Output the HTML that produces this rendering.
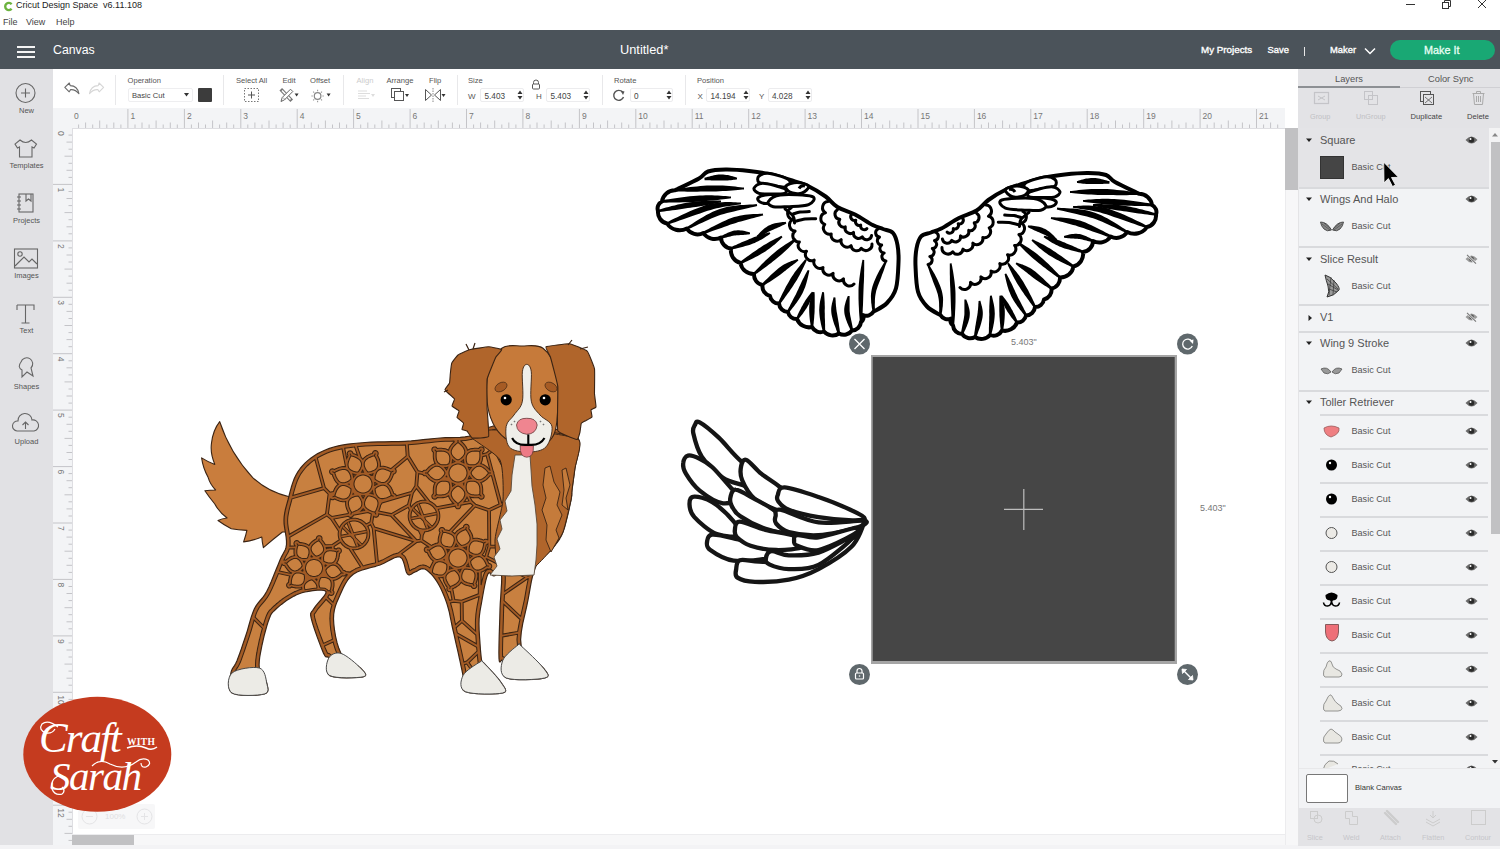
<!DOCTYPE html><html><head><meta charset="utf-8"><style>
*{margin:0;padding:0;box-sizing:border-box}
html,body{width:1500px;height:849px;overflow:hidden;background:#fff;font-family:"Liberation Sans",sans-serif;color:#333}
.a{position:absolute}
.t{position:absolute;white-space:nowrap;line-height:1}
svg{position:absolute;overflow:visible}
</style></head><body>
<div class="a" style="left:0;top:0;width:1500px;height:30px;background:#fff"></div>
<svg style="left:3px;top:1px" width="11" height="11" viewBox="0 0 11 11"><path d="M8.6 3.2 A3.6 3.6 0 1 0 8.6 7.8" fill="none" stroke="#6cb33f" stroke-width="2.4"/></svg>
<div class="t" style="left:16px;top:1px;font-size:9px;color:#222">Cricut Design Space&nbsp; v6.11.108</div>
<div class="t" style="left:3px;top:18px;font-size:9px;color:#444">File</div>
<div class="t" style="left:26px;top:18px;font-size:9px;color:#444">View</div>
<div class="t" style="left:56px;top:18px;font-size:9px;color:#444">Help</div>
<div class="a" style="left:1406px;top:4px;width:9px;height:1px;background:#333"></div>
<svg style="left:1441px;top:0px" width="10" height="9" viewBox="0 0 10 9"><rect x="1.5" y="2.5" width="6" height="6" fill="none" stroke="#333"/><path d="M3.5 2.5V0.5H9.5V6.5H7.5" fill="none" stroke="#333"/></svg>
<svg style="left:1477px;top:0px" width="10" height="9" viewBox="0 0 10 9"><path d="M1 0L9 8M9 0L1 8" stroke="#333" stroke-width="1"/></svg>
<div class="a" style="left:0;top:30px;width:1500px;height:39px;background:#4b535a"></div>
<div class="a" style="left:16.5px;top:45.8px;width:18.5px;height:2px;background:#f4f4f4;box-shadow:0 5px 0 #f4f4f4,0 10px 0 #f4f4f4"></div>
<div class="t" style="left:53px;top:44px;font-size:12.3px;color:#fff">Canvas</div>
<div class="t" style="left:620px;top:44px;font-size:12.8px;color:#fff">Untitled*</div>
<div class="t" style="left:1201px;top:45px;font-size:9.8px;color:#fff;-webkit-text-stroke:0.35px #fff">My Projects</div>
<div class="t" style="left:1267.5px;top:45px;font-size:9.4px;color:#fff;-webkit-text-stroke:0.35px #fff">Save</div>
<div class="a" style="left:1304px;top:46.5px;width:1.3px;height:9.5px;background:#e8e8e8"></div>
<div class="t" style="left:1330px;top:45px;font-size:9.4px;color:#fff;-webkit-text-stroke:0.35px #fff">Maker</div>
<svg style="left:1364px;top:47px" width="12" height="8" viewBox="0 0 12 8"><path d="M1 1.5L6 6.5L11 1.5" fill="none" stroke="#fff" stroke-width="1.5"/></svg>
<div class="a" style="left:1390px;top:40px;width:105px;height:20px;border-radius:10px;background:#19a874"></div>
<div class="t" style="left:1424px;top:44.5px;font-size:10.8px;color:#e8fff5;-webkit-text-stroke:0.3px #e8fff5">Make It</div>
<div class="a" style="left:0;top:69px;width:53px;height:780px;background:#e1e1e4"></div>
<div class="t" style="left:0;width:53px;text-align:center;top:107px;font-size:7.5px;color:#555">New</div>
<div class="t" style="left:0;width:53px;text-align:center;top:162px;font-size:7.5px;color:#555">Templates</div>
<div class="t" style="left:0;width:53px;text-align:center;top:217px;font-size:7.5px;color:#555">Projects</div>
<div class="t" style="left:0;width:53px;text-align:center;top:272px;font-size:7.5px;color:#555">Images</div>
<div class="t" style="left:0;width:53px;text-align:center;top:327px;font-size:7.5px;color:#555">Text</div>
<div class="t" style="left:0;width:53px;text-align:center;top:383px;font-size:7.5px;color:#555">Shapes</div>
<div class="t" style="left:0;width:53px;text-align:center;top:438px;font-size:7.5px;color:#555">Upload</div>
<svg style="left:0;top:0" width="53" height="849"><circle cx="25.5" cy="93" r="9.5" fill="none" stroke="#666" stroke-width="1.1"/><path d="M25.5 88.5V97.5M21 93H30" fill="none" stroke="#666" stroke-width="1.1" stroke-width="1.4"/><path d="M20 140 L15 144 L17.5 148 L19.5 147 V157 H32 V147 L34 148 L36.5 144 L31.5 140 Q25.7 145 20 140Z" fill="none" stroke="#666" stroke-width="1.1"/><rect x="19" y="194" width="14" height="18" fill="none" stroke="#666" stroke-width="1.1"/><path d="M17 197H21M17 201H21M17 205H21M17 209H21M26 194V201L28.5 199L31 201V194" fill="none" stroke="#666" stroke-width="1.1"/><rect x="14.5" y="249" width="23" height="19" fill="none" stroke="#666" stroke-width="1.1"/><circle cx="20" cy="254" r="2.2" fill="none" stroke="#666" stroke-width="1.1"/><path d="M15 266L24 257L29 262L32 259L37 264" fill="none" stroke="#666" stroke-width="1.1"/><path d="M17 305H34V310M17 305V310M25.5 305V323M21.5 323H29.5" fill="none" stroke="#666" stroke-width="1.1" stroke-width="2"/><path d="M21 362 A6 6 0 1 1 31 368 L33 376 L27 372 L22 377 L22 370 Q17 367 21 362Z" fill="none" stroke="#666" stroke-width="1.1"/><path d="M17 431 A5 5 0 0 1 18 421 A7 7 0 0 1 32 420 A5.5 5.5 0 0 1 34 431Z M25.5 429V422M22.5 425L25.5 422L28.5 425" fill="none" stroke="#666" stroke-width="1.1"/></svg>
<div class="a" style="left:53px;top:69px;width:1245px;height:39px;background:#fff"></div>
<div class="a" style="left:115px;top:75px;width:1px;height:30px;background:#e8e8ea"></div>
<div class="a" style="left:223px;top:75px;width:1px;height:30px;background:#e8e8ea"></div>
<div class="a" style="left:343px;top:75px;width:1px;height:30px;background:#e8e8ea"></div>
<div class="a" style="left:456.5px;top:75px;width:1px;height:30px;background:#e8e8ea"></div>
<div class="a" style="left:601.5px;top:75px;width:1px;height:30px;background:#e8e8ea"></div>
<div class="a" style="left:684.5px;top:75px;width:1px;height:30px;background:#e8e8ea"></div>
<svg style="left:0;top:0" width="1300" height="110"><path d="M64.8 87.3L69.3 83L70.2 85.6Q77.5 85.8 78.9 93.6Q75.5 89.3 70.6 89.6L69.2 91.8Z" fill="none" stroke="#6a6a6a" stroke-width="1.1" stroke-linejoin="round"/><path d="M103.6 87.3L99.1 83L98.2 85.6Q90.9 85.8 89.5 93.6Q92.9 89.3 97.8 89.6L99.2 91.8Z" fill="none" stroke="#d6d6d6" stroke-width="1.1" stroke-linejoin="round"/></svg>
<div class="t" style="left:127.5px;top:76.5px;font-size:7.6px;color:#555">Operation</div>
<div class="t" style="left:236px;top:76.5px;font-size:7.6px;color:#555">Select All</div>
<div class="t" style="left:282.5px;top:76.5px;font-size:7.6px;color:#555">Edit</div>
<div class="t" style="left:310px;top:76.5px;font-size:7.6px;color:#555">Offset</div>
<div class="t" style="left:356.5px;top:76.5px;font-size:7.6px;color:#ccc">Align</div>
<div class="t" style="left:386.5px;top:76.5px;font-size:7.6px;color:#555">Arrange</div>
<div class="t" style="left:429px;top:76.5px;font-size:7.6px;color:#555">Flip</div>
<div class="t" style="left:468px;top:76.5px;font-size:7.6px;color:#555">Size</div>
<div class="t" style="left:614px;top:76.5px;font-size:7.6px;color:#555">Rotate</div>
<div class="t" style="left:697px;top:76.5px;font-size:7.6px;color:#555">Position</div>
<div class="a" style="left:127.5px;top:88px;width:65px;height:14px;border:1px solid #eeeef0;border-radius:2px"></div>
<div class="t" style="left:132px;top:92px;font-size:7.6px;color:#444">Basic Cut</div>
<svg style="left:184px;top:93px" width="5" height="4"><path d="M0 0H5L2.5 3.5Z" fill="#333"/></svg>
<div class="a" style="left:198px;top:88px;width:14px;height:14px;background:#3c3c3c;border-radius:1px"></div>
<svg style="left:0;top:0" width="1300" height="110"><rect x="244.5" y="88.5" width="14" height="13" fill="none" stroke="#777" stroke-dasharray="1.5 1.5"/><path d="M251.5 91.5V98.5M248 95H255" stroke="#555" stroke-width="1"/><path d="M282 90.5L290.5 99.5" stroke="#777" stroke-width="3.6" stroke-linecap="square"/><path d="M282 90.5L290.5 99.5" stroke="#fff" stroke-width="1.6"/><path d="M281 101.5L282.2 97.5L290.5 89.2L292.8 91.5L284.5 99.8Z" fill="#fff" stroke="#666" stroke-width="1"/><path d="M283 97.5L285.5 100" stroke="#888" stroke-width="0.8"/><path d="M294.6 93.6H298.6L296.6 96.4Z" fill="#333"/><circle cx="317.6" cy="96" r="3.3" fill="none" stroke="#888" stroke-width="1.2"/><path d="M317.6 89.8V91.2M317.6 100.8V102.2M311.4 96H312.8M322.4 96H323.8M313.2 91.6L314.2 92.6M321 99.4L322 100.4M313.2 100.4L314.2 99.4M321 92.6L322 91.6" stroke="#999" stroke-width="1.1"/><path d="M326.6 93.6H330.6L328.6 96.4Z" fill="#333"/><path d="M358 91H367M358 93.5H370M358 96H366M358 98.5H369" stroke="#ddd" stroke-width="1"/><path d="M371 94H375L373 97Z" fill="#ddd"/><rect x="391.5" y="88.5" width="9" height="9" fill="#fff" stroke="#555"/><rect x="394.5" y="91.5" width="9" height="9" fill="#fff" stroke="#555"/><path d="M405 94H409L407 97Z" fill="#333"/><path d="M425.5 89.5V100.5L431.5 95Z M440.5 89.5V100.5L434.5 95Z" fill="none" stroke="#555"/><path d="M433 88V102" stroke="#888" stroke-dasharray="1.5 1"/><path d="M441.5 94H445.5L443.5 97Z" fill="#333"/><path d="M533.5 84V82.5A2.5 2.5 0 0 1 538.5 82.5V84" fill="none" stroke="#555"/><rect x="532.5" y="84" width="7" height="5" rx="1" fill="none" stroke="#555"/><path d="M622.5 92 A5 5 0 1 0 623.5 97" fill="none" stroke="#555" stroke-width="1.4"/><path d="M620.5 90.5L624.5 91.5L623 95Z" fill="#555"/></svg>
<div class="a" style="left:480px;top:88px;width:44px;height:14px;border:1px solid #ececee;border-radius:2px"></div>
<div class="t" style="left:484.5px;top:92.5px;font-size:8.2px;color:#444">5.403</div>
<svg style="left:517px;top:90px" width="6" height="10"><path d="M0.5 4H5.5L3 0.5Z M0.5 6H5.5L3 9.5Z" fill="#333"/></svg>
<div class="t" style="left:468px;top:92.5px;font-size:8px;color:#555">W</div>
<div class="a" style="left:546px;top:88px;width:44px;height:14px;border:1px solid #ececee;border-radius:2px"></div>
<div class="t" style="left:550.5px;top:92.5px;font-size:8.2px;color:#444">5.403</div>
<svg style="left:583px;top:90px" width="6" height="10"><path d="M0.5 4H5.5L3 0.5Z M0.5 6H5.5L3 9.5Z" fill="#333"/></svg>
<div class="t" style="left:536px;top:92.5px;font-size:8px;color:#555">H</div>
<div class="a" style="left:629.5px;top:88px;width:43px;height:14px;border:1px solid #ececee;border-radius:2px"></div>
<div class="t" style="left:634.0px;top:92.5px;font-size:8.2px;color:#444">0</div>
<svg style="left:665.5px;top:90px" width="6" height="10"><path d="M0.5 4H5.5L3 0.5Z M0.5 6H5.5L3 9.5Z" fill="#333"/></svg>
<div class="a" style="left:706px;top:88px;width:44px;height:14px;border:1px solid #ececee;border-radius:2px"></div>
<div class="t" style="left:710.5px;top:92.5px;font-size:8.2px;color:#444">14.194</div>
<svg style="left:743px;top:90px" width="6" height="10"><path d="M0.5 4H5.5L3 0.5Z M0.5 6H5.5L3 9.5Z" fill="#333"/></svg>
<div class="t" style="left:697.5px;top:92.5px;font-size:8px;color:#555">X</div>
<div class="a" style="left:767.5px;top:88px;width:44px;height:14px;border:1px solid #ececee;border-radius:2px"></div>
<div class="t" style="left:772.0px;top:92.5px;font-size:8.2px;color:#444">4.028</div>
<svg style="left:804.5px;top:90px" width="6" height="10"><path d="M0.5 4H5.5L3 0.5Z M0.5 6H5.5L3 9.5Z" fill="#333"/></svg>
<div class="t" style="left:759px;top:92.5px;font-size:8px;color:#555">Y</div>
<div class="a" style="left:53px;top:108px;width:1232px;height:20px;background:#f3f4f6"></div>
<div class="a" style="left:53px;top:128px;width:19px;height:717px;background:#f3f4f6"></div>
<svg style="left:0;top:0" width="1500" height="849"><path d="M78.6 124.5V128M85.6 122.5V128M92.7 124.5V128M99.7 120.5V128M106.8 124.5V128M113.8 122.5V128M120.9 124.5V128M127.9 109V128M135.0 124.5V128M142.0 122.5V128M149.1 124.5V128M156.1 120.5V128M163.2 124.5V128M170.3 122.5V128M177.3 124.5V128M184.4 109V128M191.4 124.5V128M198.5 122.5V128M205.5 124.5V128M212.6 120.5V128M219.6 124.5V128M226.7 122.5V128M233.7 124.5V128M240.8 109V128M247.8 124.5V128M254.9 122.5V128M262.0 124.5V128M269.0 120.5V128M276.1 124.5V128M283.1 122.5V128M290.2 124.5V128M297.2 109V128M304.3 124.5V128M311.3 122.5V128M318.4 124.5V128M325.4 120.5V128M332.5 124.5V128M339.5 122.5V128M346.6 124.5V128M353.6 109V128M360.7 124.5V128M367.8 122.5V128M374.8 124.5V128M381.9 120.5V128M388.9 124.5V128M396.0 122.5V128M403.0 124.5V128M410.1 109V128M417.1 124.5V128M424.2 122.5V128M431.2 124.5V128M438.3 120.5V128M445.3 124.5V128M452.4 122.5V128M459.5 124.5V128M466.5 109V128M473.6 124.5V128M480.6 122.5V128M487.7 124.5V128M494.7 120.5V128M501.8 124.5V128M508.8 122.5V128M515.9 124.5V128M522.9 109V128M530.0 124.5V128M537.0 122.5V128M544.1 124.5V128M551.2 120.5V128M558.2 124.5V128M565.3 122.5V128M572.3 124.5V128M579.4 109V128M586.4 124.5V128M593.5 122.5V128M600.5 124.5V128M607.6 120.5V128M614.6 124.5V128M621.7 122.5V128M628.7 124.5V128M635.8 109V128M642.9 124.5V128M649.9 122.5V128M657.0 124.5V128M664.0 120.5V128M671.1 124.5V128M678.1 122.5V128M685.2 124.5V128M692.2 109V128M699.3 124.5V128M706.3 122.5V128M713.4 124.5V128M720.4 120.5V128M727.5 124.5V128M734.6 122.5V128M741.6 124.5V128M748.7 109V128M755.7 124.5V128M762.8 122.5V128M769.8 124.5V128M776.9 120.5V128M783.9 124.5V128M791.0 122.5V128M798.0 124.5V128M805.1 109V128M812.1 124.5V128M819.2 122.5V128M826.3 124.5V128M833.3 120.5V128M840.4 124.5V128M847.4 122.5V128M854.5 124.5V128M861.5 109V128M868.6 124.5V128M875.6 122.5V128M882.7 124.5V128M889.7 120.5V128M896.8 124.5V128M903.8 122.5V128M910.9 124.5V128M918.0 109V128M925.0 124.5V128M932.1 122.5V128M939.1 124.5V128M946.2 120.5V128M953.2 124.5V128M960.3 122.5V128M967.3 124.5V128M974.4 109V128M981.4 124.5V128M988.5 122.5V128M995.5 124.5V128M1002.6 120.5V128M1009.6 124.5V128M1016.7 122.5V128M1023.8 124.5V128M1030.8 109V128M1037.9 124.5V128M1044.9 122.5V128M1052.0 124.5V128M1059.0 120.5V128M1066.1 124.5V128M1073.1 122.5V128M1080.2 124.5V128M1087.2 109V128M1094.3 124.5V128M1101.3 122.5V128M1108.4 124.5V128M1115.5 120.5V128M1122.5 124.5V128M1129.6 122.5V128M1136.6 124.5V128M1143.7 109V128M1150.7 124.5V128M1157.8 122.5V128M1164.8 124.5V128M1171.9 120.5V128M1178.9 124.5V128M1186.0 122.5V128M1193.0 124.5V128M1200.1 109V128M1207.2 124.5V128M1214.2 122.5V128M1221.3 124.5V128M1228.3 120.5V128M1235.4 124.5V128M1242.4 122.5V128M1249.5 124.5V128M1256.5 109V128M1263.6 124.5V128M1270.6 122.5V128M1277.7 124.5V128M68.5 135.1H72M66.5 142.1H72M68.5 149.2H72M64.5 156.2H72M68.5 163.3H72M66.5 170.3H72M68.5 177.4H72M53 184.4H72M68.5 191.5H72M66.5 198.5H72M68.5 205.6H72M64.5 212.6H72M68.5 219.7H72M66.5 226.8H72M68.5 233.8H72M53 240.9H72M68.5 247.9H72M66.5 255.0H72M68.5 262.0H72M64.5 269.1H72M68.5 276.1H72M66.5 283.2H72M68.5 290.2H72M53 297.3H72M68.5 304.3H72M66.5 311.4H72M68.5 318.5H72M64.5 325.5H72M68.5 332.6H72M66.5 339.6H72M68.5 346.7H72M53 353.7H72M68.5 360.8H72M66.5 367.8H72M68.5 374.9H72M64.5 381.9H72M68.5 389.0H72M66.5 396.0H72M68.5 403.1H72M53 410.1H72M68.5 417.2H72M66.5 424.3H72M68.5 431.3H72M64.5 438.4H72M68.5 445.4H72M66.5 452.5H72M68.5 459.5H72M53 466.6H72M68.5 473.6H72M66.5 480.7H72M68.5 487.7H72M64.5 494.8H72M68.5 501.8H72M66.5 508.9H72M68.5 516.0H72M53 523.0H72M68.5 530.1H72M66.5 537.1H72M68.5 544.2H72M64.5 551.2H72M68.5 558.3H72M66.5 565.3H72M68.5 572.4H72M53 579.4H72M68.5 586.5H72M66.5 593.5H72M68.5 600.6H72M64.5 607.7H72M68.5 614.7H72M66.5 621.8H72M68.5 628.8H72M53 635.9H72M68.5 642.9H72M66.5 650.0H72M68.5 657.0H72M64.5 664.1H72M68.5 671.1H72M66.5 678.2H72M68.5 685.2H72M53 692.3H72M68.5 699.4H72M66.5 706.4H72M68.5 713.5H72M64.5 720.5H72M68.5 727.6H72M66.5 734.6H72M68.5 741.7H72M53 748.7H72M68.5 755.8H72M66.5 762.8H72M68.5 769.9H72M64.5 776.9H72M68.5 784.0H72M66.5 791.1H72M68.5 798.1H72M53 805.2H72M68.5 812.2H72M66.5 819.3H72M68.5 826.3H72M64.5 833.4H72M68.5 840.4H72" stroke="#c4c4c8" stroke-width="1" fill="none"/><text x="74.0" y="119" font-size="8.5" fill="#777" font-family="Liberation Sans">0</text><text x="130.4" y="119" font-size="8.5" fill="#777" font-family="Liberation Sans">1</text><text x="186.9" y="119" font-size="8.5" fill="#777" font-family="Liberation Sans">2</text><text x="243.3" y="119" font-size="8.5" fill="#777" font-family="Liberation Sans">3</text><text x="299.7" y="119" font-size="8.5" fill="#777" font-family="Liberation Sans">4</text><text x="356.1" y="119" font-size="8.5" fill="#777" font-family="Liberation Sans">5</text><text x="412.6" y="119" font-size="8.5" fill="#777" font-family="Liberation Sans">6</text><text x="469.0" y="119" font-size="8.5" fill="#777" font-family="Liberation Sans">7</text><text x="525.4" y="119" font-size="8.5" fill="#777" font-family="Liberation Sans">8</text><text x="581.9" y="119" font-size="8.5" fill="#777" font-family="Liberation Sans">9</text><text x="638.3" y="119" font-size="8.5" fill="#777" font-family="Liberation Sans">10</text><text x="694.7" y="119" font-size="8.5" fill="#777" font-family="Liberation Sans">11</text><text x="751.2" y="119" font-size="8.5" fill="#777" font-family="Liberation Sans">12</text><text x="807.6" y="119" font-size="8.5" fill="#777" font-family="Liberation Sans">13</text><text x="864.0" y="119" font-size="8.5" fill="#777" font-family="Liberation Sans">14</text><text x="920.5" y="119" font-size="8.5" fill="#777" font-family="Liberation Sans">15</text><text x="976.9" y="119" font-size="8.5" fill="#777" font-family="Liberation Sans">16</text><text x="1033.3" y="119" font-size="8.5" fill="#777" font-family="Liberation Sans">17</text><text x="1089.7" y="119" font-size="8.5" fill="#777" font-family="Liberation Sans">18</text><text x="1146.2" y="119" font-size="8.5" fill="#777" font-family="Liberation Sans">19</text><text x="1202.6" y="119" font-size="8.5" fill="#777" font-family="Liberation Sans">20</text><text x="1259.0" y="119" font-size="8.5" fill="#777" font-family="Liberation Sans">21</text><text transform="translate(58,131.0) rotate(90)" font-size="8.5" fill="#777" font-family="Liberation Sans">0</text><text transform="translate(58,187.4) rotate(90)" font-size="8.5" fill="#777" font-family="Liberation Sans">1</text><text transform="translate(58,243.9) rotate(90)" font-size="8.5" fill="#777" font-family="Liberation Sans">2</text><text transform="translate(58,300.3) rotate(90)" font-size="8.5" fill="#777" font-family="Liberation Sans">3</text><text transform="translate(58,356.7) rotate(90)" font-size="8.5" fill="#777" font-family="Liberation Sans">4</text><text transform="translate(58,413.1) rotate(90)" font-size="8.5" fill="#777" font-family="Liberation Sans">5</text><text transform="translate(58,469.6) rotate(90)" font-size="8.5" fill="#777" font-family="Liberation Sans">6</text><text transform="translate(58,526.0) rotate(90)" font-size="8.5" fill="#777" font-family="Liberation Sans">7</text><text transform="translate(58,582.4) rotate(90)" font-size="8.5" fill="#777" font-family="Liberation Sans">8</text><text transform="translate(58,638.9) rotate(90)" font-size="8.5" fill="#777" font-family="Liberation Sans">9</text><text transform="translate(58,695.3) rotate(90)" font-size="8.5" fill="#777" font-family="Liberation Sans">10</text><text transform="translate(58,751.7) rotate(90)" font-size="8.5" fill="#777" font-family="Liberation Sans">11</text><text transform="translate(58,808.2) rotate(90)" font-size="8.5" fill="#777" font-family="Liberation Sans">12</text></svg>
<div class="a" style="left:72px;top:127.5px;width:1213px;height:1px;background:#dedee2"></div>
<div class="a" style="left:71.5px;top:128px;width:1px;height:717px;background:#dedee2"></div>
<div class="a" style="left:1285px;top:128px;width:13px;height:717px;background:#f7f7f8;border-left:1px solid #ececee"></div>
<div class="a" style="left:1285px;top:128px;width:12.5px;height:62px;background:#c1c1c3"></div>
<div class="a" style="left:72px;top:834px;width:1213px;height:11px;background:#f7f7f8;border-top:1px solid #ececee"></div>
<div class="a" style="left:72px;top:835px;width:62px;height:10px;background:#c1c1c3"></div>
<div class="a" style="left:0;top:845px;width:1500px;height:4px;background:#f3f3f5"></div>
<div class="a" style="left:78px;top:804px;width:77px;height:25px;background:#f7f7f8;border-radius:2px"></div>
<svg style="left:0;top:0" width="200" height="849"><circle cx="89.5" cy="816.5" r="7.5" fill="none" stroke="#e4e4e6"/><path d="M86 816.5H93" stroke="#e4e4e6"/><circle cx="144.5" cy="816.5" r="7.5" fill="none" stroke="#e4e4e6"/><path d="M141 816.5H148M144.5 813V820" stroke="#e4e4e6"/></svg>
<div class="t" style="left:105px;top:813px;font-size:8px;color:#e0e0e2">100%</div>
<svg style="left:0;top:0" width="1500" height="849" viewBox="0 0 1500 849">
<rect x="871" y="355" width="306" height="309" fill="#a5a5a5"/>
<rect x="872.7" y="357" width="302" height="304" fill="#464646"/>
<path d="M1023.8 489V530M1004 509.3H1043" stroke="#bdbdbd" stroke-width="1.2"/>
<text x="1011" y="344.5" font-size="9" fill="#777" font-family="Liberation Sans">5.403"</text>
<text x="1200" y="511" font-size="9" fill="#777" font-family="Liberation Sans">5.403"</text>
<circle cx="859.5" cy="344" r="10.5" fill="#5f686c"/><path d="M854.5 339L864.5 349M864.5 339L854.5 349" stroke="#fff" stroke-width="1.3"/>
<circle cx="1187.5" cy="344" r="10.5" fill="#5f686c"/><path d="M1192 341.5A5 5 0 1 0 1192.3 346" fill="none" stroke="#fff" stroke-width="1.3"/><path d="M1189.5 340.5L1193.5 339.5L1193 344Z" fill="#fff"/>
<circle cx="859.5" cy="674.5" r="10.5" fill="#5f686c"/><rect x="855.5" y="673" width="8" height="6" rx="1" fill="none" stroke="#fff" stroke-width="1.2"/><path d="M857 673V671A2.5 2.5 0 0 1 862 671V673" fill="none" stroke="#fff" stroke-width="1.2"/><circle cx="859.5" cy="676" r="0.8" fill="#fff"/>
<circle cx="1187.5" cy="674.5" r="10.5" fill="#5f686c"/><path d="M1182.5 669.5L1192.5 679.5" stroke="#fff" stroke-width="1.4"/><path d="M1182 669L1186.5 669.5L1182.5 673.5Z M1193 680L1188.5 679.5L1192.5 675.5Z" fill="#fff" stroke="#fff" stroke-width="0.8"/>
<g><path d="M675.0 190.3C679.0 188.3 693.5 181.6 699.0 178.5C704.5 175.4 703.5 173.0 708.0 171.5C712.5 170.0 718.8 169.6 725.7 169.5C732.6 169.4 742.0 170.2 749.2 171.0C756.4 171.8 762.1 172.5 769.0 174.0C775.9 175.5 783.8 178.0 790.3 180.0C796.8 182.0 802.1 183.2 808.0 186.0C813.9 188.8 820.7 193.0 825.6 196.5C830.5 200.0 832.5 204.0 837.4 207.0C842.3 210.0 849.1 211.5 855.0 214.5C860.9 217.5 868.0 222.6 872.7 225.0C877.4 227.4 879.6 227.7 883.0 229.0C886.4 230.3 890.6 230.3 893.0 233.0C895.4 235.7 896.6 240.1 897.5 245.0C898.4 249.9 898.8 255.2 898.5 262.4C898.2 269.6 897.9 281.5 896.0 288.3C894.1 295.1 890.7 299.1 887.0 303.0C883.3 306.9 875.8 310.2 873.6 311.6A8.3 8.3 0 0 1 863.0 315.0A5.5 5.5 0 0 1 861.0 322.0A9.3 9.3 0 0 1 852.0 330.5A10.0 10.0 0 0 1 839.0 333.5A11.3 11.3 0 0 1 824.0 331.5A9.6 9.6 0 0 1 812.0 327.0A12.8 12.8 0 0 1 797.0 319.0A8.6 8.6 0 0 1 788.0 312.0A9.3 9.3 0 0 1 779.0 303.5A8.8 8.8 0 0 1 770.0 296.0A10.0 10.0 0 0 1 762.5 285.0A10.4 10.4 0 0 1 754.0 274.0A13.1 13.1 0 0 1 740.5 263.0A13.0 13.0 0 0 1 731.0 248.5A11.1 11.1 0 0 1 721.0 237.5A13.7 13.7 0 0 1 703.3 233.0A12.8 12.8 0 0 1 686.8 228.5A15.3 15.3 0 0 1 667.0 223.5A11.6 11.6 0 0 1 658.0 211.0A7.7 7.7 0 0 1 662.0 201.5A12.9 12.9 0 0 1 675.0 190.3Z" fill="#fff" stroke="#000" stroke-width="4" stroke-linejoin="round"/>
<path d="M704.6 180.2L705.4 180.2L706.3 180.3L707.5 180.3L708.7 180.3L710.0 180.3L711.4 180.4L712.9 180.4L714.4 180.4L715.9 180.4L717.3 180.4L718.7 180.4L720.0 180.5L721.4 180.5L722.8 180.5L724.4 180.5L726.0 180.5L727.7 180.4L729.3 180.3L730.9 180.2L732.4 180.0L733.8 179.8L735.0 179.7L736.1 179.5L736.9 179.4L737.1 177.6L736.3 177.4L735.2 177.0L734.0 176.7L732.7 176.3L731.2 175.9L729.6 175.5L728.0 175.1L726.3 174.9L724.7 174.7L723.0 174.5L721.5 174.5L720.0 174.5L718.5 174.6L717.0 174.8L715.4 175.0L713.9 175.3L712.4 175.7L710.9 176.0L709.5 176.4L708.2 176.7L707.0 177.1L706.0 177.4L705.1 177.6L704.4 177.8Z" fill="#000"/>
<path d="M675.1 191.5L676.8 191.5L678.9 191.6L681.4 191.6L684.2 191.6L687.3 191.7L690.5 191.7L693.8 191.7L697.2 191.7L700.6 191.6L703.9 191.6L707.1 191.5L710.1 191.5L713.0 191.4L716.1 191.4L719.4 191.3L722.7 191.1L726.0 190.9L729.2 190.7L732.3 190.5L735.2 190.2L737.9 190.0L740.3 189.8L742.4 189.6L744.0 189.4L744.0 187.6L742.4 187.4L740.3 187.2L737.9 186.9L735.2 186.6L732.3 186.3L729.2 186.1L726.0 185.8L722.7 185.6L719.4 185.5L716.1 185.4L712.9 185.4L709.9 185.5L706.9 185.6L703.7 185.8L700.4 186.1L697.0 186.4L693.6 186.8L690.2 187.1L687.0 187.5L684.0 187.9L681.2 188.3L678.7 188.6L676.6 188.9L674.9 189.1Z" fill="#000"/>
<path d="M662.1 202.7L664.0 202.7L666.3 202.7L669.1 202.6L672.3 202.6L675.7 202.5L679.3 202.4L682.9 202.3L686.7 202.2L690.3 202.0L693.8 201.9L697.2 201.7L700.2 201.5L703.1 201.3L706.1 201.1L709.1 200.8L712.1 200.6L715.1 200.3L717.9 200.0L720.7 199.6L723.3 199.3L725.6 199.0L727.7 198.7L729.6 198.5L731.0 198.3L731.0 196.5L729.5 196.4L727.7 196.3L725.6 196.1L723.2 195.9L720.6 195.7L717.8 195.6L714.9 195.4L711.9 195.3L708.9 195.3L705.8 195.3L702.8 195.4L699.8 195.5L696.8 195.7L693.4 196.0L689.9 196.3L686.2 196.8L682.5 197.2L678.9 197.7L675.3 198.2L671.9 198.7L668.8 199.2L666.1 199.6L663.7 200.0L661.9 200.3Z" fill="#000"/>
<path d="M658.2 212.2L659.8 212.0L661.8 211.7L664.1 211.4L666.7 211.1L669.5 210.7L672.5 210.3L675.5 209.9L678.7 209.4L681.8 209.0L684.8 208.5L687.7 208.1L690.4 207.7L693.1 207.3L695.9 206.9L698.9 206.5L701.8 206.0L704.8 205.5L707.7 205.0L710.5 204.5L713.2 204.0L715.6 203.5L717.8 203.1L719.6 202.7L721.1 202.4L720.9 200.6L719.4 200.6L717.5 200.6L715.3 200.6L712.8 200.6L710.1 200.7L707.3 200.7L704.3 200.8L701.3 201.0L698.2 201.2L695.2 201.5L692.3 201.9L689.6 202.3L686.8 202.8L683.9 203.3L680.9 204.0L677.8 204.6L674.7 205.4L671.7 206.1L668.7 206.9L666.0 207.6L663.5 208.3L661.2 208.9L659.3 209.4L657.8 209.8Z" fill="#000"/>
<path d="M667.4 224.6L669.6 223.9L672.4 223.0L675.7 221.9L679.4 220.6L683.3 219.2L687.5 217.8L691.7 216.3L696.0 214.8L700.1 213.4L704.0 212.0L707.6 210.8L710.8 209.9L713.7 209.1L716.7 208.3L719.7 207.7L722.7 207.1L725.6 206.6L728.3 206.2L731.0 205.8L733.5 205.4L735.8 205.1L737.8 204.8L739.6 204.5L741.1 204.2L740.9 202.4L739.5 202.4L737.7 202.4L735.6 202.3L733.3 202.2L730.8 202.1L728.0 202.1L725.1 202.1L722.1 202.2L718.9 202.5L715.7 202.9L712.5 203.4L709.2 204.1L705.8 205.1L702.1 206.4L698.1 207.9L694.0 209.5L689.8 211.3L685.6 213.2L681.6 215.1L677.8 216.9L674.3 218.6L671.2 220.1L668.6 221.4L666.6 222.4Z" fill="#000"/>
<path d="M687.4 229.6L689.0 228.8L691.1 227.9L693.5 226.8L696.2 225.5L699.1 224.1L702.1 222.7L705.3 221.2L708.6 219.7L711.8 218.3L715.0 217.0L718.1 215.8L720.9 214.8L723.9 213.9L727.1 213.1L730.5 212.3L733.9 211.4L737.5 210.6L740.9 209.8L744.3 209.0L747.5 208.3L750.5 207.6L753.1 206.9L755.4 206.4L757.2 205.9L756.8 204.1L755.0 204.2L752.7 204.4L750.0 204.5L747.0 204.7L743.7 204.9L740.2 205.1L736.6 205.5L732.9 206.0L729.2 206.6L725.7 207.3L722.3 208.2L719.1 209.2L715.9 210.4L712.7 211.8L709.5 213.4L706.3 215.1L703.1 216.9L700.0 218.7L697.1 220.5L694.4 222.3L691.9 223.9L689.7 225.3L687.8 226.5L686.2 227.4Z" fill="#000"/>
<path d="M703.8 234.1L705.4 233.6L707.4 232.9L709.8 232.1L712.4 231.1L715.3 230.1L718.3 229.0L721.4 227.9L724.6 226.8L727.6 225.7L730.6 224.6L733.4 223.7L735.9 222.9L738.3 222.1L740.9 221.4L743.5 220.7L746.2 220.0L748.8 219.3L751.4 218.6L753.8 218.0L756.1 217.3L758.3 216.8L760.2 216.2L761.8 215.8L763.2 215.4L762.8 213.6L761.5 213.7L759.8 213.8L757.8 213.9L755.6 213.9L753.2 214.1L750.6 214.3L747.9 214.5L745.1 214.8L742.3 215.2L739.5 215.8L736.8 216.4L734.1 217.1L731.4 218.0L728.5 219.1L725.5 220.4L722.5 221.7L719.5 223.2L716.5 224.7L713.6 226.2L710.9 227.6L708.4 228.9L706.2 230.1L704.3 231.1L702.8 231.9Z" fill="#000"/>
<path d="M721.4 238.6L722.1 238.5L723.0 238.3L724.0 238.0L725.2 237.7L726.4 237.4L727.7 237.1L729.1 236.7L730.4 236.4L731.7 236.1L733.0 235.8L734.2 235.6L735.4 235.5L736.5 235.3L737.7 235.3L739.0 235.2L740.4 235.1L741.9 235.0L743.3 234.9L744.6 234.8L746.0 234.7L747.2 234.5L748.3 234.4L749.2 234.3L750.0 234.2L750.0 232.4L749.3 232.2L748.4 232.0L747.4 231.7L746.2 231.4L744.9 231.1L743.5 230.8L742.0 230.6L740.5 230.4L739.0 230.3L737.5 230.3L736.0 230.4L734.6 230.5L733.3 230.8L731.9 231.2L730.5 231.7L729.1 232.2L727.7 232.8L726.4 233.4L725.2 234.0L724.0 234.6L722.9 235.2L722.0 235.6L721.2 236.1L720.6 236.4Z" fill="#000"/>
<path d="M758.1 237.8L758.8 237.4L759.6 236.9L760.6 236.4L761.6 235.8L762.7 235.1L763.9 234.4L765.2 233.7L766.4 232.9L767.7 232.2L768.9 231.6L770.1 231.0L771.2 230.4L772.4 229.9L773.6 229.4L775.0 228.8L776.5 228.2L778.0 227.6L779.4 226.9L780.9 226.3L782.2 225.6L783.5 225.0L784.6 224.5L785.5 224.0L786.3 223.6L785.7 221.8L784.9 221.9L783.9 222.0L782.6 222.1L781.2 222.3L779.7 222.4L778.1 222.7L776.5 222.9L774.9 223.3L773.2 223.8L771.7 224.3L770.2 224.9L768.8 225.6L767.5 226.3L766.2 227.2L764.9 228.1L763.7 229.1L762.6 230.1L761.5 231.1L760.4 232.1L759.5 233.0L758.6 233.9L757.9 234.7L757.2 235.3L756.7 235.8Z" fill="#000"/>
<path d="M731.4 249.6L732.5 249.4L733.8 249.1L735.4 248.7L737.1 248.3L739.1 247.8L741.1 247.3L743.2 246.7L745.3 246.1L747.4 245.5L749.4 244.9L751.3 244.2L753.0 243.6L754.7 242.9L756.4 242.1L758.2 241.2L759.9 240.3L761.6 239.4L763.2 238.4L764.7 237.5L766.1 236.6L767.4 235.7L768.6 235.0L769.6 234.3L770.4 233.8L769.6 232.2L768.7 232.4L767.6 232.8L766.2 233.2L764.8 233.6L763.1 234.1L761.4 234.6L759.7 235.2L757.9 235.8L756.1 236.5L754.3 237.1L752.6 237.8L751.0 238.4L749.3 239.1L747.5 239.9L745.6 240.7L743.6 241.5L741.6 242.3L739.7 243.2L737.8 244.1L736.0 244.9L734.3 245.6L732.8 246.3L731.6 246.9L730.6 247.4Z" fill="#000"/>
<path d="M741.1 264.0L742.2 263.5L743.6 262.9L745.3 262.1L747.1 261.3L749.1 260.3L751.2 259.3L753.3 258.2L755.5 257.1L757.7 256.0L759.8 254.8L761.8 253.6L763.6 252.5L765.4 251.4L767.3 250.1L769.2 248.7L771.1 247.3L772.9 245.8L774.7 244.4L776.3 242.9L777.9 241.5L779.3 240.2L780.6 239.0L781.6 238.0L782.5 237.2L781.5 235.8L780.4 236.3L779.1 236.9L777.6 237.7L775.9 238.5L774.0 239.5L772.0 240.5L770.0 241.6L768.0 242.8L766.0 243.9L764.0 245.1L762.1 246.3L760.4 247.5L758.6 248.6L756.7 249.9L754.8 251.2L752.8 252.6L750.8 254.0L748.8 255.4L746.9 256.7L745.2 258.0L743.5 259.2L742.1 260.3L740.9 261.2L739.9 262.0Z" fill="#000"/>
<path d="M754.8 274.9L755.9 274.1L757.3 273.2L758.9 272.0L760.7 270.7L762.6 269.3L764.7 267.8L766.8 266.2L768.9 264.6L771.1 263.0L773.1 261.3L775.1 259.8L776.9 258.3L778.7 256.8L780.6 255.2L782.6 253.5L784.5 251.8L786.4 250.0L788.3 248.2L790.0 246.4L791.7 244.8L793.2 243.2L794.5 241.8L795.7 240.7L796.6 239.7L795.4 238.3L794.3 239.0L792.9 239.8L791.3 240.8L789.4 242.0L787.4 243.2L785.3 244.6L783.2 246.0L781.0 247.5L778.9 249.0L776.9 250.6L774.9 252.2L773.1 253.7L771.3 255.3L769.4 257.0L767.5 258.7L765.5 260.6L763.6 262.5L761.7 264.3L759.9 266.2L758.2 267.9L756.7 269.5L755.3 270.9L754.1 272.1L753.2 273.1Z" fill="#000"/>
<path d="M763.2 285.9L764.4 285.2L765.9 284.3L767.7 283.1L769.6 281.9L771.8 280.5L774.0 279.0L776.2 277.4L778.4 275.9L780.5 274.4L782.4 272.9L784.2 271.6L785.7 270.4L787.0 269.3L788.4 268.3L789.7 267.3L790.9 266.3L792.1 265.4L793.3 264.5L794.4 263.7L795.4 263.0L796.3 262.3L797.1 261.6L797.8 261.1L798.4 260.6L797.6 259.0L796.9 259.3L796.0 259.6L795.0 259.9L793.9 260.2L792.7 260.7L791.4 261.1L790.0 261.7L788.6 262.3L787.0 263.0L785.5 263.8L783.9 264.6L782.3 265.6L780.6 266.8L778.8 268.1L776.8 269.7L774.8 271.4L772.8 273.2L770.8 275.0L768.9 276.9L767.1 278.7L765.4 280.3L763.9 281.8L762.7 283.1L761.8 284.1Z" fill="#000"/>
<path d="M780.0 304.1L780.8 303.1L781.7 301.9L782.7 300.5L783.9 298.9L785.2 297.1L786.5 295.3L787.9 293.3L789.3 291.4L790.7 289.3L792.0 287.4L793.3 285.4L794.5 283.6L795.7 281.7L797.0 279.7L798.2 277.5L799.5 275.3L800.7 273.1L801.8 270.8L802.9 268.6L803.9 266.6L804.8 264.6L805.6 262.9L806.2 261.5L806.8 260.3L805.2 259.3L804.4 260.3L803.4 261.5L802.1 263.0L800.8 264.6L799.3 266.4L797.8 268.3L796.3 270.3L794.7 272.3L793.3 274.4L791.9 276.5L790.6 278.5L789.5 280.4L788.4 282.4L787.2 284.4L786.0 286.5L784.9 288.7L783.8 290.9L782.7 293.0L781.7 295.1L780.8 297.0L779.9 298.8L779.1 300.4L778.5 301.8L778.0 302.9Z" fill="#000"/>
<path d="M789.0 312.6L789.7 311.7L790.6 310.6L791.6 309.3L792.7 307.8L794.0 306.2L795.2 304.5L796.6 302.7L797.9 300.8L799.1 298.9L800.4 297.0L801.5 295.1L802.5 293.2L803.4 291.3L804.2 289.3L805.1 287.2L805.8 285.0L806.5 282.8L807.1 280.6L807.6 278.5L808.1 276.5L808.5 274.7L808.9 273.0L809.2 271.6L809.4 270.5L807.8 269.9L807.2 270.9L806.5 272.2L805.7 273.7L804.9 275.3L804.0 277.2L803.0 279.1L802.0 281.1L801.1 283.1L800.1 285.2L799.2 287.1L798.4 289.0L797.5 290.8L796.7 292.5L795.8 294.4L794.8 296.3L793.7 298.3L792.7 300.3L791.7 302.2L790.7 304.1L789.8 305.9L788.9 307.6L788.1 309.1L787.5 310.3L787.0 311.4Z" fill="#000"/>
<path d="M798.0 319.6L798.5 319.1L799.1 318.3L799.7 317.5L800.5 316.5L801.3 315.5L802.2 314.4L803.1 313.2L803.9 312.0L804.8 310.8L805.6 309.6L806.4 308.4L807.1 307.3L807.8 306.1L808.6 304.8L809.3 303.5L809.9 302.1L810.5 300.7L811.1 299.3L811.7 297.9L812.1 296.6L812.6 295.4L812.9 294.3L813.2 293.4L813.5 292.6L811.9 291.8L811.4 292.4L810.8 293.1L810.1 294.0L809.3 295.0L808.5 296.1L807.6 297.3L806.7 298.5L805.8 299.8L805.0 301.1L804.2 302.4L803.5 303.6L802.9 304.7L802.2 305.9L801.5 307.1L800.9 308.4L800.2 309.7L799.5 311.0L798.9 312.3L798.3 313.6L797.7 314.8L797.2 315.9L796.7 316.9L796.3 317.7L796.0 318.4Z" fill="#000"/>
<path d="M813.2 327.0L813.3 326.0L813.5 324.6L813.7 323.0L813.8 321.3L814.0 319.4L814.2 317.3L814.3 315.3L814.5 313.2L814.6 311.3L814.6 309.4L814.7 307.6L814.7 306.1L814.7 304.7L814.7 303.4L814.7 302.0L814.7 300.6L814.7 299.3L814.7 298.1L814.7 296.9L814.7 295.7L814.7 294.7L814.6 293.8L814.6 293.0L814.6 292.3L812.8 292.1L812.6 292.7L812.3 293.4L812.0 294.3L811.7 295.3L811.3 296.4L811.0 297.5L810.6 298.8L810.3 300.1L809.9 301.5L809.7 302.9L809.4 304.4L809.3 305.9L809.2 307.5L809.2 309.3L809.2 311.2L809.3 313.2L809.4 315.3L809.6 317.4L809.8 319.4L810.0 321.3L810.3 323.1L810.5 324.6L810.7 326.0L810.8 327.0Z" fill="#000"/>
<path d="M825.2 331.4L825.2 330.4L825.2 329.2L825.1 327.8L825.1 326.2L825.1 324.5L825.0 322.7L825.0 320.9L824.9 319.0L824.8 317.1L824.8 315.3L824.8 313.6L824.7 311.9L824.7 310.3L824.8 308.6L824.8 306.7L824.7 304.8L824.7 302.9L824.6 301.0L824.5 299.2L824.4 297.5L824.3 295.9L824.2 294.5L824.1 293.2L824.0 292.3L822.2 292.1L822.0 293.1L821.7 294.3L821.4 295.6L821.0 297.2L820.6 298.9L820.2 300.7L819.9 302.6L819.6 304.5L819.4 306.5L819.3 308.4L819.2 310.3L819.3 312.1L819.4 313.8L819.6 315.7L819.8 317.6L820.1 319.5L820.5 321.4L820.8 323.2L821.2 325.0L821.6 326.7L822.0 328.2L822.3 329.6L822.6 330.7L822.8 331.6Z" fill="#000"/>
<path d="M840.2 333.2L840.0 332.1L839.8 330.7L839.6 329.0L839.3 327.2L839.0 325.2L838.7 323.1L838.3 321.0L838.0 318.9L837.6 316.8L837.3 314.9L837.0 313.2L836.7 311.7L836.5 310.3L836.3 308.9L836.2 307.5L836.0 306.2L835.9 304.8L835.8 303.5L835.7 302.3L835.7 301.1L835.6 300.0L835.5 299.0L835.5 298.2L835.4 297.5L833.6 297.3L833.4 298.0L833.2 298.8L833.0 299.7L832.7 300.8L832.4 301.9L832.0 303.2L831.8 304.6L831.5 306.0L831.3 307.5L831.2 309.1L831.2 310.7L831.3 312.3L831.5 314.1L831.9 316.0L832.4 318.0L832.9 320.0L833.5 322.1L834.2 324.2L835.0 326.2L835.7 328.1L836.3 329.9L836.9 331.5L837.4 332.8L837.8 333.8Z" fill="#000"/>
<path d="M853.2 330.2L853.0 329.2L852.8 328.0L852.5 326.6L852.2 325.1L851.9 323.4L851.5 321.6L851.1 319.8L850.8 318.0L850.4 316.3L850.1 314.6L849.9 313.1L849.7 311.7L849.6 310.5L849.6 309.1L849.6 307.6L849.6 306.1L849.6 304.6L849.6 303.2L849.6 301.7L849.6 300.3L849.6 299.1L849.6 297.9L849.6 296.9L849.6 296.1L847.8 295.9L847.6 296.6L847.2 297.5L846.8 298.6L846.4 299.8L845.9 301.1L845.5 302.5L845.1 304.0L844.7 305.6L844.4 307.3L844.2 308.9L844.2 310.6L844.3 312.3L844.5 313.9L844.9 315.7L845.4 317.5L845.9 319.3L846.6 321.1L847.3 322.9L848.0 324.6L848.7 326.2L849.4 327.6L850.0 328.9L850.5 330.0L850.8 330.8Z" fill="#000"/>
<path d="M862.2 322.0L862.3 320.4L862.4 318.5L862.5 316.2L862.6 313.6L862.7 310.8L862.8 307.9L863.0 304.8L863.1 301.7L863.2 298.6L863.3 295.6L863.4 292.8L863.5 290.1L863.6 287.5L863.7 284.7L863.9 281.8L864.0 278.9L864.1 275.9L864.1 273.1L864.2 270.3L864.2 267.7L864.2 265.3L864.2 263.2L864.2 261.3L864.2 259.9L862.4 259.7L862.2 261.2L861.8 263.0L861.5 265.1L861.0 267.4L860.6 270.0L860.2 272.7L859.8 275.6L859.4 278.5L859.1 281.4L858.8 284.4L858.6 287.2L858.5 289.9L858.5 292.6L858.5 295.6L858.5 298.6L858.6 301.7L858.7 304.8L858.9 307.9L859.0 310.9L859.2 313.7L859.4 316.2L859.6 318.5L859.7 320.5L859.8 322.0Z" fill="#000"/>
<path d="M874.8 311.6L874.9 310.5L874.9 309.2L874.9 307.8L874.8 306.2L874.8 304.4L874.9 302.5L874.9 300.6L875.0 298.6L875.2 296.6L875.5 294.5L875.9 292.5L876.3 290.6L877.0 288.5L877.8 286.1L878.8 283.5L879.9 280.7L881.0 277.9L882.0 275.0L883.1 272.2L884.1 269.5L884.9 267.0L885.7 264.8L886.4 262.9L886.8 261.4L885.2 260.6L884.4 262.0L883.4 263.7L882.2 265.8L880.9 268.1L879.4 270.6L878.0 273.3L876.6 276.0L875.3 278.9L874.1 281.7L873.1 284.4L872.3 287.0L871.7 289.4L871.3 291.7L871.0 294.0L870.9 296.3L871.0 298.5L871.1 300.6L871.2 302.7L871.5 304.6L871.7 306.4L871.9 308.0L872.2 309.4L872.3 310.6L872.4 311.6Z" fill="#000"/>
<path d="M759.0 176.0C760.8 174.5 765.0 172.8 770.0 173.5C775.0 174.2 786.3 177.8 789.0 180.0C791.7 182.2 789.2 186.2 786.0 187.0C782.8 187.8 774.5 185.8 770.0 185.0C765.5 184.2 760.8 184.0 759.0 182.5C757.2 181.0 757.2 177.5 759.0 176.0Z" fill="#fff" stroke="#000" stroke-width="3" stroke-linejoin="round"/>
<path d="M754.0 188.3C754.6 186.6 757.7 183.2 762.7 183.2C767.7 183.2 780.4 186.8 784.0 188.5C787.6 190.2 786.9 192.4 784.6 193.3C782.3 194.2 774.3 194.0 770.0 194.0C765.7 194.0 761.7 194.2 759.0 193.3C756.3 192.4 753.4 190.0 754.0 188.3Z" fill="#fff" stroke="#000" stroke-width="3" stroke-linejoin="round"/>
<path d="M786.0 186.0C787.2 184.4 793.2 182.5 797.0 182.5C800.8 182.5 807.9 184.4 808.6 186.2C809.4 188.0 804.6 192.3 801.5 193.3C798.4 194.3 792.6 193.2 790.0 192.0C787.4 190.8 784.8 187.6 786.0 186.0Z" fill="#fff" stroke="#000" stroke-width="3" stroke-linejoin="round"/>
<path d="M758.4 197.5C760.1 196.2 766.1 194.8 770.0 194.5C773.9 194.2 782.3 194.6 782.0 196.0C781.7 197.4 771.7 202.2 768.0 203.2C764.3 204.2 761.6 202.9 760.0 202.0C758.4 201.1 756.7 198.8 758.4 197.5Z" fill="#fff" stroke="#000" stroke-width="3" stroke-linejoin="round"/>
<path d="M768.3 201.7C769.5 199.8 773.0 195.9 780.3 195.0C787.6 194.1 807.4 194.9 812.1 196.5C816.8 198.1 812.7 202.9 808.6 204.6C804.5 206.3 793.3 206.3 787.4 206.7C781.5 207.0 776.5 207.5 773.3 206.7C770.1 205.9 767.1 203.6 768.3 201.7Z" fill="#fff" stroke="#000" stroke-width="3" stroke-linejoin="round"/>
<path d="M799 188.5Q801 185 805 186" fill="none" stroke="#000" stroke-width="3"/>
<path d="M785.0 208.8C786.3 210.0 791.4 213.5 793.0 215.9C794.6 218.3 794.2 221.8 794.5 223.0" fill="none" stroke="#000" stroke-width="3" stroke-linecap="round"/>
<path d="M793.0 214.0C794.2 213.7 797.3 212.4 800.0 212.0C802.7 211.6 807.8 211.7 809.3 211.6" fill="none" stroke="#000" stroke-width="3" stroke-linecap="round"/>
<path d="M794.5 221.5C796.2 221.1 801.5 219.5 805.0 219.0C808.5 218.5 813.9 218.8 815.7 218.7" fill="none" stroke="#000" stroke-width="3" stroke-linecap="round"/>
<path d="M791.0 208.0A6.1 6.1 0 0 0 793.0 219.5A6.1 6.1 0 0 0 795.1 231.1A6.1 6.1 0 0 0 799.4 241.9A6.1 6.1 0 0 0 806.5 251.2A6.1 6.1 0 0 0 814.2 260.1A6.1 6.1 0 0 0 823.0 267.5A6.1 6.1 0 0 0 833.1 273.4A6.1 6.1 0 0 0 843.5 278.9A6.1 6.1 0 0 0 854.0 284.0" fill="none" stroke="#000" stroke-width="3" stroke-linecap="round" stroke-linejoin="round"/>
<path d="M828.0 201.5A6.1 6.1 0 0 0 825.5 212.8A6.0 6.0 0 0 0 824.8 224.3A6.1 6.1 0 0 0 831.2 234.0A6.1 6.1 0 0 0 841.2 239.7A6.1 6.1 0 0 0 851.1 245.7A5.5 5.5 0 0 0 861.2 248.3A6.1 6.1 0 0 0 872.0 244.0" fill="none" stroke="#000" stroke-width="3" stroke-linecap="round" stroke-linejoin="round"/>
<path d="M837.4 209.7A5.2 5.2 0 0 0 839.8 219.3A4.9 4.9 0 0 0 845.3 226.9A5.2 5.2 0 0 0 853.5 232.4A5.2 5.2 0 0 0 862.3 236.9A4.9 4.9 0 0 0 871.6 235.6" fill="none" stroke="#000" stroke-width="3" stroke-linecap="round" stroke-linejoin="round"/>
<path d="M851.5 214.5A3.7 3.7 0 0 0 855.8 220.2A3.7 3.7 0 0 0 860.7 225.1A3.7 3.7 0 0 0 866.9 228.6" fill="none" stroke="#000" stroke-width="3" stroke-linecap="round" stroke-linejoin="round"/>
<path d="M878.0 229.0A4.3 4.3 0 0 0 879.5 237.1A4.3 4.3 0 0 0 881.7 245.1A4.3 4.3 0 0 0 884.2 252.9A4.3 4.3 0 0 0 886.0 261.0" fill="none" stroke="#000" stroke-width="3" stroke-linecap="round" stroke-linejoin="round"/></g>
<g transform="translate(1814,3.5) scale(-1,1)"><path d="M675.0 190.3C679.0 188.3 693.5 181.6 699.0 178.5C704.5 175.4 703.5 173.0 708.0 171.5C712.5 170.0 718.8 169.6 725.7 169.5C732.6 169.4 742.0 170.2 749.2 171.0C756.4 171.8 762.1 172.5 769.0 174.0C775.9 175.5 783.8 178.0 790.3 180.0C796.8 182.0 802.1 183.2 808.0 186.0C813.9 188.8 820.7 193.0 825.6 196.5C830.5 200.0 832.5 204.0 837.4 207.0C842.3 210.0 849.1 211.5 855.0 214.5C860.9 217.5 868.0 222.6 872.7 225.0C877.4 227.4 879.6 227.7 883.0 229.0C886.4 230.3 890.6 230.3 893.0 233.0C895.4 235.7 896.6 240.1 897.5 245.0C898.4 249.9 898.8 255.2 898.5 262.4C898.2 269.6 897.9 281.5 896.0 288.3C894.1 295.1 890.7 299.1 887.0 303.0C883.3 306.9 875.8 310.2 873.6 311.6A8.3 8.3 0 0 1 863.0 315.0A5.5 5.5 0 0 1 861.0 322.0A9.3 9.3 0 0 1 852.0 330.5A10.0 10.0 0 0 1 839.0 333.5A11.3 11.3 0 0 1 824.0 331.5A9.6 9.6 0 0 1 812.0 327.0A12.8 12.8 0 0 1 797.0 319.0A8.6 8.6 0 0 1 788.0 312.0A9.3 9.3 0 0 1 779.0 303.5A8.8 8.8 0 0 1 770.0 296.0A10.0 10.0 0 0 1 762.5 285.0A10.4 10.4 0 0 1 754.0 274.0A13.1 13.1 0 0 1 740.5 263.0A13.0 13.0 0 0 1 731.0 248.5A11.1 11.1 0 0 1 721.0 237.5A13.7 13.7 0 0 1 703.3 233.0A12.8 12.8 0 0 1 686.8 228.5A15.3 15.3 0 0 1 667.0 223.5A11.6 11.6 0 0 1 658.0 211.0A7.7 7.7 0 0 1 662.0 201.5A12.9 12.9 0 0 1 675.0 190.3Z" fill="#fff" stroke="#000" stroke-width="4" stroke-linejoin="round"/>
<path d="M704.6 180.2L705.4 180.2L706.3 180.3L707.5 180.3L708.7 180.3L710.0 180.3L711.4 180.4L712.9 180.4L714.4 180.4L715.9 180.4L717.3 180.4L718.7 180.4L720.0 180.5L721.4 180.5L722.8 180.5L724.4 180.5L726.0 180.5L727.7 180.4L729.3 180.3L730.9 180.2L732.4 180.0L733.8 179.8L735.0 179.7L736.1 179.5L736.9 179.4L737.1 177.6L736.3 177.4L735.2 177.0L734.0 176.7L732.7 176.3L731.2 175.9L729.6 175.5L728.0 175.1L726.3 174.9L724.7 174.7L723.0 174.5L721.5 174.5L720.0 174.5L718.5 174.6L717.0 174.8L715.4 175.0L713.9 175.3L712.4 175.7L710.9 176.0L709.5 176.4L708.2 176.7L707.0 177.1L706.0 177.4L705.1 177.6L704.4 177.8Z" fill="#000"/>
<path d="M675.1 191.5L676.8 191.5L678.9 191.6L681.4 191.6L684.2 191.6L687.3 191.7L690.5 191.7L693.8 191.7L697.2 191.7L700.6 191.6L703.9 191.6L707.1 191.5L710.1 191.5L713.0 191.4L716.1 191.4L719.4 191.3L722.7 191.1L726.0 190.9L729.2 190.7L732.3 190.5L735.2 190.2L737.9 190.0L740.3 189.8L742.4 189.6L744.0 189.4L744.0 187.6L742.4 187.4L740.3 187.2L737.9 186.9L735.2 186.6L732.3 186.3L729.2 186.1L726.0 185.8L722.7 185.6L719.4 185.5L716.1 185.4L712.9 185.4L709.9 185.5L706.9 185.6L703.7 185.8L700.4 186.1L697.0 186.4L693.6 186.8L690.2 187.1L687.0 187.5L684.0 187.9L681.2 188.3L678.7 188.6L676.6 188.9L674.9 189.1Z" fill="#000"/>
<path d="M662.1 202.7L664.0 202.7L666.3 202.7L669.1 202.6L672.3 202.6L675.7 202.5L679.3 202.4L682.9 202.3L686.7 202.2L690.3 202.0L693.8 201.9L697.2 201.7L700.2 201.5L703.1 201.3L706.1 201.1L709.1 200.8L712.1 200.6L715.1 200.3L717.9 200.0L720.7 199.6L723.3 199.3L725.6 199.0L727.7 198.7L729.6 198.5L731.0 198.3L731.0 196.5L729.5 196.4L727.7 196.3L725.6 196.1L723.2 195.9L720.6 195.7L717.8 195.6L714.9 195.4L711.9 195.3L708.9 195.3L705.8 195.3L702.8 195.4L699.8 195.5L696.8 195.7L693.4 196.0L689.9 196.3L686.2 196.8L682.5 197.2L678.9 197.7L675.3 198.2L671.9 198.7L668.8 199.2L666.1 199.6L663.7 200.0L661.9 200.3Z" fill="#000"/>
<path d="M658.2 212.2L659.8 212.0L661.8 211.7L664.1 211.4L666.7 211.1L669.5 210.7L672.5 210.3L675.5 209.9L678.7 209.4L681.8 209.0L684.8 208.5L687.7 208.1L690.4 207.7L693.1 207.3L695.9 206.9L698.9 206.5L701.8 206.0L704.8 205.5L707.7 205.0L710.5 204.5L713.2 204.0L715.6 203.5L717.8 203.1L719.6 202.7L721.1 202.4L720.9 200.6L719.4 200.6L717.5 200.6L715.3 200.6L712.8 200.6L710.1 200.7L707.3 200.7L704.3 200.8L701.3 201.0L698.2 201.2L695.2 201.5L692.3 201.9L689.6 202.3L686.8 202.8L683.9 203.3L680.9 204.0L677.8 204.6L674.7 205.4L671.7 206.1L668.7 206.9L666.0 207.6L663.5 208.3L661.2 208.9L659.3 209.4L657.8 209.8Z" fill="#000"/>
<path d="M667.4 224.6L669.6 223.9L672.4 223.0L675.7 221.9L679.4 220.6L683.3 219.2L687.5 217.8L691.7 216.3L696.0 214.8L700.1 213.4L704.0 212.0L707.6 210.8L710.8 209.9L713.7 209.1L716.7 208.3L719.7 207.7L722.7 207.1L725.6 206.6L728.3 206.2L731.0 205.8L733.5 205.4L735.8 205.1L737.8 204.8L739.6 204.5L741.1 204.2L740.9 202.4L739.5 202.4L737.7 202.4L735.6 202.3L733.3 202.2L730.8 202.1L728.0 202.1L725.1 202.1L722.1 202.2L718.9 202.5L715.7 202.9L712.5 203.4L709.2 204.1L705.8 205.1L702.1 206.4L698.1 207.9L694.0 209.5L689.8 211.3L685.6 213.2L681.6 215.1L677.8 216.9L674.3 218.6L671.2 220.1L668.6 221.4L666.6 222.4Z" fill="#000"/>
<path d="M687.4 229.6L689.0 228.8L691.1 227.9L693.5 226.8L696.2 225.5L699.1 224.1L702.1 222.7L705.3 221.2L708.6 219.7L711.8 218.3L715.0 217.0L718.1 215.8L720.9 214.8L723.9 213.9L727.1 213.1L730.5 212.3L733.9 211.4L737.5 210.6L740.9 209.8L744.3 209.0L747.5 208.3L750.5 207.6L753.1 206.9L755.4 206.4L757.2 205.9L756.8 204.1L755.0 204.2L752.7 204.4L750.0 204.5L747.0 204.7L743.7 204.9L740.2 205.1L736.6 205.5L732.9 206.0L729.2 206.6L725.7 207.3L722.3 208.2L719.1 209.2L715.9 210.4L712.7 211.8L709.5 213.4L706.3 215.1L703.1 216.9L700.0 218.7L697.1 220.5L694.4 222.3L691.9 223.9L689.7 225.3L687.8 226.5L686.2 227.4Z" fill="#000"/>
<path d="M703.8 234.1L705.4 233.6L707.4 232.9L709.8 232.1L712.4 231.1L715.3 230.1L718.3 229.0L721.4 227.9L724.6 226.8L727.6 225.7L730.6 224.6L733.4 223.7L735.9 222.9L738.3 222.1L740.9 221.4L743.5 220.7L746.2 220.0L748.8 219.3L751.4 218.6L753.8 218.0L756.1 217.3L758.3 216.8L760.2 216.2L761.8 215.8L763.2 215.4L762.8 213.6L761.5 213.7L759.8 213.8L757.8 213.9L755.6 213.9L753.2 214.1L750.6 214.3L747.9 214.5L745.1 214.8L742.3 215.2L739.5 215.8L736.8 216.4L734.1 217.1L731.4 218.0L728.5 219.1L725.5 220.4L722.5 221.7L719.5 223.2L716.5 224.7L713.6 226.2L710.9 227.6L708.4 228.9L706.2 230.1L704.3 231.1L702.8 231.9Z" fill="#000"/>
<path d="M721.4 238.6L722.1 238.5L723.0 238.3L724.0 238.0L725.2 237.7L726.4 237.4L727.7 237.1L729.1 236.7L730.4 236.4L731.7 236.1L733.0 235.8L734.2 235.6L735.4 235.5L736.5 235.3L737.7 235.3L739.0 235.2L740.4 235.1L741.9 235.0L743.3 234.9L744.6 234.8L746.0 234.7L747.2 234.5L748.3 234.4L749.2 234.3L750.0 234.2L750.0 232.4L749.3 232.2L748.4 232.0L747.4 231.7L746.2 231.4L744.9 231.1L743.5 230.8L742.0 230.6L740.5 230.4L739.0 230.3L737.5 230.3L736.0 230.4L734.6 230.5L733.3 230.8L731.9 231.2L730.5 231.7L729.1 232.2L727.7 232.8L726.4 233.4L725.2 234.0L724.0 234.6L722.9 235.2L722.0 235.6L721.2 236.1L720.6 236.4Z" fill="#000"/>
<path d="M758.1 237.8L758.8 237.4L759.6 236.9L760.6 236.4L761.6 235.8L762.7 235.1L763.9 234.4L765.2 233.7L766.4 232.9L767.7 232.2L768.9 231.6L770.1 231.0L771.2 230.4L772.4 229.9L773.6 229.4L775.0 228.8L776.5 228.2L778.0 227.6L779.4 226.9L780.9 226.3L782.2 225.6L783.5 225.0L784.6 224.5L785.5 224.0L786.3 223.6L785.7 221.8L784.9 221.9L783.9 222.0L782.6 222.1L781.2 222.3L779.7 222.4L778.1 222.7L776.5 222.9L774.9 223.3L773.2 223.8L771.7 224.3L770.2 224.9L768.8 225.6L767.5 226.3L766.2 227.2L764.9 228.1L763.7 229.1L762.6 230.1L761.5 231.1L760.4 232.1L759.5 233.0L758.6 233.9L757.9 234.7L757.2 235.3L756.7 235.8Z" fill="#000"/>
<path d="M731.4 249.6L732.5 249.4L733.8 249.1L735.4 248.7L737.1 248.3L739.1 247.8L741.1 247.3L743.2 246.7L745.3 246.1L747.4 245.5L749.4 244.9L751.3 244.2L753.0 243.6L754.7 242.9L756.4 242.1L758.2 241.2L759.9 240.3L761.6 239.4L763.2 238.4L764.7 237.5L766.1 236.6L767.4 235.7L768.6 235.0L769.6 234.3L770.4 233.8L769.6 232.2L768.7 232.4L767.6 232.8L766.2 233.2L764.8 233.6L763.1 234.1L761.4 234.6L759.7 235.2L757.9 235.8L756.1 236.5L754.3 237.1L752.6 237.8L751.0 238.4L749.3 239.1L747.5 239.9L745.6 240.7L743.6 241.5L741.6 242.3L739.7 243.2L737.8 244.1L736.0 244.9L734.3 245.6L732.8 246.3L731.6 246.9L730.6 247.4Z" fill="#000"/>
<path d="M741.1 264.0L742.2 263.5L743.6 262.9L745.3 262.1L747.1 261.3L749.1 260.3L751.2 259.3L753.3 258.2L755.5 257.1L757.7 256.0L759.8 254.8L761.8 253.6L763.6 252.5L765.4 251.4L767.3 250.1L769.2 248.7L771.1 247.3L772.9 245.8L774.7 244.4L776.3 242.9L777.9 241.5L779.3 240.2L780.6 239.0L781.6 238.0L782.5 237.2L781.5 235.8L780.4 236.3L779.1 236.9L777.6 237.7L775.9 238.5L774.0 239.5L772.0 240.5L770.0 241.6L768.0 242.8L766.0 243.9L764.0 245.1L762.1 246.3L760.4 247.5L758.6 248.6L756.7 249.9L754.8 251.2L752.8 252.6L750.8 254.0L748.8 255.4L746.9 256.7L745.2 258.0L743.5 259.2L742.1 260.3L740.9 261.2L739.9 262.0Z" fill="#000"/>
<path d="M754.8 274.9L755.9 274.1L757.3 273.2L758.9 272.0L760.7 270.7L762.6 269.3L764.7 267.8L766.8 266.2L768.9 264.6L771.1 263.0L773.1 261.3L775.1 259.8L776.9 258.3L778.7 256.8L780.6 255.2L782.6 253.5L784.5 251.8L786.4 250.0L788.3 248.2L790.0 246.4L791.7 244.8L793.2 243.2L794.5 241.8L795.7 240.7L796.6 239.7L795.4 238.3L794.3 239.0L792.9 239.8L791.3 240.8L789.4 242.0L787.4 243.2L785.3 244.6L783.2 246.0L781.0 247.5L778.9 249.0L776.9 250.6L774.9 252.2L773.1 253.7L771.3 255.3L769.4 257.0L767.5 258.7L765.5 260.6L763.6 262.5L761.7 264.3L759.9 266.2L758.2 267.9L756.7 269.5L755.3 270.9L754.1 272.1L753.2 273.1Z" fill="#000"/>
<path d="M763.2 285.9L764.4 285.2L765.9 284.3L767.7 283.1L769.6 281.9L771.8 280.5L774.0 279.0L776.2 277.4L778.4 275.9L780.5 274.4L782.4 272.9L784.2 271.6L785.7 270.4L787.0 269.3L788.4 268.3L789.7 267.3L790.9 266.3L792.1 265.4L793.3 264.5L794.4 263.7L795.4 263.0L796.3 262.3L797.1 261.6L797.8 261.1L798.4 260.6L797.6 259.0L796.9 259.3L796.0 259.6L795.0 259.9L793.9 260.2L792.7 260.7L791.4 261.1L790.0 261.7L788.6 262.3L787.0 263.0L785.5 263.8L783.9 264.6L782.3 265.6L780.6 266.8L778.8 268.1L776.8 269.7L774.8 271.4L772.8 273.2L770.8 275.0L768.9 276.9L767.1 278.7L765.4 280.3L763.9 281.8L762.7 283.1L761.8 284.1Z" fill="#000"/>
<path d="M780.0 304.1L780.8 303.1L781.7 301.9L782.7 300.5L783.9 298.9L785.2 297.1L786.5 295.3L787.9 293.3L789.3 291.4L790.7 289.3L792.0 287.4L793.3 285.4L794.5 283.6L795.7 281.7L797.0 279.7L798.2 277.5L799.5 275.3L800.7 273.1L801.8 270.8L802.9 268.6L803.9 266.6L804.8 264.6L805.6 262.9L806.2 261.5L806.8 260.3L805.2 259.3L804.4 260.3L803.4 261.5L802.1 263.0L800.8 264.6L799.3 266.4L797.8 268.3L796.3 270.3L794.7 272.3L793.3 274.4L791.9 276.5L790.6 278.5L789.5 280.4L788.4 282.4L787.2 284.4L786.0 286.5L784.9 288.7L783.8 290.9L782.7 293.0L781.7 295.1L780.8 297.0L779.9 298.8L779.1 300.4L778.5 301.8L778.0 302.9Z" fill="#000"/>
<path d="M789.0 312.6L789.7 311.7L790.6 310.6L791.6 309.3L792.7 307.8L794.0 306.2L795.2 304.5L796.6 302.7L797.9 300.8L799.1 298.9L800.4 297.0L801.5 295.1L802.5 293.2L803.4 291.3L804.2 289.3L805.1 287.2L805.8 285.0L806.5 282.8L807.1 280.6L807.6 278.5L808.1 276.5L808.5 274.7L808.9 273.0L809.2 271.6L809.4 270.5L807.8 269.9L807.2 270.9L806.5 272.2L805.7 273.7L804.9 275.3L804.0 277.2L803.0 279.1L802.0 281.1L801.1 283.1L800.1 285.2L799.2 287.1L798.4 289.0L797.5 290.8L796.7 292.5L795.8 294.4L794.8 296.3L793.7 298.3L792.7 300.3L791.7 302.2L790.7 304.1L789.8 305.9L788.9 307.6L788.1 309.1L787.5 310.3L787.0 311.4Z" fill="#000"/>
<path d="M798.0 319.6L798.5 319.1L799.1 318.3L799.7 317.5L800.5 316.5L801.3 315.5L802.2 314.4L803.1 313.2L803.9 312.0L804.8 310.8L805.6 309.6L806.4 308.4L807.1 307.3L807.8 306.1L808.6 304.8L809.3 303.5L809.9 302.1L810.5 300.7L811.1 299.3L811.7 297.9L812.1 296.6L812.6 295.4L812.9 294.3L813.2 293.4L813.5 292.6L811.9 291.8L811.4 292.4L810.8 293.1L810.1 294.0L809.3 295.0L808.5 296.1L807.6 297.3L806.7 298.5L805.8 299.8L805.0 301.1L804.2 302.4L803.5 303.6L802.9 304.7L802.2 305.9L801.5 307.1L800.9 308.4L800.2 309.7L799.5 311.0L798.9 312.3L798.3 313.6L797.7 314.8L797.2 315.9L796.7 316.9L796.3 317.7L796.0 318.4Z" fill="#000"/>
<path d="M813.2 327.0L813.3 326.0L813.5 324.6L813.7 323.0L813.8 321.3L814.0 319.4L814.2 317.3L814.3 315.3L814.5 313.2L814.6 311.3L814.6 309.4L814.7 307.6L814.7 306.1L814.7 304.7L814.7 303.4L814.7 302.0L814.7 300.6L814.7 299.3L814.7 298.1L814.7 296.9L814.7 295.7L814.7 294.7L814.6 293.8L814.6 293.0L814.6 292.3L812.8 292.1L812.6 292.7L812.3 293.4L812.0 294.3L811.7 295.3L811.3 296.4L811.0 297.5L810.6 298.8L810.3 300.1L809.9 301.5L809.7 302.9L809.4 304.4L809.3 305.9L809.2 307.5L809.2 309.3L809.2 311.2L809.3 313.2L809.4 315.3L809.6 317.4L809.8 319.4L810.0 321.3L810.3 323.1L810.5 324.6L810.7 326.0L810.8 327.0Z" fill="#000"/>
<path d="M825.2 331.4L825.2 330.4L825.2 329.2L825.1 327.8L825.1 326.2L825.1 324.5L825.0 322.7L825.0 320.9L824.9 319.0L824.8 317.1L824.8 315.3L824.8 313.6L824.7 311.9L824.7 310.3L824.8 308.6L824.8 306.7L824.7 304.8L824.7 302.9L824.6 301.0L824.5 299.2L824.4 297.5L824.3 295.9L824.2 294.5L824.1 293.2L824.0 292.3L822.2 292.1L822.0 293.1L821.7 294.3L821.4 295.6L821.0 297.2L820.6 298.9L820.2 300.7L819.9 302.6L819.6 304.5L819.4 306.5L819.3 308.4L819.2 310.3L819.3 312.1L819.4 313.8L819.6 315.7L819.8 317.6L820.1 319.5L820.5 321.4L820.8 323.2L821.2 325.0L821.6 326.7L822.0 328.2L822.3 329.6L822.6 330.7L822.8 331.6Z" fill="#000"/>
<path d="M840.2 333.2L840.0 332.1L839.8 330.7L839.6 329.0L839.3 327.2L839.0 325.2L838.7 323.1L838.3 321.0L838.0 318.9L837.6 316.8L837.3 314.9L837.0 313.2L836.7 311.7L836.5 310.3L836.3 308.9L836.2 307.5L836.0 306.2L835.9 304.8L835.8 303.5L835.7 302.3L835.7 301.1L835.6 300.0L835.5 299.0L835.5 298.2L835.4 297.5L833.6 297.3L833.4 298.0L833.2 298.8L833.0 299.7L832.7 300.8L832.4 301.9L832.0 303.2L831.8 304.6L831.5 306.0L831.3 307.5L831.2 309.1L831.2 310.7L831.3 312.3L831.5 314.1L831.9 316.0L832.4 318.0L832.9 320.0L833.5 322.1L834.2 324.2L835.0 326.2L835.7 328.1L836.3 329.9L836.9 331.5L837.4 332.8L837.8 333.8Z" fill="#000"/>
<path d="M853.2 330.2L853.0 329.2L852.8 328.0L852.5 326.6L852.2 325.1L851.9 323.4L851.5 321.6L851.1 319.8L850.8 318.0L850.4 316.3L850.1 314.6L849.9 313.1L849.7 311.7L849.6 310.5L849.6 309.1L849.6 307.6L849.6 306.1L849.6 304.6L849.6 303.2L849.6 301.7L849.6 300.3L849.6 299.1L849.6 297.9L849.6 296.9L849.6 296.1L847.8 295.9L847.6 296.6L847.2 297.5L846.8 298.6L846.4 299.8L845.9 301.1L845.5 302.5L845.1 304.0L844.7 305.6L844.4 307.3L844.2 308.9L844.2 310.6L844.3 312.3L844.5 313.9L844.9 315.7L845.4 317.5L845.9 319.3L846.6 321.1L847.3 322.9L848.0 324.6L848.7 326.2L849.4 327.6L850.0 328.9L850.5 330.0L850.8 330.8Z" fill="#000"/>
<path d="M862.2 322.0L862.3 320.4L862.4 318.5L862.5 316.2L862.6 313.6L862.7 310.8L862.8 307.9L863.0 304.8L863.1 301.7L863.2 298.6L863.3 295.6L863.4 292.8L863.5 290.1L863.6 287.5L863.7 284.7L863.9 281.8L864.0 278.9L864.1 275.9L864.1 273.1L864.2 270.3L864.2 267.7L864.2 265.3L864.2 263.2L864.2 261.3L864.2 259.9L862.4 259.7L862.2 261.2L861.8 263.0L861.5 265.1L861.0 267.4L860.6 270.0L860.2 272.7L859.8 275.6L859.4 278.5L859.1 281.4L858.8 284.4L858.6 287.2L858.5 289.9L858.5 292.6L858.5 295.6L858.5 298.6L858.6 301.7L858.7 304.8L858.9 307.9L859.0 310.9L859.2 313.7L859.4 316.2L859.6 318.5L859.7 320.5L859.8 322.0Z" fill="#000"/>
<path d="M874.8 311.6L874.9 310.5L874.9 309.2L874.9 307.8L874.8 306.2L874.8 304.4L874.9 302.5L874.9 300.6L875.0 298.6L875.2 296.6L875.5 294.5L875.9 292.5L876.3 290.6L877.0 288.5L877.8 286.1L878.8 283.5L879.9 280.7L881.0 277.9L882.0 275.0L883.1 272.2L884.1 269.5L884.9 267.0L885.7 264.8L886.4 262.9L886.8 261.4L885.2 260.6L884.4 262.0L883.4 263.7L882.2 265.8L880.9 268.1L879.4 270.6L878.0 273.3L876.6 276.0L875.3 278.9L874.1 281.7L873.1 284.4L872.3 287.0L871.7 289.4L871.3 291.7L871.0 294.0L870.9 296.3L871.0 298.5L871.1 300.6L871.2 302.7L871.5 304.6L871.7 306.4L871.9 308.0L872.2 309.4L872.3 310.6L872.4 311.6Z" fill="#000"/>
<path d="M759.0 176.0C760.8 174.5 765.0 172.8 770.0 173.5C775.0 174.2 786.3 177.8 789.0 180.0C791.7 182.2 789.2 186.2 786.0 187.0C782.8 187.8 774.5 185.8 770.0 185.0C765.5 184.2 760.8 184.0 759.0 182.5C757.2 181.0 757.2 177.5 759.0 176.0Z" fill="#fff" stroke="#000" stroke-width="3" stroke-linejoin="round"/>
<path d="M754.0 188.3C754.6 186.6 757.7 183.2 762.7 183.2C767.7 183.2 780.4 186.8 784.0 188.5C787.6 190.2 786.9 192.4 784.6 193.3C782.3 194.2 774.3 194.0 770.0 194.0C765.7 194.0 761.7 194.2 759.0 193.3C756.3 192.4 753.4 190.0 754.0 188.3Z" fill="#fff" stroke="#000" stroke-width="3" stroke-linejoin="round"/>
<path d="M786.0 186.0C787.2 184.4 793.2 182.5 797.0 182.5C800.8 182.5 807.9 184.4 808.6 186.2C809.4 188.0 804.6 192.3 801.5 193.3C798.4 194.3 792.6 193.2 790.0 192.0C787.4 190.8 784.8 187.6 786.0 186.0Z" fill="#fff" stroke="#000" stroke-width="3" stroke-linejoin="round"/>
<path d="M758.4 197.5C760.1 196.2 766.1 194.8 770.0 194.5C773.9 194.2 782.3 194.6 782.0 196.0C781.7 197.4 771.7 202.2 768.0 203.2C764.3 204.2 761.6 202.9 760.0 202.0C758.4 201.1 756.7 198.8 758.4 197.5Z" fill="#fff" stroke="#000" stroke-width="3" stroke-linejoin="round"/>
<path d="M768.3 201.7C769.5 199.8 773.0 195.9 780.3 195.0C787.6 194.1 807.4 194.9 812.1 196.5C816.8 198.1 812.7 202.9 808.6 204.6C804.5 206.3 793.3 206.3 787.4 206.7C781.5 207.0 776.5 207.5 773.3 206.7C770.1 205.9 767.1 203.6 768.3 201.7Z" fill="#fff" stroke="#000" stroke-width="3" stroke-linejoin="round"/>
<path d="M799 188.5Q801 185 805 186" fill="none" stroke="#000" stroke-width="3"/>
<path d="M785.0 208.8C786.3 210.0 791.4 213.5 793.0 215.9C794.6 218.3 794.2 221.8 794.5 223.0" fill="none" stroke="#000" stroke-width="3" stroke-linecap="round"/>
<path d="M793.0 214.0C794.2 213.7 797.3 212.4 800.0 212.0C802.7 211.6 807.8 211.7 809.3 211.6" fill="none" stroke="#000" stroke-width="3" stroke-linecap="round"/>
<path d="M794.5 221.5C796.2 221.1 801.5 219.5 805.0 219.0C808.5 218.5 813.9 218.8 815.7 218.7" fill="none" stroke="#000" stroke-width="3" stroke-linecap="round"/>
<path d="M791.0 208.0A6.1 6.1 0 0 0 793.0 219.5A6.1 6.1 0 0 0 795.1 231.1A6.1 6.1 0 0 0 799.4 241.9A6.1 6.1 0 0 0 806.5 251.2A6.1 6.1 0 0 0 814.2 260.1A6.1 6.1 0 0 0 823.0 267.5A6.1 6.1 0 0 0 833.1 273.4A6.1 6.1 0 0 0 843.5 278.9A6.1 6.1 0 0 0 854.0 284.0" fill="none" stroke="#000" stroke-width="3" stroke-linecap="round" stroke-linejoin="round"/>
<path d="M828.0 201.5A6.1 6.1 0 0 0 825.5 212.8A6.0 6.0 0 0 0 824.8 224.3A6.1 6.1 0 0 0 831.2 234.0A6.1 6.1 0 0 0 841.2 239.7A6.1 6.1 0 0 0 851.1 245.7A5.5 5.5 0 0 0 861.2 248.3A6.1 6.1 0 0 0 872.0 244.0" fill="none" stroke="#000" stroke-width="3" stroke-linecap="round" stroke-linejoin="round"/>
<path d="M837.4 209.7A5.2 5.2 0 0 0 839.8 219.3A4.9 4.9 0 0 0 845.3 226.9A5.2 5.2 0 0 0 853.5 232.4A5.2 5.2 0 0 0 862.3 236.9A4.9 4.9 0 0 0 871.6 235.6" fill="none" stroke="#000" stroke-width="3" stroke-linecap="round" stroke-linejoin="round"/>
<path d="M851.5 214.5A3.7 3.7 0 0 0 855.8 220.2A3.7 3.7 0 0 0 860.7 225.1A3.7 3.7 0 0 0 866.9 228.6" fill="none" stroke="#000" stroke-width="3" stroke-linecap="round" stroke-linejoin="round"/>
<path d="M878.0 229.0A4.3 4.3 0 0 0 879.5 237.1A4.3 4.3 0 0 0 881.7 245.1A4.3 4.3 0 0 0 884.2 252.9A4.3 4.3 0 0 0 886.0 261.0" fill="none" stroke="#000" stroke-width="3" stroke-linecap="round" stroke-linejoin="round"/></g>
<g><path d="M695.0 424.8C696.1 423.0 695.7 420.2 699.7 422.3C703.7 424.4 711.7 431.0 718.8 437.6C725.9 444.2 732.6 454.0 742.1 462.0C751.7 469.9 763.3 478.6 776.1 485.3C788.8 492.0 803.8 496.7 818.5 502.3C833.2 507.8 864.1 517.4 864.1 518.6C864.1 519.9 832.5 513.0 818.5 509.7C804.5 506.5 792.3 503.0 780.3 499.1C768.3 495.2 755.9 489.9 746.4 486.4C736.8 482.8 730.5 482.8 723.0 477.9C715.6 472.9 706.8 464.1 701.8 456.7C696.9 449.2 694.5 438.6 693.3 433.3C692.2 428.0 694.0 426.7 695.0 424.8Z" fill="#fff" stroke="#151515" stroke-width="4.3" stroke-linejoin="round"/><path d="M683.2 463.0C683.5 460.0 685.3 456.3 688.0 455.6C690.8 454.9 695.6 456.8 699.7 458.8C703.8 460.7 707.1 462.3 712.4 467.3C717.7 472.2 726.9 483.5 731.5 488.5C736.1 493.4 741.4 494.5 740.0 497.0C738.6 499.4 729.8 504.4 723.0 503.3C716.3 502.3 705.9 495.6 699.7 490.6C693.5 485.7 688.7 478.2 685.9 473.6C683.2 469.0 682.8 466.0 683.2 463.0Z" fill="#fff" stroke="#151515" stroke-width="4.3" stroke-linejoin="round"/><path d="M741.1 466.2C741.8 462.9 743.0 458.6 746.4 459.9C749.7 461.1 755.6 469.0 761.2 473.6C766.9 478.2 775.7 483.2 780.3 487.4C784.9 491.7 786.0 494.7 788.8 499.1C791.6 503.5 799.4 512.2 797.3 513.9C795.2 515.7 783.1 512.2 776.1 509.7C769.0 507.2 760.5 504.0 754.9 499.1C749.2 494.1 744.4 485.5 742.1 480.0C739.8 474.5 740.4 469.6 741.1 466.2Z" fill="#fff" stroke="#151515" stroke-width="4.3" stroke-linejoin="round"/><path d="M689.5 504.4C689.4 501.0 689.9 496.9 693.8 496.6C697.6 496.2 705.8 498.1 712.4 502.3C719.1 506.4 729.0 515.9 733.6 521.4C738.2 526.9 742.8 533.0 740.0 535.2C737.2 537.3 724.3 537.1 716.7 534.1C709.1 531.1 698.9 522.1 694.4 517.1C689.9 512.2 689.6 507.8 689.5 504.4Z" fill="#fff" stroke="#151515" stroke-width="4.3" stroke-linejoin="round"/><path d="M730.5 497.0C731.2 494.3 731.7 489.2 735.8 489.6C739.8 489.9 748.1 495.4 754.9 499.1C761.6 502.8 770.4 506.9 776.1 511.8C781.7 516.8 785.3 524.9 788.8 528.8C792.3 532.7 801.2 535.2 797.3 535.2C793.4 535.2 775.0 532.0 765.5 528.8C755.9 525.6 745.7 520.0 740.0 516.1C734.3 512.2 733.1 508.6 731.5 505.5C729.9 502.3 729.8 499.6 730.5 497.0Z" fill="#fff" stroke="#151515" stroke-width="4.3" stroke-linejoin="round"/><path d="M777.8 494.9C778.8 492.6 777.8 487.1 784.6 487.4C791.3 487.8 807.5 493.3 818.5 497.0C829.5 500.7 842.6 506.2 850.3 509.7C858.0 513.2 864.4 516.4 864.7 518.2C865.1 520.0 860.1 520.5 852.4 520.3C844.7 520.1 829.1 518.9 818.5 517.1C807.9 515.4 795.5 512.4 788.8 509.7C782.1 507.1 780.0 503.7 778.2 501.2C776.3 498.7 776.7 497.2 777.8 494.9Z" fill="#fff" stroke="#151515" stroke-width="4.3" stroke-linejoin="round"/><path d="M707.1 541.5C707.4 539.0 707.6 535.3 712.0 534.7C716.4 534.2 725.1 536.3 733.6 538.3C742.2 540.4 757.3 543.6 763.3 546.8C769.3 550.0 774.7 555.1 769.7 557.4C764.8 559.7 743.5 561.9 733.6 560.6C723.7 559.4 714.7 553.2 710.3 550.0C705.9 546.8 706.8 544.1 707.1 541.5Z" fill="#fff" stroke="#151515" stroke-width="4.3" stroke-linejoin="round"/><path d="M734.9 529.9C735.3 527.2 734.5 521.6 739.6 521.6C744.7 521.6 756.2 527.4 765.5 529.9C774.7 532.3 789.0 533.4 795.2 536.2C801.3 539.0 805.8 544.5 802.6 546.8C799.4 549.1 784.7 550.2 776.1 550.0C767.4 549.8 757.1 547.9 750.6 545.8C744.1 543.6 739.7 539.9 737.0 537.3C734.4 534.6 734.5 532.5 734.9 529.9Z" fill="#fff" stroke="#151515" stroke-width="4.3" stroke-linejoin="round"/><path d="M775.6 516.1C776.3 513.8 773.2 508.6 780.3 509.7C787.5 510.8 804.5 520.6 818.5 522.4C832.5 524.3 857.7 519.9 864.1 520.7C870.5 521.6 864.3 525.3 856.7 527.7C849.1 530.1 829.8 534.5 818.5 535.2C807.2 535.9 795.9 533.9 788.8 532.0C781.7 530.0 778.3 526.1 776.1 523.5C773.9 520.8 774.9 518.4 775.6 516.1Z" fill="#fff" stroke="#151515" stroke-width="4.3" stroke-linejoin="round"/><path d="M736.2 569.1C736.6 566.2 736.2 561.4 740.0 560.2C743.8 559.0 751.0 561.4 759.1 561.7C767.2 561.9 778.9 562.4 788.8 561.7C798.7 561.0 807.9 561.3 818.5 557.4C829.1 553.5 844.9 544.0 852.4 538.3C859.9 532.7 863.6 522.1 863.5 523.5C863.3 524.9 858.9 539.2 851.4 546.8C843.9 554.4 828.9 563.6 818.5 569.1C808.1 574.6 799.4 577.6 788.8 579.7C778.2 581.8 763.4 582.2 754.9 581.8C746.3 581.5 740.6 579.7 737.5 577.6C734.3 575.5 735.8 572.0 736.2 569.1Z" fill="#fff" stroke="#151515" stroke-width="4.3" stroke-linejoin="round"/><path d="M765.9 558.5C766.2 556.3 767.6 551.6 771.4 551.1C775.2 550.5 780.9 555.1 788.8 555.3C796.6 555.6 807.8 555.6 818.5 552.6C829.2 549.5 852.9 534.8 852.9 536.9C852.9 538.9 829.2 559.5 818.5 564.9C807.8 570.2 797.0 569.2 788.8 569.1C780.6 569.0 773.1 566.2 769.3 564.4C765.5 562.7 765.5 560.7 765.9 558.5Z" fill="#fff" stroke="#151515" stroke-width="4.3" stroke-linejoin="round"/><path d="M794.1 540.5C794.1 538.7 793.2 535.7 797.3 535.2C801.3 534.6 808.6 538.5 818.5 537.3C828.4 536.0 851.0 528.1 856.7 527.7C862.3 527.4 858.8 531.4 852.4 535.2C846.1 538.9 827.7 548.2 818.5 550.0C809.3 551.8 801.3 547.4 797.3 545.8C793.2 544.2 794.1 542.2 794.1 540.5Z" fill="#fff" stroke="#151515" stroke-width="4.3" stroke-linejoin="round"/></g>
<path d="M219.7 421.6Q230 453 252.7 477.6Q268 492 290 497L292 532L282.4 532Q272 540 263.4 547.7Q262 541 261.8 537Q252 541 243.6 541.9Q246 535 246.9 530.4Q238 530 231.3 528.7Q224 525 218 520.5Q222 518.5 227.1 518Q219 512 214.8 504Q209 497 204.9 490.8Q210 490 215.6 490Q210 484 208.2 477.6Q203 468 201.6 457.9Q208 462 214.8 464.4Q210 453 211.5 443Q213 430 219.7 421.6Z" fill="#c97d3d" stroke="#3b2414" stroke-width="1.1" stroke-linejoin="round"/>
<path d="M286.5 544.5 L286.5 540.9 L286.1 536.8 L285.4 532.5 L284.7 528.2 L284.1 523.9 L284.0 520.0 L284.2 516.5 L284.7 513.2 L285.3 510.0 L286.1 506.9 L287.0 503.6 L288.0 500.0 L289.0 496.0 L290.1 491.7 L291.3 487.3 L292.7 482.9 L294.2 478.8 L296.0 475.0 L298.0 471.6 L300.2 468.5 L302.6 465.6 L305.2 462.9 L308.0 460.4 L311.0 458.0 L314.3 455.7 L317.7 453.6 L321.4 451.7 L325.3 450.0 L329.4 448.4 L333.8 447.0 L338.4 445.8 L343.3 444.9 L348.3 444.1 L353.6 443.5 L359.2 443.0 L365.0 442.5 L371.2 442.1 L377.9 441.9 L384.8 441.8 L391.7 441.7 L398.5 441.6 L405.0 441.3 L411.2 440.9 L417.2 440.3 L423.1 439.7 L428.9 439.1 L434.5 438.5 L440.0 438.0 L445.3 437.7 L450.4 437.6 L455.3 437.5 L460.2 437.3 L465.1 436.8 L470.0 436.0 L474.7 434.5 L478.9 432.4 L483.1 430.1 L487.8 427.8 L493.3 426.0 L500.0 425.0 L508.7 424.8 L519.3 425.3 L530.7 426.2 L541.9 427.4 L552.0 428.7 L560.0 430.0 L565.8 431.2 L570.2 432.3 L573.5 433.6 L575.9 435.1 L577.6 437.2 L579.0 440.0 L579.7 443.7 L579.3 448.2 L578.4 453.2 L577.1 458.4 L575.9 463.5 L575.0 468.0 L574.4 472.2 L573.9 476.2 L573.3 480.1 L572.8 483.8 L572.4 487.1 L572.0 490.0 L571.8 492.1 L571.8 493.4 L571.8 494.4 L571.8 495.5 L571.5 497.2 L571.0 500.0 L570.1 504.2 L569.0 509.6 L567.6 515.6 L566.1 521.6 L564.6 527.3 L563.0 532.0 L561.4 535.7 L559.7 538.8 L558.0 541.4 L556.1 543.9 L554.2 546.3 L552.0 549.0 L549.5 551.6 L546.7 554.0 L543.8 556.4 L540.9 559.1 L538.3 562.2 L536.0 566.0 L534.2 570.5 L532.7 575.6 L531.4 581.2 L530.3 587.1 L529.2 593.4 L528.0 600.0 L526.5 607.2 L524.6 615.3 L522.7 623.7 L521.3 632.0 L520.6 639.6 L521.2 646.0 L523.5 651.2 L527.3 655.6 L531.9 659.4 L536.6 662.6 L540.7 665.5 L543.5 668.2 L545.4 670.7 L546.9 672.7 L547.9 674.5 L548.0 675.9 L547.0 677.1 L544.7 678.0 L540.2 678.8 L533.6 679.4 L525.9 679.7 L518.1 679.6 L511.2 679.1 L506.4 678.0 L503.8 676.0 L502.6 673.0 L502.3 669.6 L502.6 666.1 L502.8 663.0 L502.6 660.8 L501.9 660.1 L501.2 660.6 L500.5 661.5 L499.9 662.0 L499.3 661.2 L499.0 658.3 L498.9 652.8 L499.0 645.1 L499.2 636.2 L499.5 626.9 L499.8 617.9 L500.0 610.0 L500.3 602.9 L500.8 595.7 L501.2 589.0 L501.6 582.9 L501.7 577.8 L501.4 574.2 L500.7 572.4 L499.5 572.1 L498.2 573.0 L496.7 574.3 L495.3 575.5 L494.0 576.0 L492.9 575.6 L491.8 574.6 L490.8 573.6 L489.8 572.9 L488.8 572.9 L487.8 574.2 L486.8 576.9 L485.7 580.8 L484.7 585.5 L483.7 590.5 L482.8 595.5 L482.0 600.0 L481.3 603.9 L480.6 607.6 L480.0 611.1 L479.5 614.9 L479.1 619.0 L479.0 623.7 L479.1 629.5 L479.5 636.4 L480.0 643.6 L480.5 650.5 L481.1 656.5 L481.6 660.8 L481.8 663.0 L481.9 663.5 L481.9 663.1 L482.1 662.4 L482.7 662.2 L484.0 663.2 L486.2 665.6 L489.3 668.9 L492.8 672.6 L496.2 676.5 L499.3 680.1 L501.4 683.0 L503.0 685.4 L504.4 687.5 L505.4 689.3 L505.6 690.9 L504.8 692.1 L502.6 693.0 L498.2 693.6 L491.8 694.0 L484.3 694.0 L476.7 693.6 L470.1 692.9 L465.5 691.7 L463.1 689.9 L462.1 687.5 L462.2 684.7 L462.6 681.6 L463.1 678.5 L463.0 675.6 L462.5 672.9 L462.0 670.3 L461.4 667.7 L460.8 664.9 L460.2 661.8 L459.4 658.3 L458.5 654.2 L457.5 649.6 L456.3 644.7 L455.2 639.7 L454.1 634.7 L453.0 630.0 L452.0 625.5 L451.1 621.0 L450.2 616.6 L449.3 612.2 L448.2 608.0 L447.0 603.9 L445.6 599.9 L444.0 595.8 L442.4 591.9 L440.7 588.2 L438.8 584.7 L437.0 581.6 L435.1 578.8 L433.0 576.1 L430.8 573.7 L428.7 571.7 L426.6 570.1 L424.7 569.0 L422.9 568.6 L421.2 568.9 L419.6 569.6 L418.0 570.5 L416.5 571.4 L415.0 572.0 L413.6 572.6 L412.3 573.4 L411.1 574.2 L409.8 574.8 L408.6 574.8 L407.4 574.0 L406.3 572.0 L405.4 568.8 L404.5 565.1 L403.4 561.5 L402.0 558.6 L400.0 557.0 L397.5 556.9 L394.5 557.8 L391.2 559.4 L387.6 561.3 L383.9 563.3 L380.0 565.0 L375.8 566.3 L371.1 567.5 L366.2 568.8 L361.5 570.2 L357.1 572.0 L353.3 574.2 L350.2 577.0 L347.6 580.2 L345.4 583.7 L343.4 587.4 L341.7 591.2 L340.0 595.0 L338.4 598.7 L336.8 602.3 L335.4 606.0 L334.4 609.9 L333.7 614.1 L333.5 618.7 L333.8 624.1 L334.5 630.2 L335.6 636.6 L337.1 642.9 L338.9 648.6 L341.0 653.4 L343.8 657.1 L347.3 660.0 L351.2 662.4 L355.0 664.5 L358.3 666.3 L360.7 668.2 L362.5 670.1 L364.1 671.9 L365.3 673.5 L365.7 674.9 L365.1 676.0 L363.2 676.8 L359.3 677.4 L353.5 677.7 L346.7 677.8 L339.9 677.6 L333.9 676.8 L329.8 675.6 L327.8 673.5 L327.2 670.6 L327.4 667.2 L328.1 663.7 L328.6 660.7 L328.6 658.3 L328.1 657.1 L327.5 656.9 L326.8 656.9 L325.9 656.8 L324.9 655.8 L323.6 653.4 L321.8 649.1 L319.5 643.1 L317.0 636.4 L314.6 629.5 L312.6 623.4 L311.3 618.7 L310.7 615.7 L310.6 613.8 L311.0 612.7 L311.6 611.7 L312.6 610.6 L313.7 608.8 L315.6 606.1 L318.3 602.9 L321.3 599.5 L324.0 596.2 L325.8 593.4 L326.0 591.5 L324.4 590.5 L321.3 590.1 L317.3 590.2 L312.9 590.7 L308.6 591.3 L305.0 592.0 L302.0 592.7 L299.2 593.7 L296.6 594.8 L294.0 596.1 L291.5 597.5 L289.0 599.0 L286.5 600.6 L283.9 602.5 L281.4 604.4 L279.0 606.4 L276.8 608.3 L275.0 610.0 L273.6 611.4 L272.5 612.4 L271.7 613.4 L270.9 614.6 L270.2 616.3 L269.2 618.7 L268.0 622.1 L266.7 626.3 L265.4 631.0 L264.1 635.8 L263.0 640.6 L262.0 645.0 L261.2 649.1 L260.4 653.2 L259.7 657.2 L259.3 661.0 L259.1 664.7 L259.3 668.0 L260.1 671.0 L261.4 673.7 L263.0 676.2 L264.6 678.6 L265.9 680.8 L266.7 683.0 L267.2 685.2 L267.7 687.4 L268.0 689.5 L267.7 691.4 L266.5 692.9 L264.3 694.0 L260.3 694.7 L254.6 695.3 L248.1 695.4 L241.6 695.2 L235.9 694.4 L232.0 693.0 L229.9 690.7 L229.1 687.5 L229.1 683.7 L229.6 679.8 L230.3 676.1 L230.9 673.0 L231.5 670.7 L232.3 668.9 L233.3 667.3 L234.5 665.6 L235.7 663.5 L237.0 660.8 L238.3 657.3 L239.8 653.2 L241.4 648.8 L242.9 644.1 L244.5 639.5 L246.0 635.0 L247.4 630.6 L248.7 626.0 L250.0 621.4 L251.3 616.9 L252.8 612.7 L254.4 608.8 L256.2 605.6 L258.2 602.9 L260.2 600.5 L262.4 598.0 L264.5 595.1 L266.7 591.5 L268.9 586.9 L271.3 581.5 L273.7 575.6 L276.0 569.8 L278.2 564.5 L280.0 560.0 L281.6 556.6 L283.0 554.0 L284.2 551.8 L285.3 549.7 L286.0 547.4Z" fill="#a35b25" stroke="#3b2414" stroke-width="1.2" stroke-linejoin="round"/>
<path d="M482.6 667.0L482.5 667.1L482.3 667.1L482.1 667.1L482.0 667.1L481.8 667.1L481.6 667.1L481.4 667.1L481.3 667.1L481.1 667.0L480.9 667.0L480.7 666.9L480.6 666.9L480.4 666.8L480.3 666.7L480.1 666.6L479.9 666.6L479.8 666.5L479.7 666.4L479.5 666.2L479.4 666.1L479.2 666.0L479.1 665.9L479.0 665.7L478.9 665.6L478.8 665.4L478.7 665.3L478.6 665.1L478.6 665.0L478.5 664.8L478.4 664.7L478.4 664.4L478.3 664.3L478.3 664.1L478.3 664.0L478.3 663.7L478.3 663.7L478.2 663.3L478.0 661.2L477.5 656.9L477.5 656.9L477.5 656.8L477.5 656.8L477.3 654.6L469.1 662.5L488.4 690.4L491.7 690.4L497.9 690.0L501.4 689.5L501.3 689.3L500.0 687.4L500.0 687.4L500.0 687.4L500.0 687.4L498.4 685.1L496.4 682.3L493.5 678.8L490.1 675.1L486.7 671.3L483.6 668.1L483.6 668.1L483.6 668.1L483.6 668.0ZM569.6 480.5L569.7 479.6L569.7 479.6L570.3 475.7L570.3 475.7L570.9 471.7L571.4 467.5L571.4 467.5L571.5 467.4L571.5 467.3L572.3 462.8L572.3 462.8L572.4 462.6L572.4 462.6L573.6 457.6L574.9 452.5L575.8 447.8L576.0 443.9L575.5 441.1L574.6 439.2L573.5 437.9L571.8 436.8L569.1 435.7L565.0 434.7L559.4 433.5L551.5 432.3L541.5 430.9L530.4 429.8L529.4 429.7L539.9 479.0ZM396.3 495.8L411.2 491.5L414.9 485.9L416.0 472.4L407.4 458.5L395.1 468.9L395.2 469.0L395.3 469.0L395.4 469.1L395.5 469.2L395.6 469.3L395.6 469.5L395.7 469.6L395.8 469.7L395.9 469.8L395.9 469.9L396.0 470.0L396.0 470.2L396.1 470.3L396.1 470.4L396.1 470.6L396.1 470.7L396.2 470.9L396.2 471.0L396.2 471.1L396.2 471.3L396.2 471.4L396.1 471.5L396.1 471.7L396.1 471.8L396.0 471.9L396.0 472.1L396.0 472.2L395.9 472.3L395.8 472.5L395.8 472.6L395.7 472.7L395.6 472.8L395.5 472.9L395.4 473.0L395.3 473.1L395.2 473.2L395.1 473.3L395.0 473.4L394.9 473.5L394.8 473.5L394.7 473.6L394.5 473.7L394.5 473.7L393.7 474.0L393.5 474.1L393.5 474.1L393.4 474.2L393.4 474.3L393.1 475.5L393.0 475.6L393.0 475.6L393.0 475.7L392.6 476.8L392.6 476.8L392.5 476.9L392.5 476.9L392.1 478.0L392.1 478.0L392.0 478.1L392.0 478.1L391.5 479.1L391.5 479.2L391.5 479.2L391.4 479.3L390.9 480.2L390.9 480.2L390.8 480.3L390.8 480.3L390.3 481.2L390.2 481.2L390.1 481.3L390.1 481.4L389.5 482.1L389.5 482.2L389.4 482.3L389.3 482.3L388.7 483.0L388.6 483.0L388.5 483.1L388.4 483.2L387.8 483.7L387.7 483.8L387.7 483.8L387.7 483.8L387.8 483.9L388.4 484.4L388.5 484.4L388.6 484.5L388.7 484.6L389.3 485.2L389.4 485.3L389.5 485.4L389.5 485.4L390.2 486.2L390.2 486.2L390.3 486.3L390.3 486.4L390.9 487.2L390.9 487.2L391.0 487.3L391.0 487.3L391.5 488.2L391.5 488.3L391.6 488.3L391.6 488.4L392.1 489.4L392.1 489.4L392.2 489.5L392.2 489.5L392.6 490.5L392.7 490.6L392.7 490.6L392.7 490.7L393.1 491.8L393.2 491.8L393.2 491.9L393.2 491.9L393.6 493.2L393.6 493.2L393.6 493.3L393.7 493.4L393.9 493.5L394.6 493.8L394.7 493.8L394.8 493.9L395.0 493.9L395.1 494.0L395.2 494.1L395.3 494.1L395.4 494.2L395.5 494.3L395.6 494.4L395.7 494.5L395.8 494.6L395.9 494.7L396.0 494.8L396.0 495.0L396.1 495.1L396.1 495.2L396.2 495.3L396.3 495.5L396.3 495.6L396.3 495.7ZM493.2 471.2L493.2 471.3L493.3 471.4L493.4 471.5L493.4 471.6L493.5 471.7L493.6 471.9L493.6 472.0L493.7 472.1L493.7 472.3L493.7 472.4L493.8 472.5L493.8 472.7L493.8 472.8L493.8 472.9L493.8 473.1L493.8 473.2L493.8 473.3L493.8 473.4L501.7 503.0L505.4 502.1L514.7 491.0L493.9 450.5L488.7 454.5ZM509.4 428.8L496.0 448.4L516.8 489.1L518.4 487.8ZM444.8 467.5L445.5 468.3L445.5 468.4L445.6 468.5L445.6 468.5L446.5 469.7L446.5 469.7L446.5 469.8L446.6 469.9L446.6 469.9L446.7 469.7L446.7 469.6L446.7 469.5L446.8 469.4L447.0 468.6L447.1 468.5L447.1 468.4L447.2 468.4L447.5 467.6L447.6 467.5L447.6 467.4L447.7 467.3L447.8 467.1L447.8 467.1L447.7 467.1L447.6 467.2L447.5 467.2L446.1 467.4L446.0 467.4L445.9 467.4L445.8 467.5ZM452.1 462.8L452.3 462.7L452.4 462.6L452.5 462.6L452.6 462.5L453.4 462.2L453.4 462.1L453.5 462.1L453.6 462.0L454.4 461.8L454.5 461.7L454.6 461.7L454.7 461.7L454.9 461.6L454.9 461.6L454.8 461.5L454.7 461.5L454.7 461.5L453.5 460.6L453.5 460.6L453.4 460.5L453.3 460.5L452.5 459.8L452.5 460.8L452.4 460.9L452.4 461.0L452.4 461.1L452.2 462.5L452.2 462.6L452.1 462.7L452.1 462.8ZM461.1 461.6L461.3 461.7L461.4 461.7L461.5 461.7L461.6 461.8L462.4 462.0L462.5 462.1L462.6 462.1L462.6 462.2L463.4 462.5L463.5 462.6L463.6 462.6L463.7 462.7L463.9 462.8L463.9 462.8L463.9 462.7L463.8 462.6L463.8 462.5L463.6 461.1L463.6 461.0L463.6 460.9L463.5 460.8L463.5 459.8L462.7 460.5L462.6 460.5L462.5 460.6L462.5 460.6L461.3 461.5L461.3 461.5L461.2 461.5L461.1 461.6ZM446.6 476.1L446.6 476.1L446.5 476.2L446.5 476.3L446.5 476.3L446.2 476.7L446.8 476.8L446.8 476.6L446.7 476.5L446.7 476.4L446.7 476.3ZM418.3 470.8L422.5 471.7L422.6 471.6L422.6 471.5L422.7 471.4L422.8 471.3L422.9 471.2L423.0 471.1L423.1 471.0L423.2 470.9L423.3 470.8L423.4 470.7L423.5 470.6L423.6 470.6L423.7 470.5L423.9 470.4L424.0 470.4L424.1 470.3L424.3 470.3L424.4 470.3L424.5 470.2L424.7 470.2L424.8 470.2L424.9 470.2L425.0 470.2L425.8 470.2L426.1 470.2L426.1 470.2L426.2 470.1L426.2 470.0L427.0 469.1L427.1 469.0L427.1 469.0L427.1 468.9L428.0 468.1L428.0 468.0L428.0 468.0L428.1 468.0L428.9 467.2L428.9 467.1L429.0 467.1L429.0 467.1L429.8 466.4L429.9 466.3L429.9 466.3L430.0 466.2L430.8 465.6L430.8 465.6L430.9 465.5L431.0 465.5L431.8 465.0L431.9 464.9L432.0 464.9L432.0 464.8L432.8 464.4L432.9 464.4L433.0 464.3L433.1 464.3L433.9 463.9L434.0 463.9L434.2 463.8L434.3 463.8L435.1 463.6L435.2 463.6L435.2 463.6L435.2 463.5L435.2 463.5L434.7 462.7L434.7 462.6L434.6 462.5L434.6 462.4L434.2 461.6L434.2 461.5L434.1 461.4L434.1 461.3L433.8 460.4L433.8 460.3L433.8 460.2L433.8 460.2L433.6 459.2L433.6 459.1L433.6 459.0L433.5 459.0L433.4 458.0L433.4 457.9L433.4 457.8L433.4 457.8L433.3 456.7L433.3 456.7L433.3 456.6L433.3 456.5L433.3 455.4L433.3 455.4L433.3 455.3L433.3 455.3L433.3 454.0L433.3 454.0L433.3 453.9L433.3 453.9L433.4 452.6L433.4 452.5L433.4 452.4L433.4 452.4L433.3 452.2L432.7 451.6L432.6 451.6L432.5 451.5L432.5 451.4L432.4 451.3L432.3 451.2L432.2 451.0L432.2 450.9L432.1 450.8L432.1 450.7L432.0 450.5L432.0 450.4L431.9 450.3L431.9 450.1L431.9 450.0L431.9 449.9L431.9 449.7L431.9 449.6L431.9 449.5L431.9 449.3L431.9 449.2L431.9 449.1L432.0 448.9L432.0 448.8L432.1 448.7L432.1 448.5L432.2 448.4L432.2 448.3L432.3 448.2L432.4 448.1L432.5 447.9L432.5 447.8L432.6 447.7L432.7 447.6L432.8 447.5L432.9 447.5L433.1 447.4L433.2 447.3L433.3 447.2L433.4 447.2L433.5 447.1L433.7 447.1L433.8 447.0L433.9 447.0L434.1 446.9L434.2 446.9L434.3 446.9L434.5 446.9L434.6 446.9L434.7 446.9L434.9 446.9L435.0 446.9L435.1 446.9L435.3 446.9L435.4 447.0L435.5 447.0L435.7 447.1L435.8 447.1L435.9 447.2L436.0 447.2L436.2 447.3L436.3 447.4L436.4 447.5L436.5 447.5L436.6 447.6L436.6 447.7L437.2 448.3L437.4 448.4L437.4 448.4L437.5 448.4L437.6 448.4L438.9 448.3L438.9 448.3L439.0 448.3L439.0 448.3L440.3 448.3L440.3 448.3L440.4 448.3L440.4 448.3L441.5 448.3L441.6 448.3L441.7 448.3L441.7 448.3L442.8 448.4L442.8 448.4L442.9 448.4L443.0 448.4L444.0 448.5L444.0 448.6L444.1 448.6L444.2 448.6L445.2 448.8L445.2 448.8L445.3 448.8L445.4 448.8L446.3 449.1L446.4 449.1L446.5 449.2L446.6 449.2L447.4 449.6L447.5 449.6L447.6 449.7L447.7 449.7L448.5 450.2L448.5 450.2L448.6 450.2L448.6 450.2L448.6 450.1L448.8 449.3L448.8 449.2L448.9 449.0L448.9 448.9L449.3 448.1L449.3 448.0L449.4 447.9L449.4 447.8L449.8 447.0L449.9 447.0L449.9 446.9L450.0 446.8L450.5 446.0L450.5 445.9L450.6 445.8L450.6 445.8L451.2 445.0L451.3 444.9L451.3 444.9L451.4 444.8L452.1 444.0L452.1 444.0L452.1 443.9L452.2 443.9L453.0 443.1L453.0 443.0L453.0 443.0L453.1 443.0L453.9 442.1L454.0 442.1L454.0 442.1L454.1 442.0L454.3 441.8L453.9 441.1L450.4 441.2L445.4 441.3L440.3 441.6L434.9 442.1L429.3 442.7L423.5 443.3L423.5 443.3L423.5 443.3L423.5 443.3L417.6 443.9L417.6 443.9L417.6 443.9L417.5 443.9L411.5 444.4L411.5 444.4L411.5 444.4L411.4 444.4L408.3 444.7L409.1 455.9ZM292.8 495.6L322.3 487.1L314.9 459.7L313.1 460.9L310.3 463.1L307.7 465.5L305.3 468.0L303.1 470.7L301.0 473.6L299.2 476.7L297.5 480.2L296.1 484.1L294.8 488.3L293.6 492.7ZM464.5 664.7L465.0 667.0L465.0 667.0L465.0 667.0L465.0 667.0L465.5 669.6L465.5 669.6L465.5 669.6L465.5 669.6L466.0 672.2L466.0 672.2L466.0 672.2L466.0 672.2L466.5 674.9L466.5 675.0L466.6 675.2L466.6 675.3L466.6 675.4L466.6 675.5L466.7 678.4L466.7 678.5L466.7 678.7L466.7 678.8L466.6 679.0L466.6 679.0L466.2 682.1L466.2 682.1L466.2 682.2L466.2 682.2L465.8 684.9L465.7 686.8L466.1 687.6L467.1 688.4L470.8 689.4L477.0 690.1L484.4 690.4L485.0 690.4L466.7 664.0ZM520.6 489.6L517.3 492.2L508.2 503.1L554.2 540.4L555.1 539.4L556.6 536.9L558.2 534.1L559.6 530.7L561.1 526.2L562.7 520.7L564.1 514.7L565.4 508.8L566.6 503.5L567.5 499.3L568.0 496.6L568.2 495.2L568.2 494.4L568.2 493.5L568.2 493.5L568.2 493.4L568.2 493.3L568.2 492.0L568.2 492.0L568.2 491.8L568.2 491.8L568.4 489.7L568.4 489.6L568.4 489.6L568.4 489.5L568.8 486.6L568.8 486.6L568.8 486.6L568.8 486.6L569.2 483.3L569.2 483.3L569.2 483.3L569.2 483.3L569.3 483.3L539.0 481.8ZM353.6 476.9L353.8 476.6L353.8 476.6L353.9 476.5L354.0 476.4L354.6 475.8L354.6 475.7L354.7 475.6L354.8 475.6L355.4 475.0L355.5 474.9L355.6 474.8L355.6 474.8L355.7 474.7L355.7 474.7L355.6 474.7L355.5 474.7L355.5 474.7L354.0 474.4L354.0 474.3L353.9 474.3L353.8 474.3L352.8 474.0L353.1 475.0L353.2 475.0L353.2 475.1L353.2 475.2L353.5 476.6L353.5 476.7L353.6 476.8L353.6 476.9ZM361.4 472.3L361.7 472.3L361.8 472.3L361.9 472.3L362.0 472.2L362.9 472.2L362.9 472.2L363.1 472.2L363.1 472.2L363.5 472.2L362.7 470.1L362.4 470.6L362.4 470.7L362.3 470.8L362.3 470.9L361.5 472.1L361.5 472.1L361.4 472.2L361.4 472.3ZM344.7 448.3L346.7 458.3L347.2 457.2L347.2 457.1L347.3 457.1L347.3 457.0L347.9 455.9L347.9 455.8L347.9 455.7L347.9 455.7L347.9 455.5L347.5 454.7L347.5 454.7L347.5 454.5L347.4 454.4L347.4 454.3L347.4 454.1L347.3 454.0L347.3 453.9L347.3 453.7L347.3 453.6L347.3 453.5L347.3 453.3L347.3 453.2L347.4 453.0L347.4 452.9L347.4 452.8L347.5 452.7L347.5 452.5L347.6 452.4L347.6 452.3L347.7 452.2L347.8 452.0L347.9 451.9L348.0 451.8L348.0 451.7L348.1 451.6L348.2 451.5L348.3 451.4L348.5 451.4L348.6 451.3L348.7 451.2L348.8 451.1L348.9 451.1L349.0 451.0L349.2 451.0L349.3 450.9L349.4 450.9L349.6 450.9L349.7 450.9L349.9 450.8L350.0 450.8L350.1 450.8L350.3 450.8L350.4 450.8L350.5 450.9L350.7 450.9L350.8 450.9L350.9 451.0L351.1 451.0L351.2 451.0L351.3 451.1L351.5 451.2L351.6 451.2L351.7 451.3L351.8 451.4L351.9 451.5L352.0 451.6L352.1 451.7L352.2 451.8L352.3 451.9L352.4 452.0L352.5 452.1L352.5 452.2L352.6 452.3L352.7 452.5L352.7 452.5L353.0 453.3L353.1 453.5L353.1 453.5L353.2 453.6L353.3 453.6L354.5 453.9L354.6 454.0L354.6 454.0L354.7 454.0L355.8 454.4L355.8 454.4L355.9 454.5L355.9 454.5L357.0 454.9L357.0 454.9L357.1 455.0L357.1 455.0L357.4 455.2L354.6 447.0L354.0 447.1L348.8 447.7ZM329.2 594.5L329.2 594.6L329.1 594.7L329.1 594.9L329.0 595.0L328.9 595.1L328.8 595.3L328.8 595.4L327.7 597.1L333.0 602.2L333.4 601.0L333.4 601.0L333.5 600.9L333.5 600.9L335.1 597.2L335.1 597.2L335.1 597.2L335.1 597.2L336.7 593.5L338.4 589.8L338.4 589.8L338.4 589.7L338.4 589.7L340.2 585.9L340.2 585.9L340.2 585.8L340.2 585.8L342.2 582.0L342.2 582.0L342.3 581.8L342.3 581.8L344.6 578.2L344.6 578.2L344.8 578.0L344.8 577.9L347.4 574.7L347.5 574.6L347.6 574.6L346.1 574.3L346.1 574.4L346.0 574.6L345.9 574.7L345.9 574.8L345.8 574.9L345.7 575.0L345.6 575.1L345.5 575.2L345.4 575.3L345.3 575.4L345.2 575.5L345.1 575.5L345.0 575.6L344.8 575.7L344.7 575.7L344.6 575.8L344.5 575.9L344.3 575.9L344.2 575.9L344.1 576.0L343.9 576.0L343.8 576.0L343.7 576.0L343.5 576.0L343.4 576.0L343.3 576.0L343.1 576.0L343.1 576.0L342.3 575.8L342.3 575.8L342.2 575.9L341.3 576.6L341.3 576.7L341.2 576.7L341.2 576.7L340.3 577.4L340.3 577.4L340.2 577.5L340.2 577.5L339.3 578.1L339.3 578.1L339.3 578.1L339.2 578.1L338.4 578.7L338.3 578.7L338.3 578.7L338.2 578.8L337.4 579.2L337.3 579.2L337.2 579.3L337.2 579.3L336.4 579.7L336.3 579.7L336.2 579.7L336.1 579.7L335.3 580.0L335.3 580.0L335.1 580.1L335.0 580.1L334.3 580.3L334.2 580.3L334.0 580.3L333.9 580.3L333.4 580.4L333.6 580.8L333.6 580.9L333.7 581.1L333.7 581.2L333.9 582.0L333.9 582.0L333.9 582.2L333.9 582.3L334.0 583.1L334.0 583.2L334.0 583.3L334.0 583.4L334.0 584.3L334.0 584.3L334.0 584.4L334.0 584.5L334.0 585.4L334.0 585.4L334.0 585.5L334.0 585.6L333.9 586.6L333.9 586.6L333.8 586.7L333.8 586.7L333.7 587.8L333.7 587.8L333.6 587.9L333.6 587.9L333.4 589.0L333.4 589.0L333.4 589.1L333.4 589.1L333.1 590.3L333.0 590.3L333.1 590.4L333.5 591.0L333.5 591.0L333.6 591.1L333.7 591.3L333.7 591.4L333.8 591.5L333.8 591.6L333.9 591.8L333.9 591.9L334.0 592.0L334.0 592.2L334.0 592.3L334.0 592.4L334.0 592.6L334.0 592.7L334.0 592.8L334.0 593.0L334.0 593.1L333.9 593.2L333.9 593.4L333.8 593.5L333.8 593.6L333.7 593.8L333.7 593.9L333.6 594.0L333.5 594.1L333.5 594.2L333.4 594.3L333.3 594.4L333.2 594.5L333.1 594.6L333.0 594.7L332.9 594.8L332.8 594.9L332.7 595.0L332.5 595.0L332.4 595.1L332.3 595.2L332.2 595.2L332.0 595.2L331.9 595.3L331.8 595.3L331.6 595.3L331.5 595.4L331.4 595.4L331.2 595.4L331.1 595.4L330.9 595.4L330.8 595.3L330.7 595.3L330.5 595.3L330.4 595.3L330.3 595.2L330.1 595.2L330.0 595.1L329.9 595.0L329.8 595.0L329.7 594.9L329.5 594.8L329.4 594.7L329.3 594.6L329.2 594.6ZM315.6 579.2L316.2 579.8L316.3 579.8L316.4 579.9L316.4 579.9L316.7 580.3L316.9 579.8L316.9 579.8L316.9 579.7L316.9 579.6L317.2 578.8L317.2 578.8L317.1 578.9L316.3 579.1L316.3 579.1L316.1 579.1L316.1 579.1ZM361.0 511.1L364.7 510.4L364.7 510.3L364.0 509.7L364.0 509.6L363.9 509.5L363.8 509.4L363.3 508.8L363.2 508.7L363.2 508.7L363.2 508.7L363.1 508.8L362.6 509.4L362.6 509.5L362.5 509.6L362.4 509.7L361.8 510.3L361.7 510.4L361.6 510.5L361.6 510.5ZM353.2 493.5L353.0 494.2L353.6 494.0ZM330.4 498.5L328.4 513.8L331.9 516.5L348.1 513.5L348.4 512.8L348.4 512.6L348.4 512.5L348.4 512.4L348.3 512.4L347.7 511.2L347.7 511.2L347.7 511.1L347.7 511.1L347.2 510.0L347.2 510.0L347.1 509.9L347.1 509.9L346.7 508.8L346.7 508.8L346.7 508.7L346.6 508.7L346.3 507.6L346.3 507.6L346.3 507.5L346.2 507.5L346.0 506.4L346.0 506.4L345.9 506.3L345.9 506.2L345.7 505.3L345.7 505.2L345.7 505.1L345.7 505.0L345.6 504.1L345.6 504.0L345.6 503.9L345.6 503.8L345.6 502.9L345.6 502.8L345.6 502.6L345.6 502.6L345.7 501.7L345.7 501.6L345.7 501.6L345.7 501.6L345.6 501.6L344.7 501.7L344.7 501.7L344.5 501.8L344.4 501.8L343.5 501.8L343.4 501.8L343.3 501.8L343.2 501.8L342.3 501.7L342.2 501.7L342.1 501.7L342.0 501.6L341.1 501.5L341.0 501.5L340.9 501.4L340.9 501.4L339.8 501.2L339.8 501.2L339.7 501.1L339.7 501.1L338.6 500.8L338.6 500.8L338.5 500.8L338.5 500.7L337.4 500.3L337.4 500.3L337.3 500.3L337.3 500.3L336.2 499.8L336.1 499.8L336.1 499.7L336.0 499.7L334.9 499.1L334.8 499.1L334.7 499.1L334.7 499.1L334.5 499.1L333.7 499.5L333.7 499.5L333.5 499.5L333.4 499.6L333.3 499.6L333.1 499.6L333.0 499.7L332.9 499.7L332.7 499.7L332.6 499.7L332.5 499.7L332.3 499.7L332.2 499.7L332.0 499.6L331.9 499.6L331.8 499.6L331.7 499.5L331.5 499.5L331.4 499.4L331.3 499.4L331.2 499.3L331.0 499.2L330.9 499.1L330.8 499.0L330.7 499.0L330.6 498.9L330.5 498.8L330.4 498.7L330.4 498.5ZM487.8 556.3L527.6 575.9L528.9 576.0L529.2 574.8L529.2 574.8L529.2 574.7L529.2 574.6L530.7 569.5L530.8 569.5L530.8 569.3L530.8 569.2L532.7 564.7L532.7 564.6L532.7 564.5L532.8 564.4L532.9 564.2L532.9 564.2L535.2 560.3L535.2 560.3L535.3 560.1L535.4 560.0L535.5 559.9L535.5 559.8L538.2 556.7L538.3 556.7L538.4 556.5L538.5 556.4L541.4 553.8L541.4 553.8L541.5 553.7L541.5 553.7L544.4 551.3L547.0 549.0L548.0 548.0L490.3 548.0ZM334.1 546.5L334.3 548.5L335.0 548.6L335.0 548.6L335.1 548.6L335.1 548.6L336.3 548.9L336.3 549.0L336.4 548.9L337.0 548.5L337.0 548.5L337.1 548.4L337.3 548.3L337.4 548.3L337.5 548.2L337.7 548.1L337.8 548.1L337.9 548.1L338.1 548.0L338.2 548.0L338.3 548.0L338.5 548.0L338.6 548.0L338.8 548.0L338.9 548.0L339.0 548.0L339.2 548.1L339.3 548.1L339.5 548.1L339.6 548.2L339.7 548.2L339.8 548.3L340.0 548.4L340.1 548.4L340.2 548.5L340.3 548.6L340.4 548.7L340.5 548.8L340.6 548.9L340.7 549.0L340.8 549.1L340.9 549.2L341.0 549.3L341.0 549.5L341.1 549.6L341.1 549.7L341.2 549.8L341.2 549.9L341.3 550.1L341.3 550.2L341.3 550.3L341.4 550.5L341.4 550.6L341.4 550.7L341.4 550.9L341.4 551.0L341.4 551.1L341.3 551.3L341.3 551.4L341.3 551.5L341.2 551.7L341.2 551.8L341.1 551.9L341.1 552.0L341.0 552.1L341.0 552.3L340.9 552.4L340.8 552.5L340.7 552.6L340.6 552.7L340.5 552.8L340.4 552.9L340.3 553.0L340.2 553.0L340.2 553.1L339.6 553.5L339.5 553.5L339.5 553.6L339.4 554.8L339.4 554.8L339.4 554.9L339.4 554.9L339.3 556.0L339.3 556.1L339.2 556.1L339.2 556.2L339.0 557.2L339.0 557.2L339.0 557.3L339.0 557.3L338.8 558.3L338.8 558.4L338.7 558.4L338.7 558.5L338.5 559.4L338.4 559.4L338.4 559.5L338.4 559.6L338.1 560.4L338.0 560.5L338.0 560.6L338.0 560.6L337.6 561.4L337.5 561.5L337.5 561.6L337.4 561.7L337.0 562.4L336.9 562.4L336.8 562.6L336.8 562.6L336.5 563.0L336.9 563.2L337.0 563.3L337.2 563.3L337.2 563.4L337.9 563.8L338.0 563.9L338.1 564.0L338.2 564.0L338.8 564.5L338.9 564.6L339.0 564.7L339.0 564.7L339.7 565.3L339.7 565.4L339.8 565.4L339.8 565.5L340.4 566.2L340.5 566.2L340.5 566.3L340.5 566.3L341.2 567.1L341.2 567.1L341.2 567.2L341.3 567.2L341.9 568.1L341.9 568.1L341.9 568.1L341.9 568.2L342.5 569.1L342.6 569.1L342.6 569.2L342.6 569.2L343.2 570.3L343.2 570.3L343.3 570.3L344.0 570.5L344.1 570.5L344.2 570.5L344.4 570.5L344.5 570.6L344.6 570.6L344.8 570.7L344.9 570.7L345.0 570.8L345.1 570.9L345.2 571.0L345.3 571.1L345.4 571.1L345.5 571.2L345.6 571.3L345.7 571.4L350.2 572.1L350.9 571.5L350.9 571.5L351.1 571.3L351.2 571.3L351.4 571.1L351.5 571.1L355.2 568.9L355.3 568.9L355.4 568.8L355.5 568.7L355.7 568.7L355.7 568.6L360.1 566.9L360.2 566.9L360.4 566.8L360.4 566.8L349.0 549.0L348.1 548.6L348.0 548.6L347.9 548.6L347.8 548.5L346.7 548.0L346.6 548.0L346.5 547.9L346.4 547.9L345.3 547.2L345.3 547.2L345.2 547.1L345.1 547.1L344.1 546.3L344.0 546.3L343.9 546.2L343.9 546.1L342.9 545.3L342.9 545.2L342.8 545.1L342.7 545.1L341.9 544.1L341.8 544.1L341.7 544.0L341.7 543.9L340.9 542.9L340.9 542.8L340.8 542.7L340.8 542.7L340.5 542.2ZM460.8 440.8L460.8 441.1L460.8 441.1L460.9 441.2L461.0 441.2L461.9 442.0L462.0 442.1L462.0 442.1L462.1 442.1L462.9 443.0L463.0 443.0L463.0 443.0L463.0 443.1L463.8 443.9L463.9 443.9L463.9 444.0L463.9 444.0L464.6 444.8L464.7 444.9L464.7 444.9L464.8 445.0L465.4 445.8L465.4 445.8L465.5 445.9L465.5 446.0L466.0 446.8L466.1 446.9L466.1 447.0L466.2 447.0L466.6 447.8L466.6 447.9L466.7 448.0L466.7 448.1L467.1 448.9L467.1 449.0L467.2 449.2L467.2 449.3L467.4 450.1L467.4 450.2L467.4 450.2L467.5 450.2L467.5 450.2L468.3 449.7L468.4 449.7L468.5 449.6L468.6 449.6L469.4 449.2L469.5 449.2L469.6 449.1L469.7 449.1L470.6 448.8L470.7 448.8L470.8 448.8L470.8 448.8L471.8 448.6L471.9 448.6L472.0 448.6L472.0 448.5L473.0 448.4L473.1 448.4L473.2 448.4L473.2 448.4L474.3 448.3L474.3 448.3L474.4 448.3L474.5 448.3L475.6 448.3L475.6 448.3L475.7 448.3L475.7 448.3L477.0 448.3L477.0 448.3L477.1 448.3L477.1 448.3L478.4 448.4L478.5 448.4L478.6 448.4L478.6 448.4L478.8 448.3L479.4 447.7L479.4 447.6L479.5 447.5L479.6 447.5L479.7 447.4L479.8 447.3L480.0 447.2L480.1 447.2L480.2 447.1L480.3 447.1L480.5 447.0L480.6 447.0L480.7 446.9L480.9 446.9L481.0 446.9L481.1 446.9L481.3 446.9L481.4 446.9L481.5 446.9L481.7 446.9L481.8 446.9L481.9 446.9L482.1 447.0L482.2 447.0L482.3 447.1L482.5 447.1L482.6 447.2L482.7 447.2L482.8 447.3L482.9 447.4L483.1 447.5L483.2 447.5L483.3 447.6L483.4 447.7L483.5 447.8L483.5 447.9L483.6 448.1L483.7 448.2L483.8 448.3L483.8 448.4L483.9 448.5L483.9 448.7L484.0 448.8L484.0 448.9L484.1 449.1L484.1 449.2L484.1 449.3L484.1 449.5L484.1 449.6L484.1 449.7L484.1 449.9L484.1 450.0L484.1 450.1L484.1 450.3L484.0 450.4L484.0 450.5L483.9 450.7L483.9 450.8L483.8 450.9L483.8 451.0L483.7 451.2L483.6 451.3L483.5 451.4L483.5 451.5L483.4 451.6L483.3 451.6L482.7 452.2L482.6 452.4L482.6 452.4L482.6 452.5L482.6 452.6L482.7 453.8L486.5 452.7L493.3 447.3L506.2 428.5L500.3 428.6L494.1 429.5L489.1 431.2L484.8 433.3L480.6 435.6L480.6 435.6L480.5 435.6L480.5 435.6L476.2 437.7L476.2 437.8L476.1 437.8L476.0 437.9L475.8 437.9L475.8 437.9L471.1 439.4L471.0 439.5L470.7 439.5L470.6 439.5L465.7 440.4L465.6 440.4L465.4 440.4L465.4 440.4ZM339.5 527.7L340.0 526.7L340.0 526.6L340.1 526.5L340.1 526.4L340.8 525.3L340.8 525.3L340.9 525.2L340.9 525.1L341.7 524.1L341.7 524.0L341.8 523.9L341.9 523.9L342.7 522.9L342.8 522.9L342.9 522.8L342.9 522.7L343.9 521.9L343.9 521.8L344.0 521.7L344.1 521.7L345.1 520.9L345.2 520.9L345.3 520.8L345.3 520.8L346.4 520.1L346.5 520.1L346.6 520.0L346.7 520.0L347.8 519.5L347.9 519.4L348.0 519.4L348.1 519.4L349.3 518.9L349.3 518.9L349.5 518.9L349.5 518.8L350.8 518.5L350.9 518.5L351.0 518.5L351.1 518.5L352.3 518.3L352.4 518.3L352.5 518.3L352.6 518.3L353.9 518.2L353.9 518.2L354.1 518.2L354.1 518.2L355.4 518.3L355.5 518.3L355.6 518.3L355.7 518.3L356.9 518.5L357.0 518.5L357.1 518.5L357.2 518.5L358.5 518.8L358.5 518.9L358.7 518.9L358.7 518.9L359.9 519.4L360.0 519.4L360.1 519.4L360.2 519.5L361.3 520.0L361.4 520.0L361.5 520.1L361.6 520.1L362.7 520.8L362.7 520.8L362.8 520.9L362.9 520.9L363.9 521.7L364.0 521.7L364.1 521.8L364.1 521.9L365.1 522.7L365.1 522.8L365.2 522.9L365.3 522.9L366.1 523.9L366.2 523.9L370.0 521.9L371.3 514.0L370.2 513.6L370.2 513.6L370.1 513.5L370.1 513.5L369.0 513.1L369.0 513.1L368.9 513.0L368.9 513.0L368.0 512.6L353.4 515.3L353.2 515.6L353.2 515.7L353.2 515.8L353.1 515.9L353.0 516.1L353.0 516.2L352.9 516.3L352.8 516.4L352.7 516.5L352.6 516.6L352.5 516.7L352.4 516.8L352.3 516.8L352.2 516.9L352.1 517.0L352.0 517.1L351.8 517.1L351.7 517.2L351.6 517.2L351.5 517.3L351.3 517.3L351.2 517.3L351.1 517.4L351.0 517.4L350.8 517.4L350.7 517.4L350.6 517.4L350.4 517.4L350.3 517.4L350.2 517.4L350.0 517.3L349.9 517.3L349.8 517.3L349.6 517.2L349.5 517.2L349.4 517.1L349.3 517.0L349.1 517.0L349.0 516.9L348.9 516.8L348.8 516.7L348.7 516.6L348.6 516.5L348.5 516.4L348.4 516.3L348.4 516.3L333.9 519.0ZM502.6 656.5L502.6 656.5L502.8 656.6L502.9 656.6L503.1 656.7L503.2 656.7L503.4 656.8L503.6 656.9L503.7 657.0L503.9 657.0L504.0 657.1L504.1 657.2L504.3 657.4L504.4 657.5L504.6 657.6L504.6 657.7L505.3 658.4L505.3 658.4L505.5 658.6L505.6 658.7L505.7 658.9L505.8 659.1L505.9 659.3L505.9 659.4L506.0 659.6L506.0 659.8L506.1 660.0L506.1 660.1L506.2 660.4L506.2 660.4L506.4 662.7L506.4 662.7L506.4 662.9L506.4 663.0L506.4 663.2L506.4 663.3L506.2 666.4L505.9 669.6L506.1 672.2L506.6 673.4L507.2 674.0L508.0 674.7L511.8 675.5L518.2 676.0L525.8 676.1L533.3 675.8L539.7 675.2L543.7 674.5L543.7 674.5L542.5 672.8L540.8 670.6L538.4 668.3L534.5 665.6L529.8 662.3L529.8 662.3L529.6 662.2L529.6 662.2L525.0 658.4L524.9 658.4L524.8 658.2L524.7 658.2L524.6 658.0L524.5 658.0L520.7 653.6L520.7 653.5L520.6 653.3L520.5 653.2L520.4 653.0L520.3 652.9L520.2 652.7L520.2 652.7L517.9 647.4L517.9 647.4L517.8 647.1L517.7 647.0L517.7 646.8L517.7 646.6L517.6 646.4L517.6 646.3L517.0 639.9L517.0 639.8L517.0 639.6L517.0 639.5L517.0 639.3L517.0 639.3L517.5 634.3L502.8 636.9L502.6 645.2L502.5 652.7ZM254.1 620.1L253.5 622.4L252.2 626.9L252.2 626.9L252.2 627.0L252.2 627.0L250.9 631.5L250.8 631.6L250.8 631.6L250.8 631.6L249.4 636.1L249.4 636.1L249.4 636.1L249.4 636.1L247.9 640.6L247.9 640.6L246.3 645.3L246.3 645.3L246.3 645.3L246.3 645.3L244.8 649.9L244.8 649.9L244.8 650.0L244.8 650.0L243.2 654.4L243.2 654.4L243.2 654.4L243.2 654.4L241.7 658.5L241.7 658.5L241.7 658.6L241.7 658.6L240.4 662.1L240.3 662.1L240.3 662.3L240.3 662.3L239.0 665.0L239.0 665.1L238.8 665.3L238.8 665.4L237.6 667.5L237.5 667.5L237.5 667.6L237.4 667.6L236.3 669.3L235.5 670.6L234.9 671.9L234.4 673.8L233.8 676.8L233.8 676.8L233.8 676.8L233.8 676.8L233.1 680.4L232.7 683.9L232.7 687.0L233.2 688.9L234.1 689.9L236.8 690.9L241.9 691.6L248.1 691.8L254.4 691.7L259.8 691.2L263.2 690.6L264.2 690.1L264.3 689.9L264.3 689.4L264.2 688.0L263.7 686.0L263.7 686.0L263.7 686.0L263.7 686.0L263.2 684.0L262.6 682.4L261.6 680.5L260.0 678.3L260.0 678.3L260.0 678.2L259.9 678.2L258.3 675.7L258.3 675.6L258.2 675.4L258.1 675.3L256.8 672.6L256.8 672.5L256.7 672.3L256.7 672.2L256.6 672.0L256.6 671.9L255.8 668.9L255.8 668.8L255.8 668.6L255.7 668.5L255.7 668.3L255.7 668.2L255.5 664.9L255.5 664.8L255.5 664.6L255.5 664.5L255.7 660.9L255.7 660.8L255.7 660.7L255.7 660.6L256.2 656.8L256.2 656.8L256.2 656.7L256.2 656.6L256.8 652.6L256.8 652.6L256.9 652.6L256.9 652.5L257.6 648.4L257.6 648.4L257.6 648.4L257.6 648.4L258.5 644.3L258.5 644.3L258.5 644.2L258.5 644.2L259.4 639.8L259.4 639.8L259.5 639.8L259.5 639.8L260.6 635.0L260.6 635.0L260.6 634.9L260.6 634.9L261.9 630.0L261.9 630.0L261.9 630.0L261.9 630.0L262.4 628.4ZM325.1 647.7L326.9 651.8L327.6 653.3L327.7 653.3L327.9 653.3L328.1 653.3L328.3 653.3L328.5 653.4L328.6 653.4L328.9 653.5L328.9 653.6L329.5 653.8L329.6 653.8L329.8 653.9L329.9 654.0L330.0 654.1L330.2 654.2L330.3 654.3L330.4 654.4L330.6 654.5L330.7 654.6L330.8 654.8L330.9 654.9L331.0 655.0L331.1 655.1L331.2 655.3L331.2 655.4L331.3 655.6L331.4 655.6L331.9 656.8L331.9 656.9L332.0 657.1L332.0 657.2L332.1 657.4L332.1 657.6L332.2 657.8L332.2 657.9L332.2 658.2L332.2 658.2L332.2 660.6L332.2 660.6L332.2 660.9L332.2 661.0L332.2 661.2L332.2 661.3L331.6 664.4L331.6 664.4L331.6 664.4L331.6 664.4L331.0 667.7L330.8 670.3L331.1 671.7L331.7 672.4L334.7 673.3L340.2 674.0L346.8 674.2L353.4 674.1L359.0 673.8L360.8 673.5L359.9 672.6L358.3 670.9L356.3 669.3L353.2 667.6L349.5 665.6L349.4 665.6L349.3 665.5L349.3 665.5L345.4 663.1L345.3 663.0L345.1 662.9L345.0 662.8L341.5 659.9L341.4 659.8L341.2 659.6L341.1 659.5L340.9 659.3L340.9 659.3L338.1 655.6L338.1 655.5L337.9 655.3L337.9 655.2L337.7 654.9L337.7 654.9L335.6 650.1L335.6 650.0L335.5 649.8L335.4 649.7L333.6 644.0L333.6 643.9L333.6 643.8L333.6 643.7L333.2 642.0L324.5 646.0ZM411.1 507.0L411.7 506.1L411.7 506.0L411.8 505.9L411.9 505.9L412.7 504.9L412.8 504.9L412.9 504.8L412.9 504.7L413.9 503.9L413.9 503.8L414.0 503.7L414.1 503.7L415.1 502.9L415.2 502.9L415.3 502.8L415.3 502.8L416.4 502.1L416.5 502.1L416.6 502.0L416.7 502.0L417.8 501.5L417.9 501.4L418.0 501.4L418.1 501.4L419.3 500.9L419.3 500.9L419.5 500.9L419.5 500.8L420.8 500.5L420.9 500.5L421.0 500.5L421.1 500.5L422.3 500.3L422.4 500.3L422.5 500.3L422.6 500.3L423.9 500.2L423.9 500.2L424.1 500.2L424.1 500.2L425.4 500.3L425.5 500.3L425.6 500.3L425.7 500.3L416.4 488.7L413.3 493.3L410.3 505.3ZM349.0 484.0L348.7 484.1L349.1 484.3ZM332.3 474.6L332.1 474.5L331.4 474.2L331.3 474.2L331.2 474.1L331.0 474.1L330.9 474.0L330.8 473.9L330.7 473.9L330.6 473.8L330.5 473.7L330.4 473.6L330.3 473.5L330.2 473.4L330.1 473.3L330.0 473.2L330.0 473.0L329.9 472.9L329.9 472.8L329.8 472.7L329.7 472.5L329.7 472.4L329.7 472.3L329.6 472.1L329.6 472.0L329.6 471.9L329.6 471.7L329.6 471.6L329.6 471.4L329.6 471.3L329.6 471.2L329.7 471.0L329.7 470.9L329.7 470.8L329.8 470.6L329.8 470.5L329.9 470.4L330.0 470.3L330.0 470.1L330.1 470.0L330.2 469.9L330.3 469.8L330.4 469.7L330.5 469.6L330.6 469.5L330.7 469.4L330.8 469.4L330.9 469.3L331.0 469.2L331.1 469.1L331.3 469.1L331.4 469.0L331.5 469.0L331.6 468.9L331.8 468.9L331.9 468.9L332.0 468.9L332.2 468.8L332.3 468.8L332.5 468.8L332.6 468.8L332.7 468.9L332.9 468.9L333.0 468.9L333.1 468.9L333.3 469.0L333.4 469.0L333.5 469.0L334.2 469.4L334.4 469.4L334.5 469.4L334.6 469.4L334.6 469.3L335.8 468.7L335.8 468.7L335.9 468.7L335.9 468.7L337.0 468.2L337.0 468.2L337.1 468.1L337.1 468.1L338.2 467.7L338.2 467.7L338.3 467.7L338.3 467.6L339.4 467.3L339.4 467.3L339.5 467.3L339.5 467.2L340.6 467.0L340.6 467.0L340.7 466.9L340.8 466.9L341.7 466.7L341.8 466.7L341.9 466.7L342.0 466.7L342.9 466.6L343.0 466.6L343.1 466.6L343.2 466.6L344.1 466.6L344.2 466.6L344.4 466.6L344.4 466.6L345.3 466.7L345.4 466.7L345.4 466.7L345.4 466.7L345.4 466.6L345.3 465.7L345.3 465.7L345.2 465.5L345.2 465.4L345.2 465.2L342.0 448.8L339.2 449.4L334.8 450.5L330.6 451.8L326.7 453.3L323.0 455.0L319.5 456.8L317.3 458.1L325.3 487.4L330.0 492.2L333.3 491.5L333.4 491.2L333.4 491.2L333.5 491.1L333.5 491.1L333.9 490.0L333.9 490.0L334.0 489.9L334.0 489.9L334.5 488.9L334.5 488.8L334.5 488.8L334.6 488.7L335.1 487.8L335.1 487.8L335.2 487.7L335.2 487.7L335.7 486.8L335.8 486.8L335.9 486.7L335.9 486.6L336.5 485.9L336.5 485.8L336.6 485.7L336.7 485.7L337.3 485.0L337.4 485.0L337.5 484.9L337.6 484.8L338.2 484.3L338.3 484.2L338.3 484.2L338.3 484.2L338.2 484.1L337.6 483.6L337.5 483.6L337.4 483.5L337.3 483.4L336.7 482.8L336.6 482.7L336.5 482.6L336.5 482.6L335.8 481.8L335.8 481.8L335.7 481.7L335.7 481.6L335.1 480.8L335.1 480.8L335.0 480.7L335.0 480.7L334.5 479.8L334.5 479.7L334.4 479.7L334.4 479.6L333.9 478.6L333.9 478.6L333.8 478.5L333.8 478.5L333.4 477.5L333.3 477.4L333.3 477.4L333.3 477.3L332.9 476.2L332.8 476.2L332.8 476.1L332.8 476.1L332.4 474.8L332.4 474.8L332.4 474.7ZM361.6 495.7L361.6 495.7L361.6 495.8L361.7 495.9L361.7 495.9L362.5 497.2L362.6 497.2L362.6 497.3L362.6 497.4L363.1 498.3L363.6 497.4L363.6 497.3L363.7 497.2L363.7 497.1L364.5 495.9L364.5 495.9L364.6 495.8L364.6 495.7L364.6 495.7L364.3 495.7L364.2 495.7L364.1 495.7L364.0 495.8L363.1 495.8L363.1 495.8L362.9 495.8L362.9 495.8L362.0 495.8L361.9 495.7L361.8 495.7L361.7 495.7ZM370.3 493.3L370.3 493.3L370.4 493.3L370.5 493.3L370.5 493.3L372.0 493.6L372.0 493.7L372.1 493.7L372.2 493.7L373.2 494.0L372.9 493.0L372.8 493.0L372.8 492.9L372.8 492.8L372.5 491.4L372.5 491.3L372.4 491.2L372.4 491.1L372.4 491.1L372.2 491.4L372.2 491.4L372.1 491.5L372.0 491.6L371.4 492.2L371.4 492.3L371.3 492.4L371.2 492.4L370.6 493.0L370.5 493.1L370.4 493.2L370.4 493.2ZM374.7 485.4L374.7 485.4L374.8 485.4L374.9 485.3L374.9 485.3L376.2 484.5L376.2 484.4L376.3 484.4L376.4 484.4L377.3 483.9L376.4 483.4L376.3 483.4L376.2 483.3L376.1 483.3L374.9 482.5L374.9 482.5L374.8 482.4L374.7 482.4L374.7 482.4L374.7 482.7L374.7 482.8L374.7 482.9L374.8 483.0L374.8 483.9L374.8 483.9L374.8 484.1L374.8 484.1L374.8 485.0L374.7 485.1L374.7 485.2L374.7 485.3ZM378.7 561.6L382.3 560.1L385.9 558.1L389.5 556.2L389.5 556.2L389.6 556.1L389.6 556.1L393.0 554.5L393.0 554.5L393.2 554.4L393.3 554.4L393.4 554.3L393.5 554.3L396.4 553.4L396.5 553.4L396.7 553.4L396.8 553.3L397.0 553.3L397.1 553.3L397.3 553.3L397.4 553.3L397.6 553.3L397.7 553.3L397.8 553.3L413.2 541.7L375.3 530.2L378.3 561.8ZM537.2 479.5L526.4 429.5L519.1 428.9L512.2 428.6L521.0 486.4ZM378.7 511.1L391.2 513.6L407.6 504.5L410.1 494.7L382.1 502.9L380.5 505.6L380.5 505.9L380.5 506.0L380.4 506.1L380.4 506.1L380.2 507.2L380.2 507.2L380.1 507.3L380.1 507.3L379.8 508.4L379.8 508.4L379.8 508.5L379.7 508.5L379.3 509.6L379.3 509.6L379.3 509.7L379.3 509.7L378.8 510.8L378.8 510.9L378.7 510.9L378.7 511.0ZM361.3 457.7L361.3 457.7L362.0 458.3L362.0 458.4L362.1 458.5L362.2 458.6L362.7 459.2L362.8 459.3L362.8 459.3L362.8 459.3L362.9 459.2L363.4 458.6L363.4 458.5L363.5 458.4L363.6 458.3L364.2 457.7L364.3 457.6L364.4 457.5L364.4 457.5L365.2 456.8L365.2 456.8L365.3 456.7L365.4 456.7L366.2 456.1L366.2 456.1L366.3 456.0L366.3 456.0L367.2 455.5L367.3 455.5L367.3 455.4L367.4 455.4L368.4 454.9L368.4 454.9L368.5 454.8L368.5 454.8L369.5 454.4L369.6 454.3L369.6 454.3L369.7 454.3L370.8 453.9L370.8 453.8L370.9 453.8L370.9 453.8L372.2 453.4L372.2 453.4L372.3 453.4L372.4 453.3L372.5 453.1L372.8 452.4L372.8 452.3L372.9 452.2L372.9 452.0L373.0 451.9L373.1 451.8L373.1 451.7L373.2 451.6L373.3 451.5L373.4 451.4L373.5 451.3L373.6 451.2L373.7 451.1L373.8 451.0L374.0 451.0L374.1 450.9L374.2 450.9L374.3 450.8L374.5 450.7L374.6 450.7L374.7 450.7L374.9 450.6L375.0 450.6L375.1 450.6L375.3 450.6L375.4 450.6L375.6 450.6L375.7 450.6L375.8 450.6L376.0 450.7L376.1 450.7L376.2 450.7L376.4 450.8L376.5 450.8L376.6 450.9L376.7 451.0L376.9 451.0L377.0 451.1L377.1 451.2L377.2 451.3L377.3 451.4L377.4 451.5L377.5 451.6L377.6 451.7L377.6 451.8L377.7 451.9L377.8 452.0L377.9 452.1L377.9 452.3L378.0 452.4L378.0 452.5L378.1 452.6L378.1 452.8L378.1 452.9L378.1 453.0L378.2 453.2L378.2 453.3L378.2 453.5L378.2 453.6L378.1 453.7L378.1 453.9L378.1 454.0L378.1 454.1L378.0 454.3L378.0 454.4L378.0 454.5L377.6 455.2L377.6 455.4L377.6 455.5L377.6 455.6L377.7 455.6L378.3 456.8L378.3 456.8L378.3 456.9L378.3 456.9L378.8 458.0L378.8 458.0L378.9 458.1L378.9 458.1L379.3 459.2L379.3 459.2L379.3 459.3L379.4 459.3L379.7 460.4L379.7 460.4L379.7 460.5L379.8 460.5L380.0 461.6L380.0 461.6L380.1 461.7L380.1 461.8L380.3 462.7L380.3 462.8L380.3 462.9L380.3 463.0L380.4 463.9L380.4 464.0L380.4 464.1L380.4 464.2L380.4 465.1L380.4 465.2L380.4 465.4L380.4 465.4L380.3 466.3L380.3 466.4L380.3 466.4L380.3 466.4L380.4 466.4L381.3 466.3L381.3 466.3L381.5 466.2L381.6 466.2L382.5 466.2L382.6 466.2L382.7 466.2L382.8 466.2L383.7 466.3L383.8 466.3L383.9 466.3L384.0 466.4L384.9 466.5L385.0 466.5L385.1 466.6L385.1 466.6L386.2 466.8L386.2 466.8L386.3 466.9L386.3 466.9L387.4 467.2L387.4 467.2L387.5 467.2L387.5 467.3L388.6 467.7L388.6 467.7L388.7 467.7L388.7 467.7L389.8 468.2L389.9 468.2L389.9 468.3L390.0 468.3L390.9 468.7L406.2 455.8L405.5 444.9L405.3 444.9L405.2 444.9L405.2 444.9L405.2 444.9L398.7 445.2L398.7 445.2L398.6 445.2L398.6 445.2L391.8 445.3L391.8 445.3L391.8 445.3L391.8 445.3L384.8 445.4L377.9 445.5L371.4 445.7L365.3 446.1L359.5 446.6L357.5 446.8ZM370.1 474.6L370.4 474.8L370.4 474.8L370.5 474.9L370.6 475.0L371.0 475.4L372.6 475.3L372.6 475.0L372.7 475.0L372.7 474.9L372.7 474.8L373.0 473.8L372.0 474.1L372.0 474.2L371.9 474.2L371.8 474.2L370.4 474.5L370.3 474.5L370.2 474.6L370.1 474.6ZM409.4 510.1L408.2 507.4L393.7 515.4L416.8 539.7L420.0 539.2L420.4 535.1L418.4 530.8L418.1 530.6L418.0 530.6L417.9 530.6L417.8 530.5L416.7 530.0L416.6 530.0L416.5 529.9L416.4 529.9L415.3 529.2L415.3 529.2L415.2 529.1L415.1 529.1L414.1 528.3L414.0 528.3L413.9 528.2L413.9 528.1L412.9 527.3L412.9 527.2L412.8 527.1L412.7 527.1L411.9 526.1L411.8 526.1L411.7 526.0L411.7 525.9L410.9 524.9L410.9 524.8L410.8 524.7L410.8 524.7L410.1 523.6L410.1 523.5L410.0 523.4L410.0 523.3L409.5 522.2L409.4 522.1L409.4 522.0L409.4 521.9L408.9 520.7L408.9 520.7L408.9 520.5L408.8 520.5L408.5 519.2L408.5 519.1L408.5 519.0L408.5 518.9L408.3 517.7L408.3 517.6L408.3 517.5L408.3 517.4L408.2 516.1L408.2 516.1L408.2 515.9L408.2 515.9L408.3 514.6L408.3 514.5L408.3 514.4L408.3 514.3L408.5 513.1L408.5 513.0L408.5 512.9L408.5 512.8L408.8 511.5L408.9 511.5L408.9 511.3L408.9 511.3L409.4 510.1ZM503.9 604.3L503.6 610.1L503.4 618.0L503.4 618.0L503.1 627.0L502.9 634.0L517.7 631.4L517.7 631.4L519.2 623.1L519.2 623.1L519.2 623.0L519.2 623.0L520.0 619.5ZM456.2 627.8L456.5 629.2L457.4 633.0L476.4 643.8L475.9 636.6L475.9 636.6L475.9 636.6L475.9 636.5L475.8 635.0L461.9 622.6ZM326.2 547.5L326.3 547.7L326.3 547.8L326.3 548.0L326.3 548.1L326.4 548.6L326.8 548.4L326.9 548.4L327.1 548.3L327.2 548.3L328.0 548.1L328.0 548.1L328.2 548.1L328.3 548.1L329.1 548.0L329.2 548.0L329.3 548.0L329.4 548.0L330.3 548.0L330.3 548.0L330.4 548.0L330.5 548.0L331.4 548.0L331.4 548.0L331.5 548.0L331.4 547.3ZM301.7 570.7L302.2 570.9L302.2 570.9L302.3 570.9L302.4 570.9L303.2 571.2L303.2 571.2L303.1 571.1L302.9 570.3L302.9 570.3L302.9 570.1L302.9 570.1L302.8 569.6L302.2 570.2L302.2 570.3L302.1 570.4L302.1 570.4ZM304.1 562.6L304.1 562.6L304.1 562.6L304.5 561.8L304.6 561.8L304.6 561.7L304.7 561.6L304.9 561.3L304.1 561.3L304.1 561.3L303.9 561.3L303.9 561.3L303.4 561.2L303.6 561.7L303.6 561.7L303.7 561.8L303.7 561.9ZM310.8 557.2L310.8 557.2L310.9 557.1L311.7 556.9L311.7 556.9L311.9 556.9L311.9 556.9L312.4 556.8L311.8 556.2L311.7 556.2L311.6 556.1L311.6 556.1L311.3 555.7L311.1 556.2L311.1 556.2L311.1 556.3L311.1 556.4ZM319.4 558.1L319.4 558.1L319.4 558.1L320.2 558.5L320.2 558.6L320.3 558.6L320.4 558.7L320.7 558.9L320.7 558.1L320.7 558.1L320.7 557.9L320.7 557.9L320.8 557.4L320.3 557.6L320.3 557.6L320.2 557.7L320.1 557.7ZM324.8 564.8L324.8 564.8L324.9 564.9L325.1 565.7L325.1 565.7L325.1 565.9L325.1 565.9L325.2 566.4L325.8 565.8L325.8 565.7L325.9 565.6L325.9 565.6L326.3 565.3L325.8 565.1L325.8 565.1L325.7 565.1L325.6 565.1ZM279.4 571.0L291.1 573.5L291.2 573.4L291.2 573.4L291.5 573.0L291.1 572.8L291.0 572.7L290.8 572.7L290.8 572.6L290.1 572.2L290.0 572.1L289.9 572.0L289.8 572.0L289.2 571.5L289.1 571.4L289.0 571.3L289.0 571.3L288.3 570.7L288.3 570.6L288.2 570.6L288.2 570.5L287.6 569.8L287.5 569.8L287.5 569.7L287.5 569.7L286.8 568.9L286.8 568.9L286.8 568.8L286.7 568.8L286.1 567.9L286.1 567.9L286.1 567.9L286.1 567.8L285.5 566.9L285.4 566.9L285.4 566.8L285.4 566.8L284.8 565.7L284.8 565.7L284.7 565.7L284.0 565.5L283.9 565.5L283.8 565.5L283.6 565.5L283.5 565.4L283.4 565.4L283.2 565.3L283.1 565.3L283.0 565.2L282.9 565.1L282.8 565.0L282.7 564.9L282.6 564.9L282.5 564.8L282.4 564.7L282.3 564.5L282.2 564.4L282.1 564.3L281.5 565.8ZM284.0 560.0L284.1 560.0L284.2 560.0L284.3 560.0L284.5 560.0L284.6 560.0L284.7 560.0L284.9 560.0L284.9 560.0L285.7 560.2L285.7 560.2L285.8 560.1L286.7 559.4L286.7 559.3L286.8 559.3L286.8 559.3L287.7 558.6L287.7 558.6L287.8 558.5L287.8 558.5L288.7 557.9L288.7 557.9L288.7 557.9L288.8 557.9L289.6 557.3L289.7 557.3L289.7 557.3L289.8 557.2L290.6 556.8L290.7 556.8L290.8 556.7L290.8 556.7L291.6 556.3L291.7 556.3L291.8 556.3L291.9 556.3L292.7 556.0L292.7 556.0L292.9 555.9L293.0 555.9L293.7 555.7L293.8 555.7L294.0 555.7L294.1 555.7L294.6 555.6L294.4 555.2L294.4 555.1L294.3 554.9L294.3 554.8L294.1 554.0L294.1 554.0L294.1 553.8L294.1 553.7L294.0 552.9L294.0 552.8L294.0 552.7L294.0 552.6L294.0 551.7L294.0 551.7L294.0 551.6L294.0 551.5L294.0 550.6L294.0 550.6L294.0 550.5L294.0 550.4L294.1 549.4L294.1 549.4L294.2 549.3L294.2 549.3L294.3 548.7L289.3 548.9L288.7 550.9L288.6 551.0L288.5 551.2L288.5 551.3L287.5 553.4L287.5 553.4L287.4 553.6L287.4 553.6L286.1 555.7L284.8 558.2ZM452.7 588.7L454.8 599.5L461.5 600.3L478.3 593.8L478.4 572.9L478.2 572.9L478.1 572.9L477.4 572.9L477.6 573.6L477.6 573.6L477.6 573.8L477.6 573.9L477.7 574.8L477.8 574.8L477.8 575.0L477.8 575.1L477.8 576.0L477.8 576.0L477.8 576.2L477.8 576.2L477.7 577.2L477.7 577.2L477.7 577.3L477.7 577.4L477.5 578.4L477.5 578.4L477.5 578.5L477.5 578.6L477.3 579.6L477.3 579.6L477.2 579.7L477.2 579.7L476.9 580.8L476.9 580.9L476.9 580.9L476.9 581.0L476.5 582.1L476.5 582.1L476.5 582.2L476.5 582.2L476.0 583.4L476.0 583.5L476.0 583.5L476.0 583.6L476.4 584.3L476.5 584.4L476.5 584.5L476.6 584.6L476.6 584.7L476.7 584.9L476.7 585.0L476.7 585.1L476.8 585.3L476.8 585.4L476.8 585.5L476.8 585.7L476.8 585.8L476.8 585.9L476.8 586.1L476.8 586.2L476.7 586.3L476.7 586.5L476.7 586.6L476.6 586.7L476.6 586.8L476.5 587.0L476.4 587.1L476.4 587.2L476.3 587.3L476.2 587.4L476.1 587.5L476.1 587.6L476.0 587.7L475.9 587.8L475.8 587.9L475.7 588.0L475.5 588.0L475.4 588.1L475.3 588.2L475.2 588.2L475.1 588.3L474.9 588.4L474.8 588.4L474.7 588.4L474.5 588.5L474.4 588.5L474.2 588.5L474.1 588.5L474.0 588.5L473.8 588.5L473.7 588.5L473.5 588.5L473.4 588.4L473.3 588.4L473.1 588.4L473.0 588.3L472.9 588.3L472.7 588.2L472.6 588.1L472.5 588.1L472.4 588.0L472.3 587.9L472.2 587.8L472.1 587.7L472.0 587.6L471.9 587.5L471.8 587.4L471.7 587.3L471.6 587.2L471.6 587.1L471.2 586.4L471.1 586.3L471.0 586.3L471.0 586.3L469.7 586.1L469.7 586.1L469.6 586.1L469.6 586.1L468.4 585.8L468.4 585.8L468.3 585.8L468.3 585.8L467.2 585.5L467.2 585.5L467.1 585.5L467.1 585.5L466.1 585.2L466.0 585.1L465.9 585.1L465.9 585.1L465.0 584.7L464.9 584.7L464.8 584.7L464.8 584.6L463.9 584.2L463.8 584.2L463.7 584.1L463.7 584.1L462.9 583.7L462.8 583.6L462.7 583.5L462.6 583.5L462.0 583.0L461.9 582.9L461.8 582.8L461.7 582.7L461.2 582.3L460.8 582.8L460.8 582.9L460.7 583.1L460.6 583.1L460.1 583.8L460.1 583.9L460.0 584.0L459.9 584.0L459.3 584.7L459.2 584.7L459.1 584.8L459.1 584.9L458.4 585.5L458.3 585.5L458.2 585.6L458.2 585.6L457.4 586.2L457.4 586.2L457.3 586.3L457.2 586.3L456.3 586.9L456.3 586.9L456.3 587.0L456.2 587.0L455.3 587.5L455.2 587.5L455.2 587.6L455.1 587.6L454.1 588.1L454.0 588.2L454.0 588.2L453.9 588.2L452.8 588.7L452.7 588.7ZM449.7 566.4L449.7 566.5L449.7 566.5L449.6 568.0L449.6 568.0L449.6 568.1L449.6 568.2L449.4 569.2L450.3 568.8L450.4 568.8L450.5 568.7L450.6 568.7L451.9 568.2L452.0 568.2L452.1 568.2L452.1 568.2L451.6 567.9L451.5 567.8L451.4 567.8L451.3 567.7L450.6 567.2L450.6 567.2L450.5 567.1L450.4 567.0L449.8 566.4L449.7 566.4ZM458.1 569.8L458.1 569.9L458.2 569.9L459.1 571.0L459.1 571.0L459.2 571.1L459.3 571.2L459.8 572.0L460.2 571.0L460.2 571.0L460.3 570.9L460.3 570.8L460.9 569.5L460.9 569.5L461.0 569.4L461.0 569.4L460.4 569.5L460.4 569.6L460.2 569.6L460.2 569.6L459.3 569.7L459.2 569.7L459.1 569.7L459.0 569.8L458.1 569.8L458.1 569.8ZM466.4 566.3L466.5 566.3L466.5 566.3L468.0 566.4L468.0 566.4L468.1 566.4L468.2 566.4L469.2 566.6L468.8 565.7L468.8 565.6L468.7 565.5L468.7 565.4L468.2 564.1L468.2 564.0L468.2 563.9L468.2 563.9L467.9 564.4L467.8 564.5L467.8 564.6L467.7 564.7L467.2 565.4L467.2 565.4L467.1 565.5L467.0 565.6L466.4 566.2L466.4 566.3ZM326.0 599.4L324.1 601.8L324.1 601.8L324.0 601.9L324.0 601.9L321.0 605.3L318.4 608.3L316.7 610.8L315.6 612.5L315.5 612.6L315.4 612.8L315.3 612.9L314.5 613.9L314.3 614.2L314.3 614.2L314.3 615.3L314.8 617.9L316.0 622.4L318.0 628.4L320.4 635.1L322.9 641.8L323.5 643.4L332.5 639.2L332.1 637.4L332.1 637.4L332.1 637.3L332.1 637.2L331.0 630.8L331.0 630.8L330.9 630.6L330.9 630.6L330.2 624.5L330.2 624.5L330.2 624.3L330.2 624.3L329.9 618.9L329.9 618.8L329.9 618.6L329.9 618.5L330.1 613.9L330.1 613.8L330.1 613.6L330.1 613.5L330.8 609.3L330.8 609.2L330.9 609.0L330.9 608.9L332.0 605.1ZM278.4 573.6L277.1 577.0L277.1 577.0L277.0 577.0L277.0 577.0L274.6 582.8L274.6 582.8L274.6 582.9L274.6 582.9L272.2 588.3L272.2 588.4L272.2 588.4L272.2 588.5L269.9 593.1L269.9 593.1L269.8 593.3L269.8 593.3L267.6 596.9L267.6 597.0L267.5 597.2L267.4 597.3L265.3 600.1L265.2 600.2L265.1 600.3L265.1 600.3L263.0 602.8L261.0 605.1L259.2 607.5L257.6 610.4L256.1 613.9L255.1 617.1L263.3 625.3L263.3 625.3L263.3 625.3L263.3 625.2L263.3 625.2L264.6 621.0L264.6 621.0L264.6 621.0L264.6 620.9L265.8 617.5L265.8 617.5L265.8 617.4L265.8 617.4L266.8 614.9L266.8 614.9L266.9 614.8L266.9 614.7L267.7 613.1L267.7 613.0L267.8 612.7L267.9 612.7L268.6 611.5L268.7 611.4L268.7 611.3L268.8 611.2L268.9 611.1L268.9 611.1L269.8 610.1L269.8 610.0L270.0 609.9L270.0 609.8L271.1 608.8L271.1 608.8L271.1 608.8L271.1 608.8L272.5 607.4L272.5 607.4L272.5 607.4L272.5 607.4L274.4 605.6L274.4 605.6L274.4 605.6L274.5 605.6L276.6 603.7L276.6 603.6L276.7 603.6L276.7 603.6L279.1 601.6L279.1 601.6L279.1 601.6L279.2 601.5L281.7 599.6L281.7 599.6L281.8 599.5L281.8 599.5L284.4 597.7L284.4 597.7L284.5 597.6L284.5 597.6L287.1 596.0L287.1 596.0L287.1 595.9L287.2 595.9L289.7 594.4L289.7 594.4L289.7 594.4L289.7 594.4L292.2 593.0L292.3 593.0L292.4 592.9L292.4 592.9L294.9 591.6L295.0 591.6L295.1 591.6L295.1 591.5L297.8 590.4L297.9 590.4L298.0 590.3L298.1 590.3L300.9 589.3L300.9 589.3L301.1 589.3L301.1 589.3L301.9 589.1L301.9 589.0L301.7 588.3L301.7 588.2L301.7 588.0L301.7 587.9L301.6 587.4L301.2 587.6L301.1 587.6L300.9 587.7L300.8 587.7L300.0 587.9L300.0 587.9L299.8 587.9L299.7 587.9L298.9 588.0L298.8 588.0L298.7 588.0L298.6 588.0L297.7 588.0L297.7 588.0L297.6 588.0L297.5 588.0L296.6 588.0L296.6 588.0L296.5 588.0L296.4 588.0L295.4 587.9L295.4 587.9L295.3 587.8L295.3 587.8L294.2 587.7L294.2 587.7L294.1 587.6L294.1 587.6L293.0 587.4L293.0 587.4L292.9 587.4L292.9 587.4L291.7 587.1L291.7 587.0L291.0 587.5L291.0 587.5L290.9 587.6L290.7 587.7L290.6 587.7L290.5 587.8L290.3 587.9L290.2 587.9L290.1 587.9L289.9 588.0L289.8 588.0L289.7 588.0L289.5 588.0L289.4 588.0L289.2 588.0L289.1 588.0L289.0 588.0L288.8 587.9L288.7 587.9L288.5 587.9L288.4 587.8L288.3 587.8L288.2 587.7L288.0 587.6L287.9 587.6L287.8 587.5L287.7 587.4L287.6 587.3L287.5 587.2L287.4 587.1L287.3 587.0L287.2 586.9L287.1 586.8L287.0 586.7L287.0 586.5L286.9 586.4L286.9 586.3L286.8 586.2L286.8 586.1L286.7 585.9L286.7 585.8L286.7 585.7L286.6 585.5L286.6 585.4L286.6 585.3L286.6 585.1L286.6 585.0L286.6 584.9L286.7 584.7L286.7 584.6L286.7 584.5L286.8 584.3L286.8 584.2L286.9 584.1L286.9 584.0L287.0 583.9L287.0 583.7L287.1 583.6L287.2 583.5L287.3 583.4L287.4 583.3L287.5 583.2L287.6 583.1L287.7 583.0L287.8 583.0L287.8 582.9L288.5 582.5L288.5 582.4L288.6 581.2L288.6 581.2L288.6 581.1L288.6 581.1L288.7 580.0L288.7 579.9L288.8 579.9L288.8 579.8L289.0 578.8L289.0 578.8L289.0 578.7L289.0 578.7L289.2 577.7L289.2 577.6L289.3 577.6L289.3 577.5L289.5 576.6L289.6 576.6L289.6 576.5L289.6 576.4L289.8 576.0ZM458.2 636.7L458.7 638.9L459.9 643.9L459.9 643.9L461.0 648.8L461.0 648.8L462.0 653.4L462.0 653.4L462.0 653.4L462.0 653.4L462.9 657.5L462.9 657.5L462.9 657.5L462.9 657.5L463.7 661.1L463.7 661.1L463.9 662.0L466.5 661.1L477.0 651.1L477.0 650.9L477.0 650.8L477.0 650.8L477.0 650.8L476.6 647.2ZM401.7 553.8L401.7 553.8L401.9 554.0L402.0 554.0L402.2 554.2L402.3 554.2L404.2 555.8L404.3 555.9L404.5 556.0L404.6 556.1L404.7 556.3L404.8 556.4L405.0 556.6L405.0 556.7L405.2 557.0L405.2 557.0L406.6 559.9L406.6 560.0L406.7 560.1L406.8 560.3L406.8 560.4L406.8 560.5L407.9 564.1L407.9 564.1L408.0 564.2L408.0 564.3L408.9 567.9L409.7 570.6L409.8 570.8L410.4 570.4L410.4 570.4L410.4 570.4L410.4 570.4L411.7 569.6L411.7 569.5L411.9 569.5L412.0 569.4L412.1 569.3L412.2 569.3L413.6 568.7L413.6 568.7L413.6 568.7L413.6 568.7L414.9 568.2L416.2 567.4L416.2 567.4L416.2 567.4L416.2 567.4L417.8 566.5L417.8 566.4L418.1 566.3L418.1 566.3L419.8 565.6L419.8 565.6L420.0 565.5L420.1 565.5L420.3 565.4L420.4 565.4L420.6 565.3L420.6 565.3L422.3 565.1L422.4 565.0L422.6 565.0L422.7 565.0L422.9 565.0L423.1 565.0L423.3 565.0L423.4 565.0L423.6 565.1L423.7 565.1L425.5 565.5L425.5 565.5L425.7 565.6L425.9 565.6L426.1 565.7L426.2 565.7L426.4 565.8L426.5 565.9L428.4 566.9L428.5 567.0L428.7 567.2L428.8 567.2L429.8 568.0L431.4 564.7L431.8 563.9L431.8 563.8L431.9 563.7L431.9 563.7L432.0 563.6L433.3 560.9L433.2 560.8L433.1 560.8L432.9 560.7L432.9 560.6L432.2 560.1L432.1 560.1L432.0 560.0L432.0 559.9L431.3 559.3L431.3 559.2L431.2 559.1L431.1 559.1L430.5 558.4L430.5 558.3L430.4 558.2L430.4 558.2L429.8 557.4L429.8 557.4L429.7 557.3L429.7 557.2L429.1 556.3L429.1 556.3L429.0 556.3L429.0 556.2L428.5 555.3L428.5 555.2L428.4 555.2L428.4 555.1L427.9 554.1L427.8 554.0L427.8 554.0L427.8 553.9L427.3 552.8L427.3 552.7L427.2 552.7L426.4 552.4L426.3 552.4L426.2 552.4L426.0 552.3L425.9 552.3L425.8 552.2L425.7 552.1L425.5 552.1L425.4 552.0L425.3 551.9L425.2 551.8L425.1 551.7L425.0 551.6L424.9 551.5L424.8 551.4L424.8 551.3L424.7 551.2L424.6 551.0L424.6 550.9L424.5 550.8L424.5 550.7L424.4 550.5L424.4 550.4L424.3 550.3L424.3 550.1L424.3 550.0L424.3 549.9L424.3 549.7L424.3 549.6L424.3 549.4L424.3 549.3L424.3 549.2L424.4 549.0L424.4 548.9L424.5 548.8L424.5 548.6L424.6 548.5L424.6 548.4L424.7 548.3L424.8 548.2L424.8 548.1L424.9 547.9L425.0 547.8L425.1 547.7L425.2 547.6L425.3 547.6L425.4 547.5L425.5 547.4L425.6 547.3L425.8 547.3L425.9 547.2L426.0 547.1L426.1 547.1L426.3 547.0L426.4 547.0L426.5 547.0L426.7 547.0L426.8 546.9L426.9 546.9L427.1 546.9L427.2 546.9L427.3 546.9L427.5 546.9L427.6 547.0L427.7 547.0L427.8 547.0L428.7 547.2L428.7 547.2L428.8 547.2L428.8 547.1L420.9 541.9L416.8 542.5ZM463.1 602.7L463.3 620.1L475.6 631.1L475.5 629.7L475.5 629.7L475.5 629.6L475.5 629.6L475.4 623.8L475.4 623.7L475.4 623.6L475.4 623.6L475.5 618.9L475.5 618.9L475.6 618.7L475.6 618.7L475.9 614.6L475.9 614.6L475.9 614.4L475.9 614.4L476.4 610.7L476.4 610.6L476.4 610.6L476.4 610.5L477.0 607.0L477.0 606.9L477.0 606.9L477.0 606.9L477.7 603.3L478.5 599.4L479.0 596.5ZM470.0 497.0L472.1 501.0L475.7 504.2L488.9 508.7L499.0 504.0L491.5 475.8L491.5 475.8L491.3 475.8L491.2 475.8L491.1 475.8L491.0 475.8L490.2 475.8L489.9 475.8L489.9 475.8L489.8 475.9L489.8 476.0L489.0 476.9L488.9 477.0L488.9 477.0L488.9 477.1L488.0 477.9L488.0 478.0L488.0 478.0L487.9 478.0L487.1 478.8L487.1 478.9L487.0 478.9L487.0 478.9L486.2 479.6L486.1 479.7L486.1 479.7L486.0 479.8L485.2 480.4L485.2 480.4L485.1 480.5L485.0 480.5L484.2 481.0L484.1 481.1L484.0 481.1L484.0 481.2L483.2 481.6L483.1 481.6L483.0 481.7L482.9 481.7L482.1 482.1L482.0 482.1L481.8 482.2L481.7 482.2L480.9 482.4L480.8 482.4L480.8 482.4L480.8 482.5L480.8 482.5L481.3 483.3L481.3 483.4L481.4 483.5L481.4 483.6L481.8 484.4L481.8 484.5L481.9 484.6L481.9 484.7L482.2 485.6L482.2 485.7L482.2 485.8L482.2 485.8L482.4 486.8L482.4 486.9L482.4 487.0L482.5 487.0L482.6 488.0L482.6 488.1L482.6 488.2L482.6 488.2L482.7 489.3L482.7 489.3L482.7 489.4L482.7 489.5L482.7 490.6L482.7 490.6L482.7 490.7L482.7 490.7L482.7 492.0L482.7 492.0L482.7 492.1L482.7 492.1L482.6 493.4L482.6 493.5L482.6 493.6L482.6 493.6L483.3 494.4L483.4 494.4L483.5 494.5L483.5 494.6L483.6 494.7L483.7 494.8L483.8 495.0L483.8 495.1L483.9 495.2L483.9 495.3L484.0 495.5L484.0 495.6L484.1 495.7L484.1 495.9L484.1 496.0L484.1 496.1L484.1 496.3L484.1 496.4L484.1 496.5L484.1 496.7L484.1 496.8L484.1 496.9L484.0 497.1L484.0 497.2L483.9 497.3L483.9 497.5L483.8 497.6L483.8 497.7L483.7 497.8L483.6 497.9L483.5 498.1L483.5 498.2L483.4 498.3L483.3 498.4L483.2 498.5L483.1 498.5L482.9 498.6L482.8 498.7L482.7 498.8L482.6 498.8L482.5 498.9L482.3 498.9L482.2 499.0L482.1 499.0L481.9 499.1L481.8 499.1L481.7 499.1L481.5 499.1L481.4 499.1L481.3 499.1L481.1 499.1L481.0 499.1L480.9 499.1L480.7 499.1L480.6 499.0L480.5 499.0L480.3 498.9L480.2 498.9L480.1 498.8L480.0 498.8L479.8 498.7L479.7 498.6L479.6 498.5L479.5 498.5L479.4 498.4L479.4 498.3L478.6 497.6L478.6 497.6L478.5 497.6L478.4 497.6L477.1 497.7L477.1 497.7L477.0 497.7L477.0 497.7L475.7 497.7L475.7 497.7L475.6 497.7L475.6 497.7L474.5 497.7L474.4 497.7L474.3 497.7L474.3 497.7L473.2 497.6L473.2 497.6L473.1 497.6L473.0 497.6L472.0 497.5L472.0 497.4L471.9 497.4L471.8 497.4L470.8 497.2L470.8 497.2L470.7 497.2L470.6 497.2ZM480.8 463.6L480.8 463.6L480.9 463.6L481.7 463.8L481.8 463.8L482.0 463.9L482.1 463.9L482.9 464.3L483.0 464.3L483.1 464.4L483.2 464.4L484.0 464.8L484.0 464.9L484.1 464.9L484.2 465.0L485.0 465.5L485.1 465.5L485.2 465.6L485.2 465.6L486.0 466.2L486.1 466.3L486.1 466.3L486.2 466.4L487.0 467.1L487.0 467.1L487.1 467.1L487.1 467.2L487.9 468.0L488.0 468.0L488.0 468.0L488.0 468.1L488.9 468.9L488.9 469.0L488.9 469.0L489.0 469.1L489.8 470.0L489.8 470.1L489.9 470.2L489.9 470.2L490.0 470.2L486.1 455.7L482.7 456.7L482.7 456.7L482.6 457.8L482.6 457.8L482.6 457.9L482.6 458.0L482.5 459.0L482.4 459.0L482.4 459.1L482.4 459.2L482.2 460.2L482.2 460.2L482.2 460.3L482.2 460.4L481.9 461.3L481.9 461.4L481.8 461.5L481.8 461.6L481.4 462.4L481.4 462.5L481.3 462.6L481.3 462.7L480.8 463.5L480.8 463.5ZM463.3 483.6L463.7 484.4L463.8 483.5L463.8 483.4L463.9 483.3L463.9 483.2L463.9 483.2L463.7 483.3L463.6 483.4L463.5 483.4L463.4 483.5ZM468.2 478.9L468.2 478.9L468.3 478.9L468.4 478.8L468.5 478.8L469.9 478.6L470.0 478.6L470.1 478.6L470.2 478.5L471.2 478.5L470.5 477.7L470.5 477.6L470.4 477.5L470.4 477.5L469.5 476.3L469.5 476.3L469.5 476.2L469.4 476.1L469.4 476.1L469.3 476.3L469.3 476.4L469.3 476.5L469.2 476.6L469.0 477.4L468.9 477.5L468.9 477.6L468.8 477.6L468.5 478.4L468.4 478.5L468.4 478.6L468.3 478.7ZM469.4 469.9L469.4 469.9L469.5 469.8L469.5 469.7L469.5 469.7L470.4 468.5L470.4 468.5L470.5 468.4L470.5 468.3L471.2 467.5L470.2 467.5L470.1 467.4L470.0 467.4L469.9 467.4L468.5 467.2L468.4 467.2L468.3 467.1L468.2 467.1L468.2 467.1L468.3 467.3L468.4 467.4L468.4 467.5L468.5 467.6L468.8 468.4L468.9 468.4L468.9 468.5L469.0 468.6L469.2 469.4L469.3 469.5L469.3 469.6L469.3 469.7ZM481.1 585.0L481.2 584.8L481.2 584.8L481.2 584.7L481.2 584.7L482.2 580.1L482.2 580.0L482.2 579.9L482.3 579.9L483.3 576.0L483.3 575.9L483.4 575.7L483.4 575.7L484.4 572.9L484.5 572.9L484.5 572.7L484.6 572.5L484.7 572.3L484.8 572.2L484.9 572.0L485.0 572.0L486.0 570.7L486.0 570.7L486.2 570.5L486.2 570.4L486.4 570.3L486.5 570.2L486.7 570.1L486.8 570.0L486.9 569.9L487.1 569.8L487.2 569.7L487.4 569.6L487.5 569.6L487.7 569.5L487.9 569.5L488.0 569.4L488.2 569.4L488.3 569.4L488.5 569.4L488.6 569.4L489.6 569.3L489.7 569.3L489.9 569.3L490.0 569.3L490.2 569.3L490.3 569.3L490.6 569.4L490.7 569.4L490.9 569.5L491.0 569.5L491.2 569.6L491.3 569.6L491.5 569.7L491.6 569.8L491.8 569.9L491.9 569.9L492.9 570.7L492.9 570.7L493.1 570.8L493.2 570.9L493.3 571.0L493.4 571.1L494.1 571.8L494.4 571.5L495.8 570.3L495.8 570.2L496.0 570.1L496.1 570.0L496.3 569.9L496.3 569.9L497.7 569.1L497.7 569.0L497.9 568.9L498.1 568.9L498.3 568.8L498.4 568.7L498.7 568.7L498.8 568.6L499.0 568.6L499.2 568.6L499.4 568.6L499.5 568.5L499.8 568.6L499.9 568.6L500.2 568.6L500.2 568.6L501.3 568.8L501.4 568.8L501.6 568.9L501.8 568.9L502.0 569.0L502.1 569.1L502.3 569.2L502.4 569.2L502.6 569.3L502.7 569.4L502.9 569.5L503.0 569.6L503.2 569.8L503.3 569.9L503.4 570.0L503.5 570.2L503.6 570.3L503.7 570.4L503.8 570.6L503.9 570.8L504.0 571.0L504.0 571.0L504.7 572.9L504.8 572.9L504.8 573.1L504.9 573.3L504.9 573.5L505.0 573.6L505.0 573.9L505.0 573.9L505.3 577.6L505.3 577.6L505.3 577.9L505.3 577.9L505.2 583.0L505.2 583.0L505.2 583.1L505.2 583.1L504.8 589.2L504.8 589.2L504.8 589.2L504.8 589.2L504.7 591.2L524.5 577.5L486.4 558.7L486.3 558.8L486.3 558.8L486.9 559.7L486.9 559.7L487.0 559.7L487.0 559.8L487.5 560.7L487.5 560.8L487.6 560.8L487.6 560.9L488.1 561.9L488.2 562.0L488.2 562.0L488.2 562.1L488.7 563.2L488.7 563.3L488.8 563.3L489.6 563.6L489.7 563.6L489.8 563.6L490.0 563.7L490.1 563.7L490.2 563.8L490.3 563.9L490.5 563.9L490.6 564.0L490.7 564.1L490.8 564.2L490.9 564.3L491.0 564.4L491.1 564.5L491.2 564.6L491.2 564.7L491.3 564.8L491.4 565.0L491.4 565.1L491.5 565.2L491.5 565.3L491.6 565.5L491.6 565.6L491.7 565.7L491.7 565.9L491.7 566.0L491.7 566.1L491.7 566.3L491.7 566.4L491.7 566.6L491.7 566.7L491.7 566.8L491.6 567.0L491.6 567.1L491.5 567.2L491.5 567.4L491.4 567.5L491.4 567.6L491.3 567.7L491.2 567.8L491.2 567.9L491.1 568.1L491.0 568.2L490.9 568.3L490.8 568.4L490.7 568.4L490.6 568.5L490.5 568.6L490.4 568.7L490.2 568.7L490.1 568.8L490.0 568.9L489.9 568.9L489.7 569.0L489.6 569.0L489.5 569.0L489.3 569.0L489.2 569.1L489.1 569.1L488.9 569.1L488.8 569.1L488.7 569.1L488.5 569.1L488.4 569.0L488.3 569.0L488.2 569.0L487.3 568.8L487.3 568.8L487.2 568.8L486.2 569.6L486.2 569.6L486.1 569.6L486.1 569.7L485.1 570.3L485.0 570.3L485.0 570.4L484.9 570.4L484.0 570.9L483.9 571.0L483.9 571.0L483.8 571.0L482.9 571.5L482.9 571.5L482.8 571.6L482.7 571.6L481.8 572.0L481.8 572.0L481.7 572.0L481.6 572.1L481.2 572.2ZM452.0 531.7L452.1 531.8L452.2 531.8L452.3 531.9L452.3 531.9L453.1 532.3L453.2 532.4L453.3 532.5L453.4 532.5L454.0 533.0L454.1 533.1L454.2 533.2L454.3 533.3L454.8 533.7L455.2 533.2L455.2 533.1L455.3 532.9L455.4 532.9L455.9 532.2L455.9 532.1L456.0 532.0L456.1 532.0L456.7 531.3L456.8 531.3L456.9 531.2L456.9 531.1L457.6 530.5L457.7 530.5L457.8 530.4L457.8 530.4L458.6 529.8L458.6 529.8L458.7 529.7L458.8 529.7L459.7 529.1L459.7 529.1L459.7 529.0L459.8 529.0L460.7 528.5L460.8 528.5L460.8 528.4L460.9 528.4L461.9 527.9L462.0 527.8L462.0 527.8L462.1 527.8L463.2 527.3L463.3 527.3L463.3 527.2L463.4 527.1L463.6 526.4L463.6 526.3L463.6 526.2L463.7 526.0L463.7 525.9L463.8 525.8L463.9 525.7L463.9 525.6L464.0 525.5L464.1 525.4L464.2 525.2L464.3 525.1L464.4 525.1L464.5 525.0L464.6 524.9L464.7 524.8L464.8 524.7L464.9 524.7L465.0 524.6L465.1 524.5L465.3 524.5L465.4 524.4L465.5 524.4L465.7 524.4L465.8 524.3L465.9 524.3L466.1 524.3L466.2 524.3L466.3 524.3L466.5 524.3L466.6 524.3L466.7 524.3L466.9 524.4L467.0 524.4L467.1 524.4L467.3 524.5L467.4 524.5L467.5 524.6L467.6 524.6L467.8 524.7L467.9 524.8L468.0 524.9L468.1 525.0L468.2 525.1L468.3 525.2L468.4 525.3L468.5 525.4L468.6 525.5L468.6 525.6L468.7 525.7L468.8 525.8L468.8 526.0L468.9 526.1L468.9 526.2L469.0 526.4L469.0 526.5L469.0 526.6L469.1 526.8L469.1 526.9L469.1 527.1L469.1 527.2L469.1 527.3L469.1 527.5L469.0 527.6L469.0 527.7L469.0 527.8L468.8 528.6L468.8 528.7L468.8 528.7L468.8 528.8L469.6 529.8L469.6 529.8L469.6 529.9L469.7 529.9L470.3 530.9L470.3 531.0L470.4 531.0L470.4 531.1L470.9 532.0L471.0 532.1L471.0 532.1L471.0 532.2L471.5 533.1L471.5 533.1L471.6 533.2L471.6 533.3L472.0 534.2L472.0 534.2L472.0 534.3L472.1 534.4L472.4 535.3L472.4 535.3L472.4 535.5L472.5 535.5L472.7 536.4L472.7 536.5L472.7 536.6L472.7 536.7L472.9 537.5L472.9 537.6L472.9 537.8L472.9 537.9L472.9 538.6L473.6 538.4L473.6 538.4L473.8 538.4L473.9 538.4L474.8 538.3L474.8 538.2L475.0 538.2L475.1 538.2L476.0 538.2L476.0 538.2L476.2 538.2L476.2 538.2L477.2 538.3L477.2 538.3L477.3 538.3L477.4 538.3L478.4 538.5L478.4 538.5L478.5 538.5L478.6 538.5L479.6 538.7L479.6 538.7L479.7 538.8L479.7 538.8L480.8 539.1L480.9 539.1L480.9 539.1L481.0 539.1L482.1 539.5L482.1 539.5L482.2 539.5L482.2 539.5L483.4 540.0L483.5 540.0L483.5 540.0L483.6 540.0L484.3 539.6L484.4 539.5L484.5 539.5L484.6 539.4L484.8 539.4L484.9 539.3L485.0 539.3L485.2 539.3L485.3 539.2L485.4 539.2L485.6 539.2L485.7 539.2L485.8 539.2L486.0 539.2L486.1 539.2L486.3 539.3L486.4 539.3L486.5 539.3L486.7 539.4L486.8 539.4L486.9 539.5L487.0 539.5L487.2 539.6L487.3 539.7L487.4 539.8L487.5 539.8L487.6 539.9L487.7 540.0L487.8 540.1L487.8 540.2L487.6 511.2L475.3 507.0ZM487.9 543.8L487.8 543.9L487.7 544.0L487.6 544.1L487.5 544.2L487.4 544.2L487.3 544.3L487.2 544.4L487.1 544.4L486.4 544.8L486.3 544.9L486.3 545.0L486.3 545.0L486.1 546.3L486.1 546.3L486.1 546.4L486.1 546.4L485.8 547.6L485.8 547.6L485.8 547.7L485.8 547.7L485.5 548.8L485.5 548.8L485.5 548.9L485.5 548.9L485.2 549.9L485.1 550.0L485.1 550.1L485.1 550.1L484.7 551.0L484.7 551.1L484.7 551.2L484.6 551.2L484.2 552.1L484.2 552.2L484.1 552.3L484.1 552.3L483.7 553.1L483.6 553.2L483.5 553.3L483.5 553.4L483.0 554.0L482.9 554.1L482.8 554.2L482.7 554.3L482.3 554.8L482.8 555.2L482.9 555.2L483.1 555.3L483.1 555.4L483.8 555.9L483.9 555.9L484.0 556.0L484.0 556.1L484.5 556.6L484.9 556.2L487.9 546.4ZM447.8 552.1L448.1 551.6L448.2 551.5L448.2 551.4L448.3 551.3L448.8 550.6L448.8 550.6L448.9 550.5L449.0 550.4L449.6 549.8L449.6 549.7L449.6 549.7L449.5 549.7L449.5 549.7L448.0 549.6L448.0 549.6L447.9 549.6L447.8 549.6L446.8 549.4L447.2 550.3L447.2 550.4L447.3 550.5L447.3 550.6L447.8 551.9L447.8 552.0L447.8 552.1ZM455.0 546.6L455.6 546.5L455.6 546.4L455.8 546.4L455.8 546.4L456.7 546.3L456.8 546.3L456.9 546.3L457.0 546.2L457.9 546.2L457.9 546.2L457.9 546.2L457.9 546.1L457.8 546.1L456.9 545.0L456.9 545.0L456.8 544.9L456.7 544.8L456.2 544.0L455.8 545.0L455.8 545.0L455.7 545.1L455.7 545.2L455.1 546.5L455.1 546.5L455.0 546.6ZM463.9 547.8L464.4 548.1L464.5 548.2L464.6 548.2L464.7 548.3L465.4 548.8L465.4 548.8L465.5 548.9L465.6 549.0L466.2 549.6L466.3 549.6L466.3 549.6L466.3 549.5L466.3 549.5L466.4 548.0L466.4 548.0L466.4 547.9L466.4 547.8L466.6 546.8L465.7 547.2L465.6 547.2L465.5 547.3L465.4 547.3L464.1 547.8L464.0 547.8L463.9 547.8ZM469.4 555.0L469.5 555.6L469.6 555.6L469.6 555.8L469.6 555.8L469.7 556.7L469.7 556.8L469.7 556.9L469.8 557.0L469.8 557.9L469.8 557.9L469.8 557.9L469.9 557.9L469.9 557.8L471.0 556.9L471.0 556.9L471.1 556.8L471.2 556.7L472.0 556.2L471.0 555.8L471.0 555.8L470.9 555.7L470.8 555.7L469.5 555.1L469.5 555.1L469.4 555.0ZM450.5 603.0L451.7 607.0L451.7 607.0L451.7 607.1L451.7 607.1L452.8 611.4L452.8 611.4L452.8 611.5L452.8 611.5L453.7 615.8L453.7 615.8L453.8 615.9L453.8 615.9L454.6 620.3L455.5 624.6L460.5 620.2L460.3 603.0L453.7 602.2ZM373.7 516.2L372.7 522.6L374.7 527.1L411.6 538.3L390.8 516.3L378.7 513.9L378.7 514.0L378.7 514.2L378.7 514.3L378.7 514.5L378.7 514.6L378.7 514.7L378.6 514.9L378.6 515.0L378.6 515.1L378.5 515.3L378.5 515.4L378.4 515.5L378.4 515.7L378.3 515.8L378.2 515.9L378.2 516.0L378.1 516.1L378.0 516.2L377.9 516.4L377.8 516.4L377.7 516.5L377.6 516.6L377.4 516.7L377.3 516.8L377.2 516.9L377.1 516.9L376.9 517.0L376.8 517.0L376.7 517.1L376.6 517.1L376.4 517.1L376.3 517.1L376.2 517.2L376.0 517.2L375.9 517.2L375.8 517.2L375.6 517.2L375.5 517.1L375.4 517.1L375.2 517.1L375.1 517.1L375.0 517.0L374.9 517.0L374.7 516.9L374.6 516.9L374.5 516.8L374.4 516.7L374.3 516.7L374.2 516.6L374.1 516.5L374.0 516.4L373.9 516.3L373.8 516.2ZM438.7 577.7L440.0 579.6L440.0 579.6L440.1 579.7L440.1 579.8L441.9 582.9L442.0 582.9L442.0 583.0L442.0 583.0L443.8 586.5L443.9 586.5L443.9 586.6L443.9 586.7L445.7 590.4L445.7 590.4L445.7 590.5L445.7 590.5L447.4 594.4L447.4 594.4L447.4 594.5L447.4 594.5L449.0 598.6L449.0 598.6L449.0 598.6L449.0 598.7L449.6 600.3L452.0 599.7L450.4 591.6L450.3 591.6L450.2 591.7L450.1 591.7L449.9 591.7L449.8 591.7L449.7 591.7L449.5 591.7L449.4 591.7L449.3 591.7L449.1 591.6L449.0 591.6L448.9 591.6L448.7 591.5L448.6 591.5L448.5 591.4L448.4 591.4L448.2 591.3L448.1 591.2L448.0 591.1L447.9 591.0L447.8 590.9L447.7 590.8L447.6 590.7L447.5 590.6L447.4 590.5L447.4 590.4L447.3 590.3L447.2 590.2L447.2 590.0L447.1 589.9L447.1 589.8L447.0 589.6L447.0 589.5L447.0 589.4L446.9 589.2L446.9 589.1L446.9 588.9L446.9 588.8L446.9 588.7L446.9 588.5L447.0 588.4L447.0 588.3L447.0 588.2L447.2 587.4L447.2 587.3L447.2 587.3L447.2 587.2L446.4 586.2L446.4 586.2L446.4 586.1L446.3 586.1L445.7 585.1L445.7 585.0L445.6 585.0L445.6 584.9L445.1 584.0L445.0 583.9L445.0 583.9L445.0 583.8L444.5 582.9L444.5 582.9L444.4 582.8L444.4 582.7L444.0 581.8L444.0 581.8L444.0 581.7L443.9 581.6L443.6 580.7L443.6 580.7L443.6 580.5L443.5 580.5L443.3 579.6L443.3 579.5L443.3 579.4L443.3 579.3L443.1 578.5L443.1 578.4L443.1 578.2L443.1 578.1L443.1 577.4L442.4 577.6L442.4 577.6L442.2 577.6L442.1 577.6L441.2 577.7L441.2 577.8L441.0 577.8L440.9 577.8L440.0 577.8L440.0 577.8L439.8 577.8L439.8 577.8L438.8 577.7L438.8 577.7ZM444.0 559.8L444.2 559.9L444.2 559.7ZM289.8 537.2L290.1 540.5L290.1 540.6L290.1 540.8L290.1 540.9L290.1 544.5L290.1 544.6L290.1 544.8L290.1 544.9L290.1 545.0L290.1 545.1L289.9 546.1L294.9 545.9L294.9 545.7L295.0 545.7L294.9 545.6L294.5 545.0L294.5 545.0L294.4 544.9L294.3 544.7L294.3 544.6L294.2 544.5L294.2 544.4L294.1 544.2L294.1 544.1L294.0 544.0L294.0 543.8L294.0 543.7L294.0 543.6L294.0 543.4L294.0 543.3L294.0 543.2L294.0 543.0L294.0 542.9L294.1 542.8L294.1 542.6L294.2 542.5L294.2 542.4L294.3 542.2L294.3 542.1L294.4 542.0L294.5 541.9L294.5 541.8L294.6 541.7L294.7 541.6L294.8 541.5L294.9 541.4L295.0 541.3L295.1 541.2L295.2 541.1L295.3 541.0L295.5 541.0L295.6 540.9L295.7 540.8L295.8 540.8L296.0 540.8L296.1 540.7L296.2 540.7L296.4 540.7L296.5 540.6L296.6 540.6L296.8 540.6L296.9 540.6L297.1 540.6L297.2 540.7L297.3 540.7L297.5 540.7L297.6 540.7L297.7 540.8L297.9 540.8L298.0 540.9L298.1 541.0L298.2 541.0L298.3 541.1L298.5 541.2L298.6 541.3L298.7 541.4L298.8 541.4L298.9 541.5L299.0 541.7L299.0 541.8L299.1 541.8L299.5 542.4L299.5 542.5L299.6 542.5L300.8 542.6L300.8 542.6L300.9 542.6L300.9 542.6L302.0 542.7L302.1 542.7L302.1 542.8L302.2 542.8L303.2 543.0L303.2 543.0L303.3 543.0L303.3 543.0L304.3 543.2L304.4 543.2L304.4 543.3L304.5 543.3L305.4 543.5L305.4 543.6L305.5 543.6L305.6 543.6L306.4 543.9L306.5 544.0L306.6 544.0L306.6 544.0L307.4 544.4L307.5 544.5L307.6 544.5L307.7 544.6L308.4 545.0L308.4 545.1L308.6 545.2L308.6 545.2L308.8 545.4L309.1 545.4L309.2 545.1L309.3 545.0L309.3 544.8L309.4 544.8L309.8 544.1L309.9 544.0L310.0 543.9L310.0 543.8L310.5 543.2L310.6 543.1L310.7 543.0L310.7 543.0L311.3 542.3L311.4 542.3L311.4 542.2L311.5 542.2L312.2 541.6L312.2 541.5L312.3 541.5L312.3 541.5L313.1 540.8L313.1 540.8L313.2 540.8L313.2 540.7L314.1 540.1L314.1 540.1L314.1 540.1L314.2 540.1L315.1 539.5L315.1 539.4L315.2 539.4L315.2 539.4L316.3 538.8L316.3 538.8L316.3 538.7L316.5 538.0L316.5 537.9L316.5 537.8L316.5 537.6L316.6 537.5L316.6 537.4L316.7 537.2L316.8 537.1L316.8 537.0L316.9 536.9L317.0 536.7L317.1 536.6L317.2 536.5L317.3 536.4L317.4 536.3L317.5 536.2L317.6 536.2L317.7 536.1L317.8 536.0L318.0 535.9L318.1 535.9L318.2 535.8L318.4 535.8L318.5 535.7L318.6 535.7L318.8 535.7L318.9 535.7L319.1 535.7L319.2 535.7L319.3 535.7L319.5 535.7L319.6 535.7L319.8 535.7L319.9 535.7L320.0 535.8L320.1 535.8L320.3 535.9L320.4 535.9L320.5 536.0L320.6 536.0L320.7 536.1L320.8 536.2L321.0 536.3L321.1 536.4L321.2 536.4L321.2 536.5L321.3 536.6L321.4 536.7L321.5 536.8L321.6 537.0L321.6 537.1L321.7 537.2L321.8 537.3L321.8 537.4L321.9 537.6L321.9 537.7L321.9 537.8L322.0 537.9L322.0 538.1L322.0 538.2L322.0 538.3L322.0 538.5L322.0 538.6L322.0 538.7L322.0 538.9L322.0 538.9L321.8 539.7L321.8 539.7L321.9 539.8L322.6 540.7L322.7 540.7L322.7 540.8L322.7 540.8L323.4 541.7L323.4 541.7L323.5 541.8L323.5 541.8L324.1 542.7L324.1 542.7L324.1 542.7L324.1 542.8L324.7 543.6L324.7 543.7L324.7 543.7L324.8 543.8L325.2 544.6L325.2 544.7L325.2 544.7L332.2 544.4L339.3 539.7L338.9 538.7L338.9 538.7L338.9 538.5L338.8 538.5L338.5 537.2L338.5 537.1L338.5 537.0L338.5 536.9L338.3 535.7L338.3 535.6L338.3 535.5L338.3 535.4L338.2 534.1L338.2 534.1L338.2 533.9L338.2 533.9L338.3 532.6L338.3 532.5L338.3 532.4L338.3 532.3L338.5 531.2L330.5 519.0L326.8 516.1ZM501.1 506.1L490.4 511.0L490.7 545.2L550.4 545.2L551.4 544.1L552.5 542.7L505.8 504.8ZM504.4 594.7L504.4 596.0L504.1 600.6L520.7 616.3L521.1 614.5L521.1 614.5L521.1 614.5L521.1 614.5L522.9 606.5L524.5 599.3L525.6 592.8L526.7 586.5L526.7 586.5L526.7 586.5L526.7 586.5L527.9 580.5L527.9 580.5L527.9 580.4L527.9 580.4L528.3 578.8L527.7 578.8ZM424.8 531.8L423.2 535.3L422.7 539.8L431.4 545.4L432.0 545.1L432.1 545.0L432.1 545.0L432.2 545.0L433.1 544.5L433.1 544.5L433.2 544.4L433.3 544.4L434.2 544.0L434.2 544.0L434.3 544.0L434.4 543.9L435.3 543.6L435.3 543.6L435.5 543.6L435.5 543.5L436.4 543.3L436.5 543.3L436.6 543.3L436.7 543.3L437.4 543.2L438.4 542.1L438.4 542.1L438.3 541.2L438.2 541.2L438.2 541.0L438.2 540.9L438.2 540.0L438.2 540.0L438.2 539.8L438.2 539.8L438.3 538.8L438.3 538.8L438.3 538.7L438.3 538.6L438.5 537.6L438.5 537.6L438.5 537.5L438.5 537.4L438.7 536.4L438.7 536.4L438.8 536.3L438.8 536.3L439.1 535.2L439.1 535.1L439.1 535.1L439.1 535.0L439.5 533.9L439.5 533.9L439.5 533.8L439.5 533.8L440.0 532.6L440.0 532.5L440.0 532.5L440.0 532.4L439.6 531.7L439.5 531.6L439.5 531.5L439.4 531.4L439.4 531.3L439.3 531.1L439.3 531.0L439.3 530.9L439.2 530.7L439.2 530.6L439.2 530.5L439.2 530.3L439.2 530.2L439.2 530.1L439.2 529.9L439.2 529.8L439.3 529.7L439.3 529.5L439.3 529.4L439.4 529.3L439.4 529.2L439.5 529.0L439.6 528.9L439.6 528.8L439.7 528.7L439.8 528.6L439.9 528.5L439.9 528.4L440.0 528.3L440.1 528.2L440.2 528.1L440.3 528.0L440.5 528.0L440.6 527.9L440.7 527.8L440.8 527.8L440.9 527.7L441.1 527.6L441.2 527.6L441.3 527.6L441.5 527.5L441.6 527.5L441.8 527.5L441.9 527.5L442.0 527.5L442.2 527.5L442.3 527.5L442.5 527.5L442.6 527.6L442.7 527.6L442.9 527.6L443.0 527.7L443.1 527.7L443.3 527.8L443.4 527.9L443.5 527.9L443.6 528.0L443.7 528.1L443.8 528.2L443.9 528.3L444.0 528.4L444.1 528.5L444.2 528.6L444.3 528.7L444.4 528.8L444.4 528.9L444.8 529.6L444.9 529.7L445.0 529.7L445.0 529.7L446.3 529.9L446.3 529.9L446.4 529.9L446.4 529.9L447.6 530.2L447.6 530.2L447.7 530.2L447.7 530.2L448.8 530.5L448.8 530.5L448.9 530.5L448.9 530.5L449.2 530.6L472.9 505.5L470.5 503.4L460.8 505.2L460.8 506.0L460.8 506.1L460.8 506.2L460.8 506.3L460.8 506.5L460.7 506.6L460.7 506.7L460.7 506.9L460.6 507.0L460.6 507.1L460.5 507.3L460.4 507.4L460.4 507.5L460.3 507.6L460.2 507.7L460.1 507.8L460.0 507.9L459.9 508.0L459.8 508.1L459.7 508.2L459.6 508.3L459.5 508.4L459.4 508.4L459.3 508.5L459.1 508.6L459.0 508.6L458.9 508.7L458.7 508.7L458.6 508.7L458.5 508.8L458.3 508.8L458.2 508.8L458.1 508.8L457.9 508.8L457.8 508.8L457.7 508.8L457.5 508.8L457.4 508.7L457.3 508.7L457.1 508.7L457.0 508.6L456.9 508.6L456.7 508.5L456.6 508.4L456.5 508.4L456.4 508.3L456.3 508.2L456.2 508.1L456.1 508.0L456.0 507.9L455.9 507.8L455.8 507.7L455.7 507.6L455.6 507.5L455.6 507.4L455.5 507.3L455.4 507.1L455.4 507.0L455.3 506.9L455.3 506.7L455.3 506.6L455.2 506.5L455.2 506.3L455.2 506.2L455.2 506.2L438.3 509.3L438.5 509.8L438.6 509.9L438.6 510.0L438.6 510.1L439.1 511.3L439.1 511.3L439.1 511.5L439.2 511.5L439.5 512.8L439.5 512.9L439.5 513.0L439.5 513.1L439.7 514.3L439.7 514.4L439.7 514.5L439.7 514.6L439.8 515.9L439.8 515.9L439.8 516.1L439.8 516.1L439.7 517.4L439.7 517.5L439.7 517.6L439.7 517.7L439.5 518.9L439.5 519.0L439.5 519.1L439.5 519.2L439.2 520.5L439.1 520.5L439.1 520.7L439.1 520.7L438.6 521.9L438.6 522.0L438.6 522.1L438.5 522.2L438.0 523.3L438.0 523.4L437.9 523.5L437.9 523.6L437.2 524.7L437.2 524.7L437.1 524.8L437.1 524.9L436.3 525.9L436.3 526.0L436.2 526.1L436.1 526.1L435.3 527.1L435.2 527.1L435.1 527.2L435.1 527.3L434.1 528.1L434.1 528.2L434.0 528.3L433.9 528.3L432.9 529.1L432.8 529.1L432.7 529.2L432.7 529.2L431.6 529.9L431.5 529.9L431.4 530.0L431.3 530.0L430.2 530.5L430.1 530.6L430.0 530.6L429.9 530.6L428.7 531.1L428.7 531.1L428.5 531.1L428.5 531.2L427.2 531.5L427.1 531.5L427.0 531.5L426.9 531.5L425.7 531.7L425.6 531.7L425.5 531.7L425.4 531.7ZM352.8 549.7L363.2 566.0L365.2 565.4L365.2 565.3L365.3 565.3L365.3 565.3L370.2 564.1L374.8 562.9L375.6 562.6L372.3 528.6L370.6 524.7L367.8 526.2L367.9 526.4L367.9 526.5L368.0 526.6L368.0 526.7L368.5 527.8L368.6 527.9L368.6 528.0L368.6 528.1L369.1 529.3L369.1 529.3L369.1 529.5L369.2 529.5L369.5 530.8L369.5 530.9L369.5 531.0L369.5 531.1L369.7 532.3L369.7 532.4L369.7 532.5L369.7 532.6L369.8 533.9L369.8 533.9L369.8 534.1L369.8 534.1L369.7 535.4L369.7 535.5L369.7 535.6L369.7 535.7L369.5 536.9L369.5 537.0L369.5 537.1L369.5 537.2L369.2 538.5L369.1 538.5L369.1 538.7L369.1 538.7L368.6 539.9L368.6 540.0L368.6 540.1L368.5 540.2L368.0 541.3L368.0 541.4L367.9 541.5L367.9 541.6L367.2 542.7L367.2 542.7L367.1 542.8L367.1 542.9L366.3 543.9L366.3 544.0L366.2 544.1L366.1 544.1L365.3 545.1L365.2 545.1L365.1 545.2L365.1 545.3L364.1 546.1L364.1 546.2L364.0 546.3L363.9 546.3L362.9 547.1L362.8 547.1L362.7 547.2L362.7 547.2L361.6 547.9L361.5 547.9L361.4 548.0L361.3 548.0L360.2 548.5L360.1 548.6L360.0 548.6L359.9 548.6L358.7 549.1L358.7 549.1L358.5 549.1L358.5 549.2L357.2 549.5L357.1 549.5L357.0 549.5L356.9 549.5L355.7 549.7L355.6 549.7L355.5 549.7L355.4 549.7L354.1 549.8L354.1 549.8L353.9 549.8L353.9 549.8ZM323.6 489.7L292.0 498.8L291.5 500.9L291.5 500.9L291.5 500.9L291.5 500.9L290.5 504.5L289.6 507.8L288.9 510.8L288.3 513.8L287.8 516.8L287.6 520.1L287.7 523.6L288.2 527.6L289.0 531.9L289.0 531.9L289.0 532.0L289.0 532.0L289.3 534.3L325.6 513.6L328.1 494.2ZM464.2 501.7L468.9 500.9L467.0 497.2L466.7 497.9L466.7 498.0L466.6 498.1L466.6 498.2L466.2 499.0L466.1 499.0L466.1 499.1L466.0 499.2L465.5 500.0L465.5 500.1L465.4 500.2L465.4 500.2L464.8 501.0L464.7 501.1L464.7 501.1L464.6 501.2ZM452.1 483.2L452.1 483.2L452.1 483.3L452.2 483.4L452.2 483.5L452.4 484.9L452.4 485.0L452.4 485.1L452.5 485.2L452.5 486.2L453.3 485.5L453.4 485.5L453.5 485.4L453.5 485.4L454.7 484.5L454.7 484.5L454.8 484.5L454.9 484.4L454.9 484.4L454.7 484.3L454.6 484.3L454.5 484.3L454.4 484.2L453.6 484.0L453.5 483.9L453.4 483.9L453.4 483.8L452.6 483.5L452.5 483.4L452.4 483.4L452.3 483.3ZM418.7 473.7L417.7 485.9L430.2 501.5L431.3 502.0L431.4 502.0L431.5 502.1L431.6 502.1L432.7 502.8L432.7 502.8L432.8 502.9L432.9 502.9L433.9 503.7L434.0 503.7L434.1 503.8L434.1 503.9L435.1 504.7L435.1 504.8L435.2 504.9L435.3 504.9L436.1 505.9L436.2 505.9L436.3 506.0L436.3 506.1L436.8 506.7L453.7 503.6L453.1 503.0L453.0 503.0L453.0 503.0L453.0 502.9L452.2 502.1L452.1 502.1L452.1 502.0L452.1 502.0L451.4 501.2L451.3 501.1L451.3 501.1L451.2 501.0L450.6 500.2L450.6 500.2L450.5 500.1L450.5 500.0L450.0 499.2L449.9 499.1L449.9 499.0L449.8 499.0L449.4 498.2L449.4 498.1L449.3 498.0L449.3 497.9L448.9 497.1L448.9 497.0L448.8 496.8L448.8 496.7L448.6 495.9L448.6 495.8L448.6 495.8L448.5 495.8L448.5 495.8L447.7 496.3L447.6 496.3L447.5 496.4L447.4 496.4L446.6 496.8L446.5 496.8L446.4 496.9L446.3 496.9L445.4 497.2L445.3 497.2L445.2 497.2L445.2 497.2L444.2 497.4L444.1 497.4L444.0 497.4L444.0 497.5L443.0 497.6L442.9 497.6L442.8 497.6L442.8 497.6L441.7 497.7L441.7 497.7L441.6 497.7L441.5 497.7L440.4 497.7L440.4 497.7L440.3 497.7L440.3 497.7L439.0 497.7L439.0 497.7L438.9 497.7L438.9 497.7L437.6 497.6L437.5 497.6L437.4 497.6L437.4 497.6L436.6 498.3L436.6 498.4L436.5 498.5L436.4 498.5L436.3 498.6L436.2 498.7L436.0 498.8L435.9 498.8L435.8 498.9L435.7 498.9L435.5 499.0L435.4 499.0L435.3 499.1L435.1 499.1L435.0 499.1L434.9 499.1L434.7 499.1L434.6 499.1L434.5 499.1L434.3 499.1L434.2 499.1L434.1 499.1L433.9 499.0L433.8 499.0L433.7 498.9L433.5 498.9L433.4 498.8L433.3 498.8L433.2 498.7L433.1 498.6L432.9 498.5L432.8 498.5L432.7 498.4L432.6 498.3L432.5 498.2L432.5 498.1L432.4 497.9L432.3 497.8L432.2 497.7L432.2 497.6L432.1 497.5L432.1 497.3L432.0 497.2L432.0 497.1L431.9 496.9L431.9 496.8L431.9 496.7L431.9 496.5L431.9 496.4L431.9 496.3L431.9 496.1L431.9 496.0L431.9 495.9L431.9 495.7L432.0 495.6L432.0 495.5L432.1 495.3L432.1 495.2L432.2 495.1L432.2 495.0L432.3 494.8L432.4 494.7L432.5 494.6L432.5 494.5L432.6 494.4L432.7 494.4L433.4 493.6L433.4 493.6L433.4 493.5L433.4 493.4L433.3 492.1L433.3 492.1L433.3 492.0L433.3 492.0L433.3 490.7L433.3 490.7L433.3 490.6L433.3 490.6L433.3 489.5L433.3 489.4L433.3 489.3L433.3 489.3L433.4 488.2L433.4 488.2L433.4 488.1L433.4 488.0L433.5 487.0L433.6 487.0L433.6 486.9L433.6 486.8L433.8 485.8L433.8 485.8L433.8 485.7L433.8 485.6L434.1 484.7L434.1 484.6L434.2 484.5L434.2 484.4L434.6 483.6L434.6 483.5L434.7 483.4L434.7 483.3L435.2 482.5L435.2 482.5L435.2 482.4L435.2 482.4L435.1 482.4L434.3 482.2L434.2 482.2L434.0 482.1L433.9 482.1L433.1 481.7L433.0 481.7L432.9 481.6L432.8 481.6L432.0 481.2L432.0 481.1L431.9 481.1L431.8 481.0L431.0 480.5L430.9 480.5L430.8 480.4L430.8 480.4L430.0 479.8L429.9 479.7L429.9 479.7L429.8 479.6L429.0 478.9L429.0 478.9L428.9 478.9L428.9 478.8L428.1 478.0L428.0 478.0L428.0 478.0L428.0 477.9L427.1 477.1L427.1 477.0L427.1 477.0L427.0 476.9L426.2 476.0L426.2 475.9L426.1 475.8L426.1 475.8L425.8 475.8L425.0 475.8L424.9 475.8L424.8 475.8L424.7 475.8L424.5 475.8L424.4 475.7L424.3 475.7L424.1 475.7L424.0 475.6L423.9 475.6L423.7 475.5L423.6 475.4L423.5 475.4L423.4 475.3L423.3 475.2L423.2 475.1L423.1 475.0L423.0 474.9L422.9 474.8L422.8 474.7L422.7 474.6L422.7 474.6Z" fill="#c88040" stroke="#3b2414" stroke-width="1.05"/>
<path d="M372.0 483.1L371.8 482.2L371.6 481.4L371.3 480.6L370.9 479.8L370.5 479.0L370.0 478.3L369.4 477.6L368.7 477.0L368.0 476.5L367.2 476.1L366.4 475.7L365.6 475.4L364.8 475.2L363.9 475.0L363.0 475.0L362.1 475.0L361.2 475.2L360.4 475.4L359.6 475.7L358.8 476.1L358.0 476.5L357.3 477.0L356.6 477.6L356.0 478.3L355.5 479.0L355.1 479.8L354.7 480.6L354.4 481.4L354.2 482.2L354.0 483.1L354.0 484.0L354.0 484.9L354.2 485.8L354.4 486.6L354.7 487.4L355.1 488.2L355.5 489.0L356.0 489.7L356.6 490.4L357.3 491.0L358.0 491.5L358.8 491.9L359.6 492.3L360.4 492.6L361.2 492.8L362.1 493.0L363.0 493.0L363.9 493.0L364.8 492.8L365.6 492.6L366.4 492.3L367.2 491.9L368.0 491.5L368.7 491.0L369.4 490.4L370.0 489.7L370.5 489.0L370.9 488.2L371.3 487.4L371.6 486.6L371.8 485.8L372.0 484.9L372.0 484.0ZM375.2 490.7L375.5 492.2L375.9 493.4L376.4 494.5L376.9 495.4L377.5 496.3L378.1 497.0L378.7 497.5L379.5 498.0L380.2 498.3L381.0 498.5L381.9 498.6L382.8 498.6L383.7 498.5L384.7 498.3L385.7 498.1L386.8 497.7L387.8 497.3L388.9 496.8L390.1 496.2L391.3 495.4L392.1 495.7L392.8 496.0L393.6 496.4L393.6 496.4L392.8 496.0L392.1 495.7L391.3 495.4L390.9 494.0L390.5 492.8L390.1 491.7L389.6 490.6L389.1 489.7L388.6 488.8L388.0 488.0L387.4 487.2L386.8 486.6L386.1 486.1L385.3 485.7L384.6 485.4L383.7 485.2L382.8 485.2L381.9 485.2L380.9 485.4L379.9 485.8L378.8 486.2L377.7 486.8L376.5 487.6L375.1 488.9ZM366.9 497.4L366.1 498.6L365.5 499.8L365.1 500.9L364.7 501.9L364.6 502.9L364.5 503.8L364.6 504.7L364.8 505.5L365.1 506.3L365.5 507.0L366.0 507.7L366.7 508.3L367.4 508.9L368.2 509.5L369.1 510.0L370.1 510.5L371.2 511.0L372.3 511.4L373.5 511.8L374.9 512.1L375.2 512.8L375.6 513.6L375.9 514.4L375.9 514.4L375.6 513.6L375.2 512.8L374.9 512.1L375.6 510.9L376.2 509.7L376.7 508.6L377.1 507.5L377.5 506.5L377.7 505.5L377.9 504.5L378.0 503.5L378.0 502.6L377.8 501.8L377.6 501.0L377.3 500.2L376.8 499.5L376.2 498.8L375.5 498.2L374.7 497.7L373.7 497.2L372.6 496.8L371.4 496.4L370.0 496.1L368.1 496.0ZM356.3 496.2L354.8 496.5L353.6 496.9L352.5 497.4L351.6 497.9L350.7 498.5L350.0 499.1L349.5 499.7L349.0 500.5L348.7 501.2L348.5 502.0L348.4 502.9L348.4 503.8L348.5 504.7L348.7 505.7L348.9 506.7L349.3 507.8L349.7 508.8L350.2 509.9L350.8 511.1L351.6 512.3L351.3 513.1L351.0 513.8L350.6 514.6L350.6 514.6L351.0 513.8L351.3 513.1L351.6 512.3L353.0 511.9L354.2 511.5L355.3 511.1L356.4 510.6L357.3 510.1L358.2 509.6L359.0 509.0L359.8 508.4L360.4 507.8L360.9 507.1L361.3 506.3L361.6 505.6L361.8 504.7L361.8 503.8L361.8 502.9L361.6 501.9L361.2 500.9L360.8 499.8L360.2 498.7L359.4 497.5L358.1 496.1ZM349.6 487.9L348.4 487.1L347.2 486.5L346.1 486.1L345.1 485.7L344.1 485.6L343.2 485.5L342.3 485.6L341.5 485.8L340.7 486.1L340.0 486.5L339.3 487.0L338.7 487.7L338.1 488.4L337.5 489.2L337.0 490.1L336.5 491.1L336.0 492.2L335.6 493.3L335.2 494.5L334.9 495.9L334.2 496.2L333.4 496.6L332.6 496.9L332.6 496.9L333.4 496.6L334.2 496.2L334.9 495.9L336.1 496.6L337.3 497.2L338.4 497.7L339.5 498.1L340.5 498.5L341.5 498.7L342.5 498.9L343.5 499.0L344.4 499.0L345.2 498.8L346.0 498.6L346.8 498.3L347.5 497.8L348.2 497.2L348.8 496.5L349.3 495.7L349.8 494.7L350.2 493.6L350.6 492.4L350.9 491.0L351.0 489.1ZM350.8 477.3L350.5 475.8L350.1 474.6L349.6 473.5L349.1 472.6L348.5 471.7L347.9 471.0L347.3 470.5L346.5 470.0L345.8 469.7L345.0 469.5L344.1 469.4L343.2 469.4L342.3 469.5L341.3 469.7L340.3 469.9L339.2 470.3L338.2 470.7L337.1 471.2L335.9 471.8L334.7 472.6L333.9 472.3L333.2 472.0L332.4 471.6L332.4 471.6L333.2 472.0L333.9 472.3L334.7 472.6L335.1 474.0L335.5 475.2L335.9 476.3L336.4 477.4L336.9 478.3L337.4 479.2L338.0 480.0L338.6 480.8L339.2 481.4L339.9 481.9L340.7 482.3L341.4 482.6L342.3 482.8L343.2 482.8L344.1 482.8L345.1 482.6L346.1 482.2L347.2 481.8L348.3 481.2L349.5 480.4L350.9 479.1ZM359.1 470.6L359.9 469.4L360.5 468.2L360.9 467.1L361.3 466.1L361.4 465.1L361.5 464.2L361.4 463.3L361.2 462.5L360.9 461.7L360.5 461.0L360.0 460.3L359.3 459.7L358.6 459.1L357.8 458.5L356.9 458.0L355.9 457.5L354.8 457.0L353.7 456.6L352.5 456.2L351.1 455.9L350.8 455.2L350.4 454.4L350.1 453.6L350.1 453.6L350.4 454.4L350.8 455.2L351.1 455.9L350.4 457.1L349.8 458.3L349.3 459.4L348.9 460.5L348.5 461.5L348.3 462.5L348.1 463.5L348.0 464.5L348.0 465.4L348.2 466.2L348.4 467.0L348.7 467.8L349.2 468.5L349.8 469.2L350.5 469.8L351.3 470.3L352.3 470.8L353.4 471.2L354.6 471.6L356.0 471.9L357.9 472.0ZM369.7 471.8L371.2 471.5L372.4 471.1L373.5 470.6L374.4 470.1L375.3 469.5L376.0 468.9L376.5 468.3L377.0 467.5L377.3 466.8L377.5 466.0L377.6 465.1L377.6 464.2L377.5 463.3L377.3 462.3L377.1 461.3L376.7 460.2L376.3 459.2L375.8 458.1L375.2 456.9L374.4 455.7L374.7 454.9L375.0 454.2L375.4 453.4L375.4 453.4L375.0 454.2L374.7 454.9L374.4 455.7L373.0 456.1L371.8 456.5L370.7 456.9L369.6 457.4L368.7 457.9L367.8 458.4L367.0 459.0L366.2 459.6L365.6 460.2L365.1 460.9L364.7 461.7L364.4 462.4L364.2 463.3L364.2 464.2L364.2 465.1L364.4 466.1L364.8 467.1L365.2 468.2L365.8 469.3L366.6 470.5L367.9 471.9ZM376.4 480.1L377.6 480.9L378.8 481.5L379.9 481.9L380.9 482.3L381.9 482.4L382.8 482.5L383.7 482.4L384.5 482.2L385.3 481.9L386.0 481.5L386.7 481.0L387.3 480.3L387.9 479.6L388.5 478.8L389.0 477.9L389.5 476.9L390.0 475.8L390.4 474.7L390.8 473.5L391.1 472.1L391.8 471.8L392.6 471.4L393.4 471.1L393.4 471.1L392.6 471.4L391.8 471.8L391.1 472.1L389.9 471.4L388.7 470.8L387.6 470.3L386.5 469.9L385.5 469.5L384.5 469.3L383.5 469.1L382.5 469.0L381.6 469.0L380.8 469.2L380.0 469.4L379.2 469.7L378.5 470.2L377.8 470.8L377.2 471.5L376.7 472.3L376.2 473.3L375.8 474.4L375.4 475.6L375.1 477.0L375.0 478.9ZM467.0 472.1L466.8 471.2L466.6 470.4L466.3 469.6L465.9 468.8L465.5 468.0L465.0 467.3L464.4 466.6L463.7 466.0L463.0 465.5L462.2 465.1L461.4 464.7L460.6 464.4L459.8 464.2L458.9 464.0L458.0 464.0L457.1 464.0L456.2 464.2L455.4 464.4L454.6 464.7L453.8 465.1L453.0 465.5L452.3 466.0L451.6 466.6L451.0 467.3L450.5 468.0L450.1 468.8L449.7 469.6L449.4 470.4L449.2 471.2L449.0 472.1L449.0 473.0L449.0 473.9L449.2 474.8L449.4 475.6L449.7 476.4L450.1 477.2L450.5 478.0L451.0 478.7L451.6 479.4L452.3 480.0L453.0 480.5L453.8 480.9L454.6 481.3L455.4 481.6L456.2 481.8L457.1 482.0L458.0 482.0L458.9 482.0L459.8 481.8L460.6 481.6L461.4 481.3L462.2 480.9L463.0 480.5L463.7 480.0L464.4 479.4L465.0 478.7L465.5 478.0L465.9 477.2L466.3 476.4L466.6 475.6L466.8 474.8L467.0 473.9L467.0 473.0ZM471.8 474.7L472.7 475.9L473.5 476.9L474.3 477.7L475.2 478.4L476.0 478.9L476.8 479.4L477.7 479.6L478.5 479.8L479.3 479.8L480.2 479.7L481.0 479.5L481.8 479.1L482.7 478.7L483.5 478.2L484.3 477.5L485.2 476.8L486.0 476.0L486.8 475.1L487.7 474.1L488.5 473.0L489.3 473.0L490.2 473.0L491.0 473.0L491.0 473.0L490.2 473.0L489.3 473.0L488.5 473.0L487.7 471.9L486.8 470.9L486.0 470.0L485.2 469.2L484.3 468.5L483.5 467.8L482.7 467.3L481.8 466.9L481.0 466.5L480.2 466.3L479.3 466.2L478.5 466.2L477.7 466.4L476.8 466.6L476.0 467.1L475.2 467.6L474.3 468.3L473.5 469.1L472.7 470.1L471.8 471.3L471.0 473.0ZM466.6 484.0L466.3 485.4L466.2 486.7L466.2 487.9L466.3 489.0L466.5 489.9L466.8 490.8L467.2 491.6L467.7 492.3L468.3 492.9L468.9 493.4L469.7 493.8L470.5 494.2L471.4 494.5L472.4 494.7L473.4 494.8L474.5 494.9L475.7 494.9L476.9 494.9L478.2 494.8L479.6 494.6L480.2 495.2L480.7 495.7L481.3 496.3L481.3 496.3L480.7 495.7L480.2 495.2L479.6 494.6L479.8 493.2L479.9 491.9L479.9 490.7L479.9 489.5L479.8 488.4L479.7 487.4L479.5 486.4L479.2 485.5L478.8 484.7L478.4 483.9L477.9 483.3L477.3 482.7L476.6 482.2L475.8 481.8L474.9 481.5L474.0 481.3L472.9 481.2L471.7 481.2L470.4 481.3L469.0 481.6L467.2 482.2ZM456.3 486.8L455.1 487.7L454.1 488.5L453.3 489.3L452.6 490.2L452.1 491.0L451.6 491.8L451.4 492.7L451.2 493.5L451.2 494.3L451.3 495.2L451.5 496.0L451.9 496.8L452.3 497.7L452.8 498.5L453.5 499.3L454.2 500.2L455.0 501.0L455.9 501.8L456.9 502.7L458.0 503.5L458.0 504.3L458.0 505.2L458.0 506.0L458.0 506.0L458.0 505.2L458.0 504.3L458.0 503.5L459.1 502.7L460.1 501.8L461.0 501.0L461.8 500.2L462.5 499.3L463.2 498.5L463.7 497.7L464.1 496.8L464.5 496.0L464.7 495.2L464.8 494.3L464.8 493.5L464.6 492.7L464.4 491.8L463.9 491.0L463.4 490.2L462.7 489.3L461.9 488.5L460.9 487.7L459.7 486.8L458.0 486.0ZM447.0 481.6L445.6 481.3L444.3 481.2L443.1 481.2L442.0 481.3L441.1 481.5L440.2 481.8L439.4 482.2L438.7 482.7L438.1 483.3L437.6 483.9L437.2 484.7L436.8 485.5L436.5 486.4L436.3 487.4L436.2 488.4L436.1 489.5L436.1 490.7L436.1 491.9L436.2 493.2L436.4 494.6L435.8 495.2L435.3 495.7L434.7 496.3L434.7 496.3L435.3 495.7L435.8 495.2L436.4 494.6L437.8 494.8L439.1 494.9L440.3 494.9L441.5 494.9L442.6 494.8L443.6 494.7L444.6 494.5L445.5 494.2L446.3 493.8L447.1 493.4L447.7 492.9L448.3 492.3L448.8 491.6L449.2 490.8L449.5 489.9L449.7 489.0L449.8 487.9L449.8 486.7L449.7 485.4L449.4 484.0L448.8 482.2ZM444.2 471.3L443.3 470.1L442.5 469.1L441.7 468.3L440.8 467.6L440.0 467.1L439.2 466.6L438.3 466.4L437.5 466.2L436.7 466.2L435.8 466.3L435.0 466.5L434.2 466.9L433.3 467.3L432.5 467.8L431.7 468.5L430.8 469.2L430.0 470.0L429.2 470.9L428.3 471.9L427.5 473.0L426.7 473.0L425.8 473.0L425.0 473.0L425.0 473.0L425.8 473.0L426.7 473.0L427.5 473.0L428.3 474.1L429.2 475.1L430.0 476.0L430.8 476.8L431.7 477.5L432.5 478.2L433.3 478.7L434.2 479.1L435.0 479.5L435.8 479.7L436.7 479.8L437.5 479.8L438.3 479.6L439.2 479.4L440.0 478.9L440.8 478.4L441.7 477.7L442.5 476.9L443.3 475.9L444.2 474.7L445.0 473.0ZM449.4 462.0L449.7 460.6L449.8 459.3L449.8 458.1L449.7 457.0L449.5 456.1L449.2 455.2L448.8 454.4L448.3 453.7L447.7 453.1L447.1 452.6L446.3 452.2L445.5 451.8L444.6 451.5L443.6 451.3L442.6 451.2L441.5 451.1L440.3 451.1L439.1 451.1L437.8 451.2L436.4 451.4L435.8 450.8L435.3 450.3L434.7 449.7L434.7 449.7L435.3 450.3L435.8 450.8L436.4 451.4L436.2 452.8L436.1 454.1L436.1 455.3L436.1 456.5L436.2 457.6L436.3 458.6L436.5 459.6L436.8 460.5L437.2 461.3L437.6 462.1L438.1 462.7L438.7 463.3L439.4 463.8L440.2 464.2L441.1 464.5L442.0 464.7L443.1 464.8L444.3 464.8L445.6 464.7L447.0 464.4L448.8 463.8ZM459.7 459.2L460.9 458.3L461.9 457.5L462.7 456.7L463.4 455.8L463.9 455.0L464.4 454.2L464.6 453.3L464.8 452.5L464.8 451.7L464.7 450.8L464.5 450.0L464.1 449.2L463.7 448.3L463.2 447.5L462.5 446.7L461.8 445.8L461.0 445.0L460.1 444.2L459.1 443.3L458.0 442.5L458.0 441.7L458.0 440.8L458.0 440.0L458.0 440.0L458.0 440.8L458.0 441.7L458.0 442.5L456.9 443.3L455.9 444.2L455.0 445.0L454.2 445.8L453.5 446.7L452.8 447.5L452.3 448.3L451.9 449.2L451.5 450.0L451.3 450.8L451.2 451.7L451.2 452.5L451.4 453.3L451.6 454.2L452.1 455.0L452.6 455.8L453.3 456.7L454.1 457.5L455.1 458.3L456.3 459.2L458.0 460.0ZM469.0 464.4L470.4 464.7L471.7 464.8L472.9 464.8L474.0 464.7L474.9 464.5L475.8 464.2L476.6 463.8L477.3 463.3L477.9 462.7L478.4 462.1L478.8 461.3L479.2 460.5L479.5 459.6L479.7 458.6L479.8 457.6L479.9 456.5L479.9 455.3L479.9 454.1L479.8 452.8L479.6 451.4L480.2 450.8L480.7 450.3L481.3 449.7L481.3 449.7L480.7 450.3L480.2 450.8L479.6 451.4L478.2 451.2L476.9 451.1L475.7 451.1L474.5 451.1L473.4 451.2L472.4 451.3L471.4 451.5L470.5 451.8L469.7 452.2L468.9 452.6L468.3 453.1L467.7 453.7L467.2 454.4L466.8 455.2L466.5 456.1L466.3 457.0L466.2 458.1L466.2 459.3L466.3 460.6L466.6 462.0L467.2 463.8ZM322.5 567.2L322.3 566.3L322.1 565.5L321.9 564.7L321.5 564.0L321.1 563.3L320.6 562.6L320.0 562.0L319.4 561.4L318.7 560.9L318.0 560.5L317.3 560.1L316.5 559.9L315.7 559.7L314.8 559.5L314.0 559.5L313.2 559.5L312.3 559.7L311.5 559.9L310.7 560.1L310.0 560.5L309.3 560.9L308.6 561.4L308.0 562.0L307.4 562.6L306.9 563.3L306.5 564.0L306.1 564.7L305.9 565.5L305.7 566.3L305.5 567.2L305.5 568.0L305.5 568.8L305.7 569.7L305.9 570.5L306.1 571.3L306.5 572.0L306.9 572.7L307.4 573.4L308.0 574.0L308.6 574.6L309.3 575.1L310.0 575.5L310.7 575.9L311.5 576.1L312.3 576.3L313.2 576.5L314.0 576.5L314.8 576.5L315.7 576.3L316.5 576.1L317.3 575.9L318.0 575.5L318.7 575.1L319.4 574.6L320.0 574.0L320.6 573.4L321.1 572.7L321.5 572.0L321.9 571.3L322.1 570.5L322.3 569.7L322.5 568.8L322.5 568.0ZM326.3 571.7L326.8 573.0L327.4 574.0L328.0 574.9L328.6 575.6L329.3 576.3L330.0 576.8L330.7 577.2L331.4 577.4L332.1 577.6L332.9 577.6L333.6 577.5L334.4 577.4L335.2 577.1L336.1 576.7L336.9 576.3L337.8 575.8L338.6 575.2L339.5 574.5L340.4 573.7L341.3 572.8L342.1 572.9L342.8 573.1L343.5 573.2L343.5 573.2L342.8 573.1L342.1 572.9L341.3 572.8L340.8 571.6L340.2 570.6L339.6 569.7L339.0 568.8L338.4 568.1L337.7 567.3L337.1 566.7L336.4 566.2L335.7 565.8L335.0 565.4L334.3 565.2L333.6 565.1L332.8 565.1L332.0 565.2L331.2 565.5L330.4 565.8L329.5 566.3L328.7 567.0L327.8 567.7L326.8 568.7L325.8 570.1ZM320.0 579.3L319.6 580.6L319.2 581.7L319.0 582.8L319.0 583.8L319.0 584.7L319.1 585.5L319.3 586.3L319.6 587.0L320.0 587.6L320.4 587.9L321.2 587.9L321.4 587.9L321.5 587.9L324.6 588.3L324.9 588.3L325.1 588.4L325.3 588.5L325.5 588.6L327.2 589.6L327.3 589.8L327.5 589.9L327.6 590.0L327.8 590.2L327.9 590.4L328.0 590.6L328.0 590.7L328.6 590.7L329.9 590.7L330.3 591.3L330.8 592.0L331.2 592.6L331.2 592.6L330.8 592.0L330.3 591.3L329.9 590.7L330.4 589.5L330.7 588.4L330.9 587.3L331.1 586.3L331.2 585.3L331.2 584.3L331.2 583.4L331.1 582.6L330.9 581.8L330.7 581.0L330.3 580.4L329.9 579.8L329.3 579.2L328.7 578.8L328.0 578.4L327.1 578.0L326.2 577.8L325.1 577.6L323.9 577.5L322.6 577.6L320.9 577.8ZM310.3 580.3L309.0 580.8L308.0 581.4L307.1 582.0L306.4 582.6L305.7 583.3L305.2 584.0L304.8 584.7L304.6 585.4L304.4 586.1L304.4 586.9L304.5 587.6L304.6 588.4L304.9 589.2L305.1 589.7L308.2 589.2L308.3 589.2L312.5 588.5L312.6 588.5L316.8 588.1L316.9 587.6L316.9 586.8L316.8 586.0L316.5 585.2L316.2 584.4L315.7 583.5L315.0 582.7L314.3 581.8L313.3 580.8L311.9 579.8ZM302.7 574.0L301.4 573.6L300.3 573.2L299.2 573.0L298.2 573.0L297.3 573.0L296.5 573.1L295.7 573.3L295.0 573.6L294.4 574.0L293.9 574.5L293.4 575.1L292.9 575.8L292.6 576.6L292.2 577.4L291.9 578.3L291.7 579.3L291.5 580.3L291.4 581.4L291.3 582.6L291.3 583.9L290.7 584.3L290.0 584.8L289.4 585.2L289.4 585.2L290.0 584.8L290.7 584.3L291.3 583.9L292.5 584.4L293.6 584.7L294.7 584.9L295.7 585.1L296.7 585.2L297.7 585.2L298.6 585.2L299.4 585.1L300.2 584.9L301.0 584.7L301.6 584.3L302.2 583.9L302.8 583.3L303.2 582.7L303.6 582.0L304.0 581.1L304.2 580.2L304.4 579.1L304.5 577.9L304.4 576.6L304.2 574.9ZM301.7 564.3L301.2 563.0L300.6 562.0L300.0 561.1L299.4 560.4L298.7 559.7L298.0 559.2L297.3 558.8L296.6 558.6L295.9 558.4L295.1 558.4L294.4 558.5L293.6 558.6L292.8 558.9L291.9 559.3L291.1 559.7L290.2 560.2L289.4 560.8L288.5 561.5L287.6 562.3L286.7 563.2L285.9 563.1L285.2 562.9L284.5 562.8L284.5 562.8L285.2 562.9L285.9 563.1L286.7 563.2L287.2 564.4L287.8 565.4L288.4 566.3L289.0 567.2L289.6 567.9L290.3 568.7L290.9 569.3L291.6 569.8L292.3 570.2L293.0 570.6L293.7 570.8L294.4 570.9L295.2 570.9L296.0 570.8L296.8 570.5L297.6 570.2L298.5 569.7L299.3 569.0L300.2 568.3L301.2 567.3L302.2 565.9ZM308.0 556.7L308.4 555.4L308.8 554.3L309.0 553.2L309.0 552.2L309.0 551.3L308.9 550.5L308.7 549.7L308.4 549.0L308.0 548.4L307.5 547.9L306.9 547.4L306.2 546.9L305.4 546.6L304.6 546.2L303.7 545.9L302.7 545.7L301.7 545.5L300.6 545.4L299.4 545.3L298.1 545.3L297.7 544.7L297.2 544.0L296.8 543.4L296.8 543.4L297.2 544.0L297.7 544.7L298.1 545.3L297.6 546.5L297.3 547.6L297.1 548.7L296.9 549.7L296.8 550.7L296.8 551.7L296.8 552.6L296.9 553.4L297.1 554.2L297.3 555.0L297.7 555.6L298.1 556.2L298.7 556.8L299.3 557.2L300.0 557.6L300.9 558.0L301.8 558.2L302.9 558.4L304.1 558.5L305.4 558.4L307.1 558.2ZM317.7 555.7L319.0 555.2L320.0 554.6L320.9 554.0L321.6 553.4L322.3 552.7L322.8 552.0L323.2 551.3L323.4 550.6L323.6 549.9L323.6 549.1L323.5 548.4L323.4 547.6L323.1 546.8L322.7 545.9L322.3 545.1L321.8 544.2L321.2 543.4L320.5 542.5L319.7 541.6L318.8 540.7L318.9 539.9L319.1 539.2L319.2 538.5L319.2 538.5L319.1 539.2L318.9 539.9L318.8 540.7L317.6 541.2L316.6 541.8L315.7 542.4L314.8 543.0L314.1 543.6L313.3 544.3L312.7 544.9L312.2 545.6L311.8 546.3L311.4 547.0L311.2 547.7L311.1 548.4L311.1 549.2L311.2 550.0L311.5 550.8L311.8 551.6L312.3 552.5L313.0 553.3L313.7 554.2L314.7 555.2L316.1 556.2ZM325.3 562.0L326.6 562.4L327.7 562.8L328.8 563.0L329.8 563.0L330.7 563.0L331.5 562.9L332.3 562.7L333.0 562.4L333.6 562.0L334.1 561.5L334.6 560.9L335.1 560.2L335.4 559.4L335.8 558.6L336.1 557.7L336.3 556.7L336.5 555.7L336.6 554.6L336.7 553.4L336.7 552.1L337.3 551.7L338.0 551.2L338.6 550.8L338.6 550.8L338.0 551.2L337.3 551.7L336.7 552.1L335.5 551.6L334.4 551.3L333.3 551.1L332.3 550.9L331.3 550.8L330.3 550.8L329.4 550.8L328.6 550.9L327.8 551.1L327.0 551.3L326.4 551.7L325.8 552.1L325.2 552.7L324.8 553.3L324.4 554.0L324.0 554.9L323.8 555.8L323.6 556.9L323.5 558.1L323.6 559.4L323.8 561.1ZM467.0 557.1L466.8 556.2L466.6 555.4L466.3 554.6L465.9 553.8L465.5 553.0L465.0 552.3L464.4 551.6L463.7 551.0L463.0 550.5L462.2 550.1L461.4 549.7L460.6 549.4L459.8 549.2L458.9 549.0L458.0 549.0L457.1 549.0L456.2 549.2L455.4 549.4L454.6 549.7L453.8 550.1L453.0 550.5L452.3 551.0L451.6 551.6L451.0 552.3L450.5 553.0L450.1 553.8L449.7 554.6L449.4 555.4L449.2 556.2L449.0 557.1L449.0 558.0L449.0 558.9L449.2 559.8L449.4 560.6L449.7 561.4L450.1 562.2L450.5 563.0L451.0 563.7L451.6 564.4L452.3 565.0L453.0 565.5L453.8 565.9L454.6 566.3L455.4 566.6L456.2 566.8L457.1 567.0L458.0 567.0L458.9 567.0L459.8 566.8L460.6 566.6L461.4 566.3L462.2 565.9L463.0 565.5L463.7 565.0L464.4 564.4L465.0 563.7L465.5 563.0L465.9 562.2L466.3 561.4L466.6 560.6L466.8 559.8L467.0 558.9L467.0 558.0ZM470.9 563.2L471.3 564.6L471.9 565.7L472.4 566.7L473.0 567.6L473.6 568.3L474.3 568.9L475.0 569.4L475.7 569.8L476.4 570.0L477.2 570.1L478.1 570.1L478.9 570.0L479.8 569.7L480.7 569.4L481.6 569.0L482.6 568.5L483.5 568.0L484.5 567.3L485.6 566.6L486.6 565.7L487.4 565.9L488.1 566.1L488.9 566.3L488.9 566.3L488.1 566.1L487.4 565.9L486.6 565.7L486.1 564.4L485.6 563.2L485.1 562.1L484.5 561.2L484.0 560.3L483.4 559.5L482.7 558.7L482.1 558.1L481.4 557.6L480.7 557.1L480.0 556.8L479.2 556.6L478.4 556.6L477.6 556.7L476.7 556.9L475.8 557.2L474.8 557.6L473.9 558.2L472.8 559.0L471.8 559.9L470.6 561.4ZM463.4 570.8L462.8 572.1L462.3 573.2L462.0 574.4L461.8 575.4L461.7 576.3L461.8 577.2L461.9 578.1L462.2 578.8L462.6 579.5L463.0 580.2L463.6 580.7L464.3 581.2L465.1 581.7L466.0 582.1L466.9 582.5L467.9 582.8L469.0 583.1L470.2 583.4L471.4 583.5L472.8 583.7L473.2 584.3L473.6 585.0L474.0 585.7L474.0 585.7L473.6 585.0L473.2 584.3L472.8 583.7L473.4 582.4L473.9 581.2L474.2 580.1L474.5 579.0L474.8 578.0L474.9 577.0L475.0 576.0L475.0 575.1L474.9 574.2L474.7 573.4L474.4 572.7L473.9 572.0L473.4 571.4L472.8 570.9L472.0 570.4L471.2 570.0L470.2 569.6L469.0 569.4L467.8 569.2L466.4 569.1L464.5 569.3ZM452.8 570.9L451.4 571.3L450.3 571.9L449.3 572.4L448.4 573.0L447.7 573.6L447.1 574.3L446.6 575.0L446.2 575.7L446.0 576.4L445.9 577.2L445.9 578.1L446.0 578.9L446.3 579.8L446.6 580.7L447.0 581.6L447.5 582.6L448.0 583.5L448.7 584.5L449.4 585.6L450.3 586.6L450.1 587.4L449.9 588.1L449.7 588.9L449.7 588.9L449.9 588.1L450.1 587.4L450.3 586.6L451.6 586.1L452.8 585.6L453.9 585.1L454.8 584.5L455.7 584.0L456.5 583.4L457.3 582.7L457.9 582.1L458.4 581.4L458.9 580.7L459.2 580.0L459.4 579.2L459.4 578.4L459.3 577.6L459.1 576.7L458.8 575.8L458.4 574.8L457.8 573.9L457.0 572.8L456.1 571.8L454.6 570.6ZM445.2 563.4L443.9 562.8L442.8 562.3L441.6 562.0L440.6 561.8L439.7 561.7L438.8 561.8L437.9 561.9L437.2 562.2L436.5 562.6L435.8 563.0L435.3 563.6L434.8 564.3L434.3 565.1L433.9 566.0L433.5 566.9L433.2 567.9L432.9 569.0L432.6 570.2L432.5 571.4L432.4 572.2L432.5 572.2L433.4 573.3L433.6 573.4L434.8 573.9L435.9 574.2L437.0 574.5L438.0 574.8L439.0 574.9L440.0 575.0L440.9 575.0L441.8 574.9L442.6 574.7L443.3 574.4L444.0 573.9L444.6 573.4L445.1 572.8L445.6 572.0L446.0 571.2L446.4 570.2L446.6 569.0L446.8 567.8L446.9 566.4L446.7 564.5ZM445.1 552.8L444.7 551.4L444.1 550.3L443.6 549.3L443.0 548.4L442.4 547.7L441.7 547.1L441.0 546.6L440.3 546.2L439.6 546.0L438.8 545.9L437.9 545.9L437.1 546.0L436.2 546.3L435.3 546.6L434.4 547.0L433.4 547.5L432.5 548.0L431.5 548.7L430.4 549.4L429.4 550.3L428.6 550.1L427.9 549.9L427.1 549.7L427.1 549.7L427.9 549.9L428.6 550.1L429.4 550.3L429.9 551.6L430.4 552.8L430.9 553.9L431.5 554.8L432.0 555.7L432.6 556.5L433.3 557.3L433.9 557.9L434.6 558.4L435.3 558.9L436.0 559.2L436.8 559.4L437.6 559.4L438.4 559.3L439.3 559.1L440.2 558.8L441.2 558.4L442.1 557.8L443.2 557.0L444.2 556.1L445.4 554.6ZM452.6 545.2L453.2 543.9L453.7 542.8L454.0 541.6L454.2 540.6L454.3 539.7L454.2 538.8L454.1 537.9L453.8 537.2L453.4 536.5L453.0 535.8L452.4 535.3L451.7 534.8L450.9 534.3L450.0 533.9L449.1 533.5L448.1 533.2L447.0 532.9L445.8 532.6L444.6 532.5L443.2 532.3L442.8 531.7L442.4 531.0L442.0 530.3L442.0 530.3L442.4 531.0L442.8 531.7L443.2 532.3L442.6 533.6L442.1 534.8L441.8 535.9L441.5 537.0L441.2 538.0L441.1 539.0L441.0 540.0L441.0 540.9L441.1 541.8L441.3 542.6L441.6 543.3L442.1 544.0L442.6 544.6L443.2 545.1L444.0 545.6L444.8 546.0L445.8 546.4L447.0 546.6L448.2 546.8L449.6 546.9L451.5 546.7ZM463.2 545.1L464.6 544.7L465.7 544.1L466.7 543.6L467.6 543.0L468.3 542.4L468.9 541.7L469.4 541.0L469.8 540.3L470.0 539.6L470.1 538.8L470.1 537.9L470.0 537.1L469.7 536.2L469.4 535.3L469.0 534.4L468.5 533.4L468.0 532.5L467.3 531.5L466.6 530.4L465.7 529.4L465.9 528.6L466.1 527.9L466.3 527.1L466.3 527.1L466.1 527.9L465.9 528.6L465.7 529.4L464.4 529.9L463.2 530.4L462.1 530.9L461.2 531.5L460.3 532.0L459.5 532.6L458.7 533.3L458.1 533.9L457.6 534.6L457.1 535.3L456.8 536.0L456.6 536.8L456.6 537.6L456.7 538.4L456.9 539.3L457.2 540.2L457.6 541.2L458.2 542.1L459.0 543.2L459.9 544.2L461.4 545.4ZM470.8 552.6L472.1 553.2L473.2 553.7L474.4 554.0L475.4 554.2L476.3 554.3L477.2 554.2L478.1 554.1L478.8 553.8L479.5 553.4L480.2 553.0L480.7 552.4L481.2 551.7L481.7 550.9L482.1 550.0L482.5 549.1L482.8 548.1L483.1 547.0L483.4 545.8L483.5 544.6L483.7 543.2L484.3 542.8L485.0 542.4L485.7 542.0L485.7 542.0L485.0 542.4L484.3 542.8L483.7 543.2L482.4 542.6L481.2 542.1L480.1 541.8L479.0 541.5L478.0 541.2L477.0 541.1L476.0 541.0L475.1 541.0L474.2 541.1L473.4 541.3L472.7 541.6L472.0 542.1L471.4 542.6L470.9 543.2L470.4 544.0L470.0 544.8L469.6 545.8L469.4 547.0L469.2 548.2L469.1 549.6L469.3 551.5ZM366.9 532.7L366.8 531.5L366.4 530.2L366.0 529.0L365.5 527.9L364.8 526.8L364.0 525.8L363.2 524.8L362.2 524.0L361.2 523.2L360.1 522.5L359.0 522.0L357.8 521.6L356.5 521.2L355.3 521.1L354.0 521.0L352.7 521.1L351.5 521.2L350.2 521.6L349.0 522.0L347.9 522.5L346.8 523.2L345.8 524.0L344.8 524.8L344.0 525.8L343.2 526.8L342.5 527.9L342.0 529.0L341.6 530.2L341.2 531.5L341.1 532.7L341.0 534.0L341.1 535.3L341.2 536.5L341.6 537.8L342.0 539.0L342.5 540.1L343.2 541.2L344.0 542.2L344.8 543.2L345.8 544.0L346.8 544.8L347.9 545.5L349.0 546.0L350.2 546.4L351.5 546.8L352.7 546.9L354.0 547.0L355.3 546.9L356.5 546.8L357.8 546.4L359.0 546.0L360.1 545.5L361.2 544.8L362.2 544.0L363.2 543.2L364.0 542.2L364.8 541.2L365.5 540.1L366.0 539.0L366.4 537.8L366.8 536.5L366.9 535.3L367.0 534.0ZM436.9 514.7L436.8 513.5L436.4 512.2L436.0 511.0L435.5 509.9L434.8 508.8L434.0 507.8L433.2 506.8L432.2 506.0L431.2 505.2L430.1 504.5L429.0 504.0L427.8 503.6L426.5 503.2L425.3 503.1L424.0 503.0L422.7 503.1L421.5 503.2L420.2 503.6L419.0 504.0L417.9 504.5L416.8 505.2L415.8 506.0L414.8 506.8L414.0 507.8L413.2 508.8L412.5 509.9L412.0 511.0L411.6 512.2L411.2 513.5L411.1 514.7L411.0 516.0L411.1 517.3L411.2 518.5L411.6 519.8L412.0 521.0L412.5 522.1L413.2 523.2L414.0 524.2L414.8 525.2L415.8 526.0L416.8 526.8L417.9 527.5L419.0 528.0L420.2 528.4L421.5 528.8L422.7 528.9L424.0 529.0L425.3 528.9L426.5 528.8L427.8 528.4L429.0 528.0L430.1 527.5L431.2 526.8L432.2 526.0L433.2 525.2L434.0 524.2L434.8 523.2L435.5 522.1L436.0 521.0L436.4 519.8L436.8 518.5L436.9 517.3L437.0 516.0Z" fill="#c88040" stroke="#3b2414" stroke-width="1.05"/>
<g clip-path="url(#lc354)"><clipPath id="lc354"><circle cx="354.0" cy="534.0" r="13.0"/></clipPath><path d="M341.0 536.6L367.0 531.4M347.5 521.0L357.9 547.0M342.3 526.2L361.8 545.7" stroke="#3b2414" stroke-width="3.6"/><path d="M341.0 536.6L367.0 531.4M347.5 521.0L357.9 547.0M342.3 526.2L361.8 545.7" stroke="#a35b25" stroke-width="1.8"/></g>
<g clip-path="url(#lc424)"><clipPath id="lc424"><circle cx="424.0" cy="516.0" r="13.0"/></clipPath><path d="M411.0 518.6L437.0 513.4M417.5 503.0L427.9 529.0M412.3 508.2L431.8 527.7" stroke="#3b2414" stroke-width="3.6"/><path d="M411.0 518.6L437.0 513.4M417.5 503.0L427.9 529.0M412.3 508.2L431.8 527.7" stroke="#a35b25" stroke-width="1.8"/></g>
<path d="M470.0 436.0C469.0 433.0 483.0 430.4 490.0 430.0C497.0 429.6 531.1 431.0 540.0 432.0C548.9 433.0 575.5 436.4 579.0 440.0C582.5 443.6 575.7 463.0 575.0 468.0C574.3 473.0 572.4 486.8 572.0 490.0C571.6 493.2 571.9 495.8 571.0 500.0C570.1 504.2 564.9 527.1 563.0 532.0C561.1 536.9 554.7 545.6 552.0 549.0C549.3 552.4 538.7 563.5 536.0 566.0C533.3 568.5 528.6 573.2 525.0 574.0C521.4 574.8 503.0 577.4 500.0 574.0C497.0 570.6 494.7 547.4 495.0 540.0C495.3 532.6 502.5 508.0 503.0 500.0C503.5 492.0 503.3 466.4 500.0 460.0C496.7 453.6 471.0 439.0 470.0 436.0Z" fill="#b0652b" stroke="#3b2414" stroke-width="1" stroke-linejoin="round"/>
<path d="M545.0 468.0 L550.0 466.0 L554.0 482.0 L560.0 492.0 L557.0 505.0 L562.0 515.0 L556.0 530.0 L559.0 538.0 L551.0 552.0 L546.0 540.0 L547.0 525.0 L542.0 510.0 L546.0 498.0 L543.0 485.0Z" fill="#c57b3b" stroke="#3b2414" stroke-width="0.9" stroke-linejoin="round"/>
<path d="M562.0 470.0 L566.0 468.0 L570.0 485.0 L566.0 498.0 L568.0 510.0 L562.0 505.0 L564.0 490.0Z" fill="#c57b3b" stroke="#3b2414" stroke-width="0.9" stroke-linejoin="round"/>
<path d="M515.0 455.0 L530.0 455.0 L531.0 470.0 L532.0 486.0 L535.0 505.0 L537.0 524.0 L537.0 545.0 L536.0 560.0 L534.0 575.0 L512.0 576.0 L490.0 575.0 L497.0 566.0 L494.0 557.0 L500.0 549.0 L497.0 539.0 L502.0 529.0 L500.0 520.0 L507.0 511.0 L505.0 501.0 L511.0 491.0 L512.0 475.0Z" fill="#efeee9" stroke="#5a4a3a" stroke-width="0.9" stroke-linejoin="round"/>
<path d="M232.0 673.0C236.6 668.8 253.5 666.3 259.3 668.0C265.1 669.7 265.9 678.7 266.7 683.0C267.5 687.3 270.1 692.3 264.3 694.0C258.5 695.7 237.4 696.5 232.0 693.0C226.6 689.5 227.4 677.2 232.0 673.0Z" fill="#ecebe6" stroke="#4a4a4a" stroke-width="1"/>
<path d="M328.6 658.3C330.5 654.6 335.6 651.8 341.0 653.4C346.4 655.0 357.0 664.3 360.7 668.2C364.4 672.1 368.3 675.6 363.2 676.8C358.1 678.0 335.6 678.7 329.8 675.6C324.0 672.5 326.7 662.0 328.6 658.3Z" fill="#ecebe6" stroke="#4a4a4a" stroke-width="1"/>
<path d="M463.0 675.6C465.4 670.6 476.5 664.1 480.0 662.0C483.5 659.9 480.4 659.7 484.0 663.2C487.6 666.7 498.3 678.0 501.4 683.0C504.5 688.0 508.6 691.5 502.6 693.0C496.6 694.5 472.1 694.6 465.5 691.7C458.9 688.8 460.6 680.6 463.0 675.6Z" fill="#ecebe6" stroke="#4a4a4a" stroke-width="1"/>
<path d="M502.6 660.8C504.5 655.3 514.9 647.5 518.0 645.0C521.1 642.5 517.0 642.1 521.2 646.0C525.5 649.9 539.6 662.9 543.5 668.2C547.4 673.5 550.9 676.4 544.7 678.0C538.5 679.6 513.4 680.9 506.4 678.0C499.4 675.1 500.7 666.3 502.6 660.8Z" fill="#ecebe6" stroke="#4a4a4a" stroke-width="1"/>
<path d="M501.8 348.2C507.4 343.9 515.1 346.0 522.0 346.0C528.9 346.0 537.3 343.9 543.0 348.2C548.7 352.5 553.8 361.7 556.3 371.8C558.8 381.9 558.5 397.6 557.8 408.6C557.1 419.6 556.8 431.1 551.9 438.0C547.0 444.9 536.1 449.8 528.3 449.8C520.4 449.8 510.7 442.4 504.8 438.0C498.9 433.6 495.9 429.4 493.0 423.3C490.1 417.2 487.8 409.8 487.1 401.2C486.4 392.6 486.2 380.6 488.6 371.8C491.1 363.0 496.2 352.5 501.8 348.2Z" fill="#c67a3a" stroke="#3b2414" stroke-width="1.1"/>
<path d="M469.4 349.7C470.9 349.3 487.0 346.8 488.6 346.8C490.2 346.8 501.4 349.2 501.8 349.7C502.2 350.2 496.6 355.5 495.9 357.0C495.2 358.5 487.5 376.6 487.1 379.2C486.7 381.8 487.0 405.7 487.1 408.6C487.2 411.5 489.3 435.1 488.6 436.6C487.9 438.1 473.5 438.3 472.4 438.0C471.3 437.7 467.5 431.4 467.0 431.0C466.5 430.6 462.2 429.9 462.0 429.5C461.8 429.1 463.8 423.6 463.5 423.0C463.2 422.4 457.2 418.0 457.0 417.4C456.8 416.8 459.2 411.6 459.0 411.0C458.8 410.4 452.2 406.6 452.0 406.0C451.8 405.4 454.7 399.6 454.5 399.0C454.3 398.4 448.5 393.5 448.0 393.0C447.5 392.5 444.9 390.0 445.0 389.5C445.1 389.0 449.2 383.8 449.5 383.0C449.8 382.2 450.2 375.0 450.3 374.0C450.4 373.0 451.4 363.9 451.8 363.0C452.2 362.1 457.1 355.7 458.0 355.0C458.9 354.3 467.9 350.1 469.4 349.7Z" fill="#b0652b" stroke="#3b2414" stroke-width="1.1" stroke-linejoin="round"/>
<path d="M546.0 346.8C547.0 346.1 567.4 343.6 569.5 343.8C571.6 344.0 586.0 349.9 587.2 351.2C588.5 352.5 594.1 366.8 594.5 368.9C594.9 371.0 594.4 392.0 594.5 393.9C594.6 395.8 596.2 406.2 596.0 407.0C595.8 407.8 591.2 409.5 591.0 410.0C590.8 410.5 592.3 416.4 592.0 417.0C591.7 417.6 585.5 420.7 585.0 421.0C584.5 421.3 581.5 422.8 581.3 423.3C581.0 423.9 580.2 431.2 580.0 432.0C579.8 432.8 578.0 439.6 576.9 439.5C575.8 439.4 558.8 433.3 557.8 430.7C556.8 428.1 558.2 390.2 557.8 386.5C557.4 382.8 551.0 359.0 550.4 357.0C549.8 355.0 545.0 347.5 546.0 346.8Z" fill="#b0652b" stroke="#3b2414" stroke-width="1.1" stroke-linejoin="round"/>
<path d="M469 350L466 344M473 349L475 343M568 345L572 340M580 349L588 347M448 390L444 392" stroke="#3b2414" stroke-width="1.2"/>
<path d="M526.8 364.4C528.3 364.4 530.5 365.7 531.3 371.8C532.0 377.9 529.8 394.0 531.3 401.2C532.8 408.4 536.6 410.8 540.0 415.0C543.4 419.2 550.9 421.0 551.9 426.3C552.9 431.6 550.0 442.6 546.0 446.9C542.0 451.2 534.1 452.0 528.0 452.0C521.9 452.0 512.8 451.2 509.2 446.9C505.6 442.6 505.4 431.6 506.2 426.3C507.0 421.0 511.3 419.2 514.0 415.0C516.7 410.8 521.0 408.4 522.4 401.2C523.8 394.0 521.7 377.9 522.4 371.8C523.1 365.7 525.3 364.4 526.8 364.4Z" fill="#efeee9" stroke="#3b2414" stroke-width="0.9"/>
<ellipse cx="501" cy="387" rx="6.5" ry="4.2" transform="rotate(-30 501 387)" fill="#a65b24" stroke="#3b2414" stroke-width="0.6"/>
<ellipse cx="551" cy="387" rx="6.5" ry="4.2" transform="rotate(30 551 387)" fill="#a65b24" stroke="#3b2414" stroke-width="0.6"/>
<circle cx="506.2" cy="399.8" r="5.6" fill="#000"/><circle cx="545.2" cy="399.8" r="5.6" fill="#000"/><circle cx="505" cy="398" r="1.3" fill="#fff"/><circle cx="544" cy="398" r="1.3" fill="#fff"/>
<path d="M516.5 425Q518 418 526.8 418.3Q536 418 537.2 425Q536 434 526.8 434.3Q517 433 516.5 425Z" fill="#ef8590" stroke="#6a3a3a" stroke-width="0.8"/>
<path d="M520.2 445.6L533.4 445.6Q534 457.2 526.8 457.2Q519.5 457 520.2 445.6Z" fill="#ee7a86" stroke="#6a3a3a" stroke-width="0.8"/>
<path d="M512.1 438Q516 446 528.3 444.7Q540 446 544.5 438M528.3 434.5V444.7" fill="none" stroke="#000" stroke-width="2.1"/>
<path d="M511 424l1 1M514 421l1 1M540 421l1 1M543 424l1 1" stroke="#777" stroke-width="1.6"/>
<ellipse cx="97.3" cy="754.3" rx="74" ry="57.5" fill="#c53b1f"/>
<text x="39" y="752" font-size="43" font-family="Liberation Serif" font-style="italic" fill="#fff" letter-spacing="-2">Craft</text>
<text x="127" y="744.5" font-size="9.5" font-family="Liberation Serif" font-weight="bold" fill="#fff" letter-spacing="0.3">WITH</text>
<path d="M127 748Q137 744 146 748Q152 751 157 747" fill="none" stroke="#fff" stroke-width="1.6"/>
<text x="50" y="789.5" font-size="41" font-family="Liberation Serif" font-style="italic" fill="#fff" letter-spacing="-1.5">Sarah</text>
<path d="M58 727Q48 719 42 724Q38 730 46 733Q52 734 55 729" fill="none" stroke="#fff" stroke-width="1.3"/>
<path d="M92 766Q100 758 110 764Q124 771 136 762Q142 757 148 760Q152 764 146 767Q141 768 141 763" fill="none" stroke="#fff" stroke-width="1.2"/>
<path d="M58 776Q50 780 52 789Q55 796 62 794Q66 791 62 787" fill="none" stroke="#fff" stroke-width="1.3"/>
</svg>
<div class="a" style="left:1298px;top:69px;width:202px;height:776px;background:#f2f3f5"></div>
<div class="a" style="left:1298px;top:69px;width:202px;height:59px;background:#e3e3e6"></div>
<div class="a" style="left:1298px;top:86px;width:102px;height:1.5px;background:#8d9094"></div>
<div class="a" style="left:1400px;top:86.5px;width:100px;height:1px;background:#d0d0d4"></div>
<div class="a" style="left:1298px;top:127.5px;width:202px;height:1px;background:#d0d0d4"></div>
<div class="t" style="left:1335px;top:74.5px;font-size:9.3px;color:#555">Layers</div>
<div class="t" style="left:1428px;top:74.5px;font-size:9.3px;color:#555">Color Sync</div>
<div class="t" style="left:1310px;top:113px;font-size:7.3px;color:#c0c0c4">Group</div>
<div class="t" style="left:1356px;top:113px;font-size:7.3px;color:#c0c0c4">UnGroup</div>
<div class="t" style="left:1410.5px;top:113px;font-size:7.6px;color:#444">Duplicate</div>
<div class="t" style="left:1467px;top:113px;font-size:7.6px;color:#444">Delete</div>
<svg style="left:0;top:0" width="1500" height="849"><rect x="1314.5" y="92.5" width="14" height="11" fill="none" stroke="#c4c4c8" stroke-width="1.2"/><path d="M1318 96L1325 100M1325 96L1318 100" stroke="#c4c4c8"/><rect x="1364.5" y="91.5" width="8" height="8" fill="none" stroke="#c4c4c8"/><rect x="1368.5" y="95.5" width="9" height="9" fill="none" stroke="#c4c4c8"/><rect x="1420.5" y="91.5" width="10" height="10" fill="none" stroke="#555"/><rect x="1423.5" y="94.5" width="10" height="10" fill="#e3e3e6" stroke="#555"/><path d="M1425 97L1432 103M1432 97L1425 103" stroke="#555" stroke-width="0.8"/><path d="M1472.5 93.5H1484.5M1476.5 93.5V91.5H1480.5V93.5M1473.5 93.5L1474.5 104.5H1482.5L1483.5 93.5M1476.5 96V102M1478.5 96V102M1480.5 96V102" fill="none" stroke="#aaa"/></svg>
<div class="a" style="left:1298px;top:128px;width:190.5px;height:59px;background:#e4e4e7"></div>
<div class="a" style="left:1298px;top:186.5px;width:190.5px;height:2px;background:#d9dadd"></div>
<svg style="left:1306px;top:138px" width="6" height="5"><path d="M0 0.5H6L3 4Z" fill="#222"/></svg>
<div class="t" style="left:1320px;top:135px;font-size:11px;color:#555">Square</div>
<svg style="left:1464px;top:135px" width="15" height="10" viewBox="0 0 15 10"><path d="M1.5 5Q7.5 -2 13.5 5Q7.5 12 1.5 5Z" fill="#6a6a6a"/><circle cx="7.5" cy="5" r="2.7" fill="#2a2a2a"/><circle cx="6.5" cy="3.9" r="1" fill="#fff"/></svg>
<div class="t" style="left:1351.5px;top:163px;font-size:9.1px;color:#555">Basic Cut</div>
<div class="a" style="left:1320px;top:156px;width:23.5px;height:22.5px;background:#454545;border:1px solid #333"></div>
<div class="a" style="left:1298px;top:246.0px;width:190.5px;height:2px;background:#d9dadd"></div>
<svg style="left:1306px;top:197px" width="6" height="5"><path d="M0 0.5H6L3 4Z" fill="#222"/></svg>
<div class="t" style="left:1320px;top:194px;font-size:11px;color:#555">Wings And Halo</div>
<svg style="left:1464px;top:194px" width="15" height="10" viewBox="0 0 15 10"><path d="M1.5 5Q7.5 -2 13.5 5Q7.5 12 1.5 5Z" fill="#6a6a6a"/><circle cx="7.5" cy="5" r="2.7" fill="#2a2a2a"/><circle cx="6.5" cy="3.9" r="1" fill="#fff"/></svg>
<div class="t" style="left:1351.5px;top:222px;font-size:9.1px;color:#555">Basic Cut</div>
<div class="a" style="left:1298px;top:304.0px;width:190.5px;height:2px;background:#d9dadd"></div>
<svg style="left:1306px;top:256.5px" width="6" height="5"><path d="M0 0.5H6L3 4Z" fill="#222"/></svg>
<div class="t" style="left:1320px;top:253.5px;font-size:11px;color:#555">Slice Result</div>
<svg style="left:1464px;top:253.5px" width="15" height="10" viewBox="0 0 15 10"><path d="M1.5 5Q7.5 -2 13.5 5Q7.5 12 1.5 5Z" fill="#9a9a9a"/><circle cx="7.5" cy="5" r="2.4" fill="#555"/><path d="M3 0.8L12 9.6" stroke="#f2f3f5" stroke-width="2.2"/><path d="M3 0.8L12 9.6" stroke="#777" stroke-width="1.1"/></svg>
<div class="t" style="left:1351.5px;top:281.5px;font-size:9.1px;color:#555">Basic Cut</div>
<div class="a" style="left:1298px;top:330.5px;width:190.5px;height:2px;background:#d9dadd"></div>
<svg style="left:1307.5px;top:314.5px" width="5" height="6"><path d="M0.5 0V6L4 3Z" fill="#222"/></svg>
<div class="t" style="left:1320px;top:311.5px;font-size:11px;color:#555">V1</div>
<svg style="left:1464px;top:311.5px" width="15" height="10" viewBox="0 0 15 10"><path d="M1.5 5Q7.5 -2 13.5 5Q7.5 12 1.5 5Z" fill="#9a9a9a"/><circle cx="7.5" cy="5" r="2.4" fill="#555"/><path d="M3 0.8L12 9.6" stroke="#f2f3f5" stroke-width="2.2"/><path d="M3 0.8L12 9.6" stroke="#777" stroke-width="1.1"/></svg>
<div class="a" style="left:1298px;top:390.0px;width:190.5px;height:2px;background:#d9dadd"></div>
<svg style="left:1306px;top:341px" width="6" height="5"><path d="M0 0.5H6L3 4Z" fill="#222"/></svg>
<div class="t" style="left:1320px;top:338px;font-size:11px;color:#555">Wing 9 Stroke</div>
<svg style="left:1464px;top:338px" width="15" height="10" viewBox="0 0 15 10"><path d="M1.5 5Q7.5 -2 13.5 5Q7.5 12 1.5 5Z" fill="#6a6a6a"/><circle cx="7.5" cy="5" r="2.7" fill="#2a2a2a"/><circle cx="6.5" cy="3.9" r="1" fill="#fff"/></svg>
<div class="t" style="left:1351.5px;top:366px;font-size:9.1px;color:#555">Basic Cut</div>
<svg style="left:1306px;top:400px" width="6" height="5"><path d="M0 0.5H6L3 4Z" fill="#222"/></svg>
<div class="t" style="left:1320px;top:397px;font-size:11px;color:#555">Toller Retriever</div>
<svg style="left:1464px;top:398px" width="15" height="10" viewBox="0 0 15 10"><path d="M1.5 5Q7.5 -2 13.5 5Q7.5 12 1.5 5Z" fill="#6a6a6a"/><circle cx="7.5" cy="5" r="2.7" fill="#2a2a2a"/><circle cx="6.5" cy="3.9" r="1" fill="#fff"/></svg>
<div class="a" style="left:1320px;top:413.5px;width:168px;height:2px;background:#d9dadd"></div>
<div class="t" style="left:1351.5px;top:426.5px;font-size:9.1px;color:#555">Basic Cut</div>
<svg style="left:1464px;top:426px" width="15" height="10" viewBox="0 0 15 10"><path d="M1.5 5Q7.5 -2 13.5 5Q7.5 12 1.5 5Z" fill="#6a6a6a"/><circle cx="7.5" cy="5" r="2.7" fill="#2a2a2a"/><circle cx="6.5" cy="3.9" r="1" fill="#fff"/></svg>
<div class="a" style="left:1320px;top:447.5px;width:168px;height:2px;background:#d9dadd"></div>
<div class="t" style="left:1351.5px;top:460.5px;font-size:9.1px;color:#555">Basic Cut</div>
<svg style="left:1464px;top:460px" width="15" height="10" viewBox="0 0 15 10"><path d="M1.5 5Q7.5 -2 13.5 5Q7.5 12 1.5 5Z" fill="#6a6a6a"/><circle cx="7.5" cy="5" r="2.7" fill="#2a2a2a"/><circle cx="6.5" cy="3.9" r="1" fill="#fff"/></svg>
<div class="a" style="left:1320px;top:481.5px;width:168px;height:2px;background:#d9dadd"></div>
<div class="t" style="left:1351.5px;top:494.5px;font-size:9.1px;color:#555">Basic Cut</div>
<svg style="left:1464px;top:494px" width="15" height="10" viewBox="0 0 15 10"><path d="M1.5 5Q7.5 -2 13.5 5Q7.5 12 1.5 5Z" fill="#6a6a6a"/><circle cx="7.5" cy="5" r="2.7" fill="#2a2a2a"/><circle cx="6.5" cy="3.9" r="1" fill="#fff"/></svg>
<div class="a" style="left:1320px;top:515.5px;width:168px;height:2px;background:#d9dadd"></div>
<div class="t" style="left:1351.5px;top:528.5px;font-size:9.1px;color:#555">Basic Cut</div>
<svg style="left:1464px;top:528px" width="15" height="10" viewBox="0 0 15 10"><path d="M1.5 5Q7.5 -2 13.5 5Q7.5 12 1.5 5Z" fill="#6a6a6a"/><circle cx="7.5" cy="5" r="2.7" fill="#2a2a2a"/><circle cx="6.5" cy="3.9" r="1" fill="#fff"/></svg>
<div class="a" style="left:1320px;top:549.5px;width:168px;height:2px;background:#d9dadd"></div>
<div class="t" style="left:1351.5px;top:562.5px;font-size:9.1px;color:#555">Basic Cut</div>
<svg style="left:1464px;top:562px" width="15" height="10" viewBox="0 0 15 10"><path d="M1.5 5Q7.5 -2 13.5 5Q7.5 12 1.5 5Z" fill="#6a6a6a"/><circle cx="7.5" cy="5" r="2.7" fill="#2a2a2a"/><circle cx="6.5" cy="3.9" r="1" fill="#fff"/></svg>
<div class="a" style="left:1320px;top:583.5px;width:168px;height:2px;background:#d9dadd"></div>
<div class="t" style="left:1351.5px;top:596.5px;font-size:9.1px;color:#555">Basic Cut</div>
<svg style="left:1464px;top:596px" width="15" height="10" viewBox="0 0 15 10"><path d="M1.5 5Q7.5 -2 13.5 5Q7.5 12 1.5 5Z" fill="#6a6a6a"/><circle cx="7.5" cy="5" r="2.7" fill="#2a2a2a"/><circle cx="6.5" cy="3.9" r="1" fill="#fff"/></svg>
<div class="a" style="left:1320px;top:617.5px;width:168px;height:2px;background:#d9dadd"></div>
<div class="t" style="left:1351.5px;top:630.5px;font-size:9.1px;color:#555">Basic Cut</div>
<svg style="left:1464px;top:630px" width="15" height="10" viewBox="0 0 15 10"><path d="M1.5 5Q7.5 -2 13.5 5Q7.5 12 1.5 5Z" fill="#6a6a6a"/><circle cx="7.5" cy="5" r="2.7" fill="#2a2a2a"/><circle cx="6.5" cy="3.9" r="1" fill="#fff"/></svg>
<div class="a" style="left:1320px;top:651.5px;width:168px;height:2px;background:#d9dadd"></div>
<div class="t" style="left:1351.5px;top:664.5px;font-size:9.1px;color:#555">Basic Cut</div>
<svg style="left:1464px;top:664px" width="15" height="10" viewBox="0 0 15 10"><path d="M1.5 5Q7.5 -2 13.5 5Q7.5 12 1.5 5Z" fill="#6a6a6a"/><circle cx="7.5" cy="5" r="2.7" fill="#2a2a2a"/><circle cx="6.5" cy="3.9" r="1" fill="#fff"/></svg>
<div class="a" style="left:1320px;top:685.5px;width:168px;height:2px;background:#d9dadd"></div>
<div class="t" style="left:1351.5px;top:698.5px;font-size:9.1px;color:#555">Basic Cut</div>
<svg style="left:1464px;top:698px" width="15" height="10" viewBox="0 0 15 10"><path d="M1.5 5Q7.5 -2 13.5 5Q7.5 12 1.5 5Z" fill="#6a6a6a"/><circle cx="7.5" cy="5" r="2.7" fill="#2a2a2a"/><circle cx="6.5" cy="3.9" r="1" fill="#fff"/></svg>
<div class="a" style="left:1320px;top:719.5px;width:168px;height:2px;background:#d9dadd"></div>
<div class="t" style="left:1351.5px;top:732.5px;font-size:9.1px;color:#555">Basic Cut</div>
<svg style="left:1464px;top:732px" width="15" height="10" viewBox="0 0 15 10"><path d="M1.5 5Q7.5 -2 13.5 5Q7.5 12 1.5 5Z" fill="#6a6a6a"/><circle cx="7.5" cy="5" r="2.7" fill="#2a2a2a"/><circle cx="6.5" cy="3.9" r="1" fill="#fff"/></svg>
<div class="a" style="left:1320px;top:753.5px;width:168px;height:2px;background:#d9dadd"></div>
<div class="t" style="left:1351.5px;top:764.5px;font-size:9.1px;color:#555">Basic Cut</div>
<svg style="left:1464px;top:764px" width="15" height="10" viewBox="0 0 15 10"><path d="M1.5 5Q7.5 -2 13.5 5Q7.5 12 1.5 5Z" fill="#6a6a6a"/><circle cx="7.5" cy="5" r="2.7" fill="#2a2a2a"/><circle cx="6.5" cy="3.9" r="1" fill="#fff"/></svg>
<svg style="left:0;top:0" width="1500" height="849"><path d="M1320.5 222Q1327 222 1331.5 230Q1327 232 1324 229Q1321 226 1320.5 222Z M1343.5 222Q1337 222 1332.5 230Q1337 232 1340 229Q1343 226 1343.5 222Z" fill="#888" stroke="#444" stroke-width="0.9"/><path d="M1322 224L1330 230M1324 223L1331 229M1342 224L1334 230M1340 223L1333 229" stroke="#444" stroke-width="0.6"/><path d="M1325 275Q1330 276 1336 283Q1340 288 1339 290Q1334 296 1327 297Q1330 292 1328 286Q1326 280 1325 275Z" fill="#9a9a9a" stroke="#333" stroke-width="1"/><path d="M1327 279L1338 289M1328 284L1338 290M1329 289L1337 292M1331 277L1329 295M1334 280L1333 295" stroke="#333" stroke-width="0.7"/><path d="M1321 369Q1327 366 1331 372Q1328 375 1324 373Z M1342 369Q1336 366 1332 372Q1335 375 1339 373Z" fill="#999" stroke="#555" stroke-width="0.8"/><path d="M1324 428Q1331 424 1339 428Q1340 434 1331 437Q1324 435 1324 428Z" fill="#ef7f82" stroke="#9b5a5a" stroke-width="0.8"/><circle cx="1331.5" cy="465" r="5.5" fill="#000"/><circle cx="1330" cy="463" r="1.2" fill="#fff"/><circle cx="1331.5" cy="499" r="5.5" fill="#000"/><circle cx="1330" cy="497" r="1.2" fill="#fff"/><circle cx="1331.5" cy="533" r="5.5" fill="#eceae6" stroke="#555" stroke-width="1"/><circle cx="1331.5" cy="567" r="5.5" fill="#eceae6" stroke="#555" stroke-width="1"/><path d="M1325.5 595Q1331.5 590 1337.5 595Q1338 600 1333 600.5L1332 601.5L1331 601.5L1330 600.5Q1325 600 1325.5 595Z" fill="#000"/><path d="M1323.5 602.5Q1324 606 1327.5 606Q1331 606 1331.5 601M1339.5 602.5Q1339 606 1335.5 606Q1332 606 1331.5 601" fill="none" stroke="#000" stroke-width="1.6"/><path d="M1325.5 624.5H1338.5V632Q1338 640 1332 641Q1326 640 1325.5 632Z" fill="#ee6f78" stroke="#7a5050" stroke-width="0.9"/><path d="M1323.5 674Q1323 670 1326 667Q1327 662 1329 660.8Q1331.5 660.5 1332 664Q1332.5 667.5 1336 669Q1341 670.5 1342 674Q1342 677 1339 677H1325Q1323.5 676.5 1323.5 674Z" fill="#e8e7e2" stroke="#8a8a88" stroke-width="0.9"/><path d="M1323.5 708Q1323 704 1326 701Q1328 696 1330 694.8Q1332 695 1333 698Q1335 702 1338 704Q1342 706 1342 708.5Q1341.5 711 1338 711H1325Q1323.5 710.5 1323.5 708Z" fill="#e8e7e2" stroke="#8a8a88" stroke-width="0.9"/><path d="M1323.5 740Q1323 737 1326 734Q1329 729.5 1331 729Q1333 729.5 1335 732Q1338 734 1341 736.5Q1342.5 739 1341.5 741Q1340.5 743 1338 743H1325Q1323.5 742.5 1323.5 740Z" fill="#e8e7e2" stroke="#8a8a88" stroke-width="0.9"/><path d="M1323 770Q1324 764 1329 761Q1334 760 1338 764" fill="#e8e7e2" stroke="#8a8a88" stroke-width="0.9"/></svg>
<div class="a" style="left:1298px;top:768px;width:202px;height:40px;background:#f2f3f5;border-top:1px solid #e8e8ea"></div>
<div class="a" style="left:1306px;top:774px;width:41.5px;height:28.5px;background:#fff;border:1px solid #777;border-radius:2px"></div>
<div class="t" style="left:1355px;top:784px;font-size:7.6px;color:#333">Blank Canvas</div>
<div class="a" style="left:1298px;top:807.5px;width:202px;height:38px;background:#e3e3e6"></div>
<div class="t" style="left:1307px;top:833.5px;font-size:7.3px;color:#c6c6ca">Slice</div>
<div class="t" style="left:1343px;top:833.5px;font-size:7.3px;color:#c6c6ca">Weld</div>
<div class="t" style="left:1380px;top:833.5px;font-size:7.3px;color:#c6c6ca">Attach</div>
<div class="t" style="left:1422px;top:833.5px;font-size:7.3px;color:#c6c6ca">Flatten</div>
<div class="t" style="left:1465px;top:833.5px;font-size:7.3px;color:#c6c6ca">Contour</div>
<svg style="left:0;top:0" width="1500" height="849"><rect x="1310.5" y="811.5" width="7" height="7" fill="none" stroke="#ccc"/><circle cx="1318" cy="819" r="4" fill="none" stroke="#ccc"/><path d="M1345.5 811.5H1352.5V816.5H1357.5V824.5H1349.5V818.5H1345.5Z" fill="none" stroke="#ccc"/><path d="M1385 813L1396 824M1387 811L1398 822" stroke="#ccc" stroke-width="2.4" stroke-linecap="round"/><path d="M1426 819L1433 823L1440 819M1426 822L1433 826L1440 822M1433 811V818M1430 815L1433 818L1436 815" fill="none" stroke="#ccc"/><rect x="1471.5" y="810.5" width="14" height="14" fill="none" stroke="#ccc"/></svg>
<div class="a" style="left:1488.5px;top:128px;width:11.5px;height:640px;background:#f3f3f4"></div>
<div class="a" style="left:1490.5px;top:142px;width:9.5px;height:392px;background:#c1c1c3"></div>
<svg style="left:1492px;top:133px" width="6" height="4"><path d="M0 3.5H6L3 0Z" fill="#888"/></svg>
<svg style="left:1492px;top:760px" width="6" height="4"><path d="M0 0H6L3 3.5Z" fill="#333"/></svg>
<div class="a" style="left:1297.5px;top:128px;width:1px;height:717px;background:#e4e4e6"></div>
<svg style="left:0;top:0" width="1500" height="849"><path d="M1383.7 162.2L1384 182.8L1388.4 178.5L1392.5 186.5L1395.5 185L1391.5 177.5L1398.5 177.3Z" fill="#000" stroke="#fff" stroke-width="0.8"/></svg>
</body></html>
